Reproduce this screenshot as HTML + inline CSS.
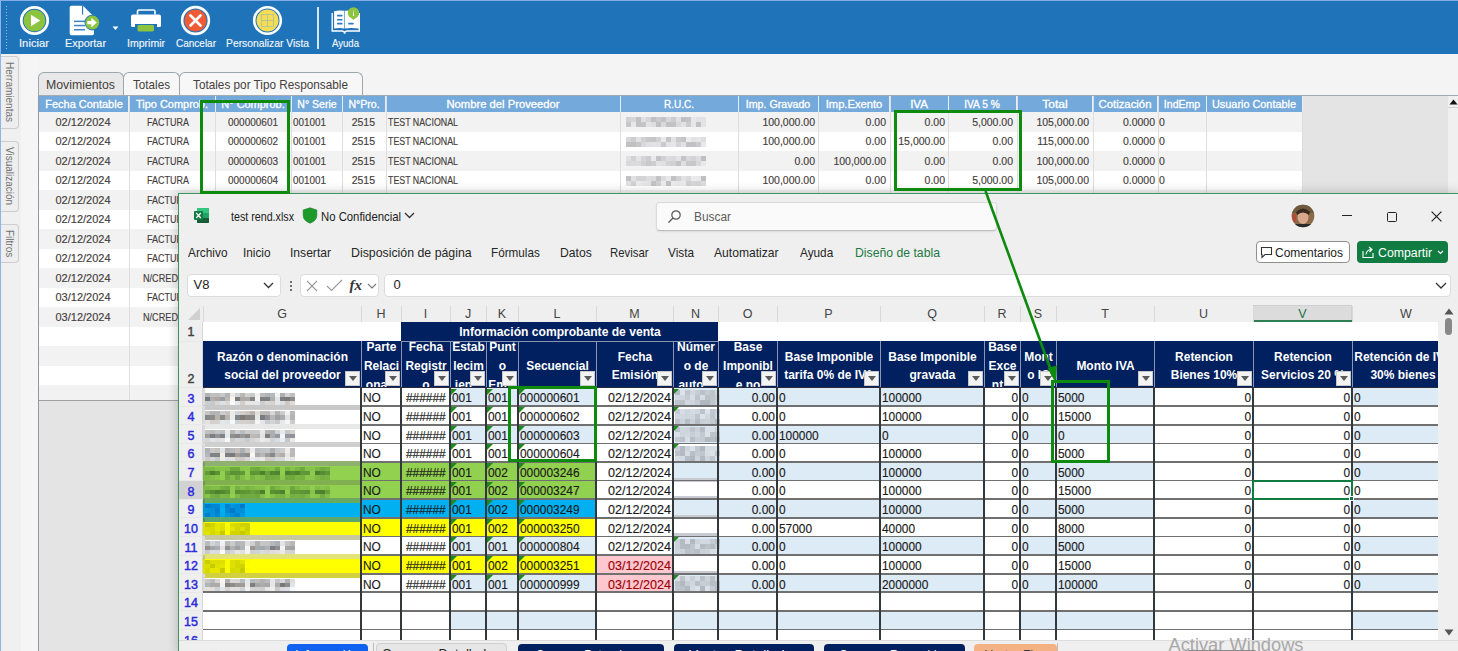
<!DOCTYPE html><html><head><meta charset="utf-8"><style>
html,body{margin:0;padding:0}
body{width:1458px;height:651px;overflow:hidden;position:relative;background:#f4f4f4;font-family:"Liberation Sans",sans-serif}
body div, body span, body svg{position:absolute;box-sizing:border-box}
.t{white-space:nowrap;display:block}
</style></head><body>
<div style="left:0px;top:0px;width:1458px;height:54px;background:#1f73b8"></div>
<div style="left:0px;top:0px;width:1458px;height:1px;background:#86aee6"></div>
<div style="left:0px;top:0px;width:1px;height:651px;background:#8fb4ea"></div>
<div style="left:6px;top:6px;width:1px;height:1px;background:#9cc0e6"></div>
<div style="left:6px;top:9px;width:1px;height:1px;background:#9cc0e6"></div>
<div style="left:6px;top:12px;width:1px;height:1px;background:#9cc0e6"></div>
<div style="left:6px;top:15px;width:1px;height:1px;background:#9cc0e6"></div>
<div style="left:6px;top:18px;width:1px;height:1px;background:#9cc0e6"></div>
<div style="left:6px;top:21px;width:1px;height:1px;background:#9cc0e6"></div>
<div style="left:6px;top:24px;width:1px;height:1px;background:#9cc0e6"></div>
<div style="left:6px;top:27px;width:1px;height:1px;background:#9cc0e6"></div>
<div style="left:6px;top:30px;width:1px;height:1px;background:#9cc0e6"></div>
<div style="left:6px;top:33px;width:1px;height:1px;background:#9cc0e6"></div>
<div style="left:6px;top:36px;width:1px;height:1px;background:#9cc0e6"></div>
<div style="left:6px;top:39px;width:1px;height:1px;background:#9cc0e6"></div>
<div style="left:6px;top:42px;width:1px;height:1px;background:#9cc0e6"></div>
<div style="left:6px;top:45px;width:1px;height:1px;background:#9cc0e6"></div>
<div style="left:6px;top:48px;width:1px;height:1px;background:#9cc0e6"></div>
<svg style="left:19px;top:5px" width="31" height="31" viewBox="0 0 31 31">
<circle cx="15.5" cy="15.5" r="13.2" fill="none" stroke="#fff" stroke-width="2.8"/>
<circle cx="15.5" cy="15.5" r="10.8" fill="#8cc43f"/>
<path d="M12 9.8 L21.2 15.5 L12 21.2 Z" fill="#fff"/>
</svg>
<svg style="left:68px;top:4px" width="34" height="33" viewBox="0 0 34 33">
<path d="M3.5 1.7 H15 L26 12.7 V29.5 Q26 31.3 24.2 31.3 H3.5 Q1.7 31.3 1.7 29.5 V3.5 Q1.7 1.7 3.5 1.7 Z" fill="#fff"/>
<path d="M14.6 1.5 V10.5" stroke="#1f73b8" stroke-width="1.1"/>
<rect x="6" y="16.6" width="11" height="1.5" fill="#3d85c8"/>
<rect x="6" y="20.8" width="11" height="1.5" fill="#3d85c8"/>
<rect x="6" y="25" width="11" height="1.5" fill="#3d85c8"/>
<circle cx="24.3" cy="18.6" r="7.8" fill="#1f73b8"/>
<circle cx="24.3" cy="18.6" r="7" fill="#8cc43f"/>
<path d="M19.3 17 H23.3 V13.8 L28.8 18.6 L23.3 23.4 V20.2 H19.3 Z" fill="#fff"/>
</svg>
<svg style="left:111.5px;top:25.5px" width="7" height="5" viewBox="0 0 7 5"><path d="M0.5 0.5 H6.5 L3.5 4 Z" fill="#fff"/></svg>
<svg style="left:130px;top:8px" width="32" height="25" viewBox="0 0 32 25">
<path d="M7.5 6.5 V3.5 Q7.5 2 9 2 H23.5 Q25 2 25 3.5 V6.5" fill="none" stroke="#fff" stroke-width="1.6"/>
<path d="M3 6.5 H29 Q31 6.5 31 8.5 V17.5 Q31 19 29.5 19 H27 V16 H5 V19 H2.5 Q1 19 1 17.5 V8.5 Q1 6.5 3 6.5 Z" fill="#fff"/>
<rect x="7.5" y="17" width="16.5" height="6.4" rx="1.4" fill="#8cc43f"/>
</svg>
<svg style="left:180px;top:5px" width="31" height="31" viewBox="0 0 31 31">
<circle cx="15.5" cy="15.5" r="13.4" fill="none" stroke="#fff" stroke-width="2.6"/>
<circle cx="15.5" cy="15.5" r="11" fill="#ef5b34"/>
<path d="M10.5 10.5 L20.5 20.5 M20.5 10.5 L10.5 20.5" stroke="#fff" stroke-width="2.6" stroke-linecap="round"/>
</svg>
<svg style="left:252px;top:5px" width="31" height="31" viewBox="0 0 31 31">
<circle cx="15.5" cy="15.5" r="13.3" fill="none" stroke="#fff" stroke-width="2.6"/>
<circle cx="15.5" cy="15.5" r="11" fill="#f8dc55"/>
<rect x="9.5" y="9.5" width="12" height="12" fill="none" stroke="#a8c49a" stroke-width="0.9"/>
<path d="M15.5 9.5 V21.5 M9.5 15.5 H21.5" stroke="#a8c49a" stroke-width="0.9"/>
</svg>
<div style="left:317px;top:7px;width:1.5px;height:42px;background:#d6e6f5"></div>
<svg style="left:330px;top:6px" width="32" height="30" viewBox="0 0 32 30">
<path d="M4.1 5.2 Q9 3.8 14.3 4.8 V22.5 Q9 21.6 4.1 22.5 Z" fill="#fff"/>
<path d="M14.8 4.8 Q20 3.8 29 5.2 V22.5 Q20 21.6 14.8 22.5 Z" fill="#fff"/>
<path d="M2.2 7 V25 H12.5 Q14.5 25.3 14.6 27.6 Q14.7 25.3 16.7 25 H29.3 V7" fill="none" stroke="#fff" stroke-width="1.4"/>
<rect x="7" y="8.8" width="5.5" height="1.6" rx="0.6" fill="#2a7cc4"/>
<rect x="7" y="12.9" width="5.5" height="1.6" rx="0.6" fill="#2a7cc4"/>
<rect x="7" y="16.8" width="5.5" height="1.6" rx="0.6" fill="#2a7cc4"/>
<rect x="18.2" y="16.8" width="5.5" height="1.6" rx="0.6" fill="#2a7cc4"/>
<circle cx="23.5" cy="6.9" r="5.7" fill="#8cc43f"/>
<path d="M20.5 10.5 L23.5 14.2 L26.5 10.5 Z" fill="#8cc43f"/>
<path d="M23.5 3.2 L24.1 10 H22.9 Z" fill="#fff"/>
</svg>
<span id="t1" class="t " style="left:19px;top:35.75px;line-height:14.30px;font-size:11px;color:#f2f7fc;transform:scaleX(1.0224);transform-origin:0 50%;-webkit-text-stroke:0.15px #f2f7fc;">Iniciar</span>
<span id="t2" class="t " style="left:65px;top:35.75px;line-height:14.30px;font-size:11px;color:#f2f7fc;transform:scaleX(0.9861);transform-origin:0 50%;-webkit-text-stroke:0.15px #f2f7fc;">Exportar</span>
<span id="t3" class="t " style="left:127px;top:35.75px;line-height:14.30px;font-size:11px;color:#f2f7fc;transform:scaleX(0.9567);transform-origin:0 50%;-webkit-text-stroke:0.15px #f2f7fc;">Imprimir</span>
<span id="t4" class="t " style="left:176px;top:35.75px;line-height:14.30px;font-size:11px;color:#f2f7fc;transform:scaleX(0.9084);transform-origin:0 50%;-webkit-text-stroke:0.15px #f2f7fc;">Cancelar</span>
<span id="t5" class="t " style="left:226px;top:35.75px;line-height:14.30px;font-size:11px;color:#f2f7fc;transform:scaleX(0.9384);transform-origin:0 50%;-webkit-text-stroke:0.15px #f2f7fc;">Personalizar Vista</span>
<span id="t6" class="t " style="left:332px;top:35.75px;line-height:14.30px;font-size:11px;color:#f2f7fc;transform:scaleX(0.8710);transform-origin:0 50%;-webkit-text-stroke:0.15px #f2f7fc;">Ayuda</span>
<div style="left:1px;top:54px;width:20px;height:597px;background:#f0f0f0"></div>
<div style="left:21px;top:54px;width:17px;height:597px;background:#f5f5f5"></div>
<div style="left:1px;top:56px;width:18px;height:73px;background:#eeeeee;border:1px solid #cdcdcd;border-left:none;border-radius:0 4px 4px 0"></div>
<span class="t" style="left:2px;top:56px;width:15px;height:73px;writing-mode:vertical-rl;font-size:10px;color:#707070;line-height:15px;text-align:center">Herramientas</span>
<div style="left:1px;top:141px;width:18px;height:71px;background:#eeeeee;border:1px solid #cdcdcd;border-left:none;border-radius:0 4px 4px 0"></div>
<span class="t" style="left:2px;top:141px;width:15px;height:71px;writing-mode:vertical-rl;font-size:10px;color:#707070;line-height:15px;text-align:center">Visualización</span>
<div style="left:1px;top:224px;width:18px;height:39px;background:#eeeeee;border:1px solid #cdcdcd;border-left:none;border-radius:0 4px 4px 0"></div>
<span class="t" style="left:2px;top:224px;width:15px;height:39px;writing-mode:vertical-rl;font-size:10px;color:#707070;line-height:15px;text-align:center">Filtros</span>
<div style="left:38px;top:72px;width:86px;height:24px;background:#e8e8e8;border:1px solid #9aa7ad;border-bottom:none;border-radius:6px 6px 0 0"></div>
<div style="left:123px;top:72px;width:57px;height:24px;background:#f7f7f7;border:1px solid #9aa7ad;border-bottom:none;border-radius:6px 6px 0 0"></div>
<div style="left:179px;top:72px;width:184px;height:24px;background:#f7f7f7;border:1px solid #9aa7ad;border-bottom:none;border-radius:6px 6px 0 0"></div>
<span id="t7" class="t " style="left:46px;top:76.22px;line-height:17.55px;font-size:13.5px;color:#46403b;transform:scaleX(0.9105);transform-origin:0 50%;">Movimientos</span>
<span id="t8" class="t " style="left:133px;top:76.22px;line-height:17.55px;font-size:13.5px;color:#46403b;transform:scaleX(0.8649);transform-origin:0 50%;">Totales</span>
<span id="t9" class="t " style="left:193px;top:76.22px;line-height:17.55px;font-size:13.5px;color:#46403b;transform:scaleX(0.8714);transform-origin:0 50%;">Totales por Tipo Responsable</span>
<div style="left:38px;top:95px;width:1420px;height:306px;background:#e4e4e4"></div>
<div style="left:38px;top:95px;width:1px;height:556px;background:#8d9ba1"></div>
<div style="left:38px;top:95px;width:1420px;height:1px;background:#a3abb0"></div>
<div style="left:39px;top:401px;width:1419px;height:250px;background:#e4e4e4"></div>
<div style="left:39px;top:96px;width:1263px;height:16px;background:#74a9db"></div>
<div style="left:39px;top:112.0px;width:1263px;height:20.0px;background:#f2f2f2"></div>
<div style="left:39px;top:131.5px;width:1263px;height:20.0px;background:#ffffff"></div>
<div style="left:39px;top:151.0px;width:1263px;height:20.0px;background:#f2f2f2"></div>
<div style="left:39px;top:170.5px;width:1263px;height:20.0px;background:#ffffff"></div>
<div style="left:39px;top:190.0px;width:1263px;height:20.0px;background:#f2f2f2"></div>
<div style="left:39px;top:209.5px;width:1263px;height:20.0px;background:#ffffff"></div>
<div style="left:39px;top:229.0px;width:1263px;height:20.0px;background:#f2f2f2"></div>
<div style="left:39px;top:248.5px;width:1263px;height:20.0px;background:#ffffff"></div>
<div style="left:39px;top:268.0px;width:1263px;height:20.0px;background:#f2f2f2"></div>
<div style="left:39px;top:287.5px;width:1263px;height:20.0px;background:#ffffff"></div>
<div style="left:39px;top:307.0px;width:1263px;height:20.0px;background:#f2f2f2"></div>
<div style="left:39px;top:326.5px;width:1263px;height:20.0px;background:#ffffff"></div>
<div style="left:39px;top:346.0px;width:1263px;height:20.0px;background:#f2f2f2"></div>
<div style="left:39px;top:365.5px;width:1263px;height:20.0px;background:#ffffff"></div>
<div style="left:39px;top:385.0px;width:1263px;height:15.5px;background:#f2f2f2"></div>
<div style="left:128.5px;top:96px;width:1px;height:304px;background:#dedede"></div>
<div style="left:128.0px;top:96px;width:1px;height:16px;background:#e6eef6"></div>
<div style="left:215px;top:96px;width:1px;height:304px;background:#dedede"></div>
<div style="left:214.5px;top:96px;width:1px;height:16px;background:#e6eef6"></div>
<div style="left:291px;top:96px;width:1px;height:304px;background:#dedede"></div>
<div style="left:290.5px;top:96px;width:1px;height:16px;background:#e6eef6"></div>
<div style="left:342.4px;top:96px;width:1px;height:304px;background:#dedede"></div>
<div style="left:341.9px;top:96px;width:1px;height:16px;background:#e6eef6"></div>
<div style="left:385.8px;top:96px;width:1px;height:304px;background:#dedede"></div>
<div style="left:385.3px;top:96px;width:1px;height:16px;background:#e6eef6"></div>
<div style="left:620px;top:96px;width:1px;height:304px;background:#dedede"></div>
<div style="left:619.5px;top:96px;width:1px;height:16px;background:#e6eef6"></div>
<div style="left:738px;top:96px;width:1px;height:304px;background:#dedede"></div>
<div style="left:737.5px;top:96px;width:1px;height:16px;background:#e6eef6"></div>
<div style="left:818px;top:96px;width:1px;height:304px;background:#dedede"></div>
<div style="left:817.5px;top:96px;width:1px;height:16px;background:#e6eef6"></div>
<div style="left:889.5px;top:96px;width:1px;height:304px;background:#dedede"></div>
<div style="left:889.0px;top:96px;width:1px;height:16px;background:#e6eef6"></div>
<div style="left:948px;top:96px;width:1px;height:304px;background:#dedede"></div>
<div style="left:947.5px;top:96px;width:1px;height:16px;background:#e6eef6"></div>
<div style="left:1016.5px;top:96px;width:1px;height:304px;background:#dedede"></div>
<div style="left:1016.0px;top:96px;width:1px;height:16px;background:#e6eef6"></div>
<div style="left:1092.5px;top:96px;width:1px;height:304px;background:#dedede"></div>
<div style="left:1092.0px;top:96px;width:1px;height:16px;background:#e6eef6"></div>
<div style="left:1157.5px;top:96px;width:1px;height:304px;background:#dedede"></div>
<div style="left:1157.0px;top:96px;width:1px;height:16px;background:#e6eef6"></div>
<div style="left:1206px;top:96px;width:1px;height:304px;background:#dedede"></div>
<div style="left:1205.5px;top:96px;width:1px;height:16px;background:#e6eef6"></div>
<div style="left:1302px;top:96px;width:1px;height:304px;background:#dedede"></div>
<div style="left:1301.5px;top:96px;width:1px;height:16px;background:#e6eef6"></div>
<span id="t10" class="t " style="left:83.75px;top:98.17px;line-height:13.65px;font-size:10.5px;color:#ffffff;transform:translateX(-50%) scaleX(1.0467);transform-origin:50% 50%;-webkit-text-stroke:0.3px #fff;">Fecha Contable</span>
<span id="t11" class="t " style="left:171.75px;top:98.17px;line-height:13.65px;font-size:10.5px;color:#ffffff;transform:translateX(-50%) scaleX(1.0425);transform-origin:50% 50%;-webkit-text-stroke:0.3px #fff;">Tipo Comprob.</span>
<span id="t12" class="t " style="left:253.0px;top:98.17px;line-height:13.65px;font-size:10.5px;color:#ffffff;transform:translateX(-50%) scaleX(1.0425);transform-origin:50% 50%;-webkit-text-stroke:0.3px #fff;">N° Comprob.</span>
<span id="t13" class="t " style="left:316.7px;top:98.17px;line-height:13.65px;font-size:10.5px;color:#ffffff;transform:translateX(-50%) scaleX(1.0021);transform-origin:50% 50%;-webkit-text-stroke:0.3px #fff;">N° Serie</span>
<span id="t14" class="t " style="left:364.1px;top:98.17px;line-height:13.65px;font-size:10.5px;color:#ffffff;transform:translateX(-50%) scaleX(1.0049);transform-origin:50% 50%;-webkit-text-stroke:0.3px #fff;">N°Pro.</span>
<span id="t15" class="t " style="left:502.9px;top:98.17px;line-height:13.65px;font-size:10.5px;color:#ffffff;transform:translateX(-50%) scaleX(1.0697);transform-origin:50% 50%;-webkit-text-stroke:0.3px #fff;">Nombre del Proveedor</span>
<span id="t16" class="t " style="left:679.0px;top:98.17px;line-height:13.65px;font-size:10.5px;color:#ffffff;transform:translateX(-50%) scaleX(0.9524);transform-origin:50% 50%;-webkit-text-stroke:0.3px #fff;">R.U.C.</span>
<span id="t17" class="t " style="left:778.0px;top:98.17px;line-height:13.65px;font-size:10.5px;color:#ffffff;transform:translateX(-50%) scaleX(1.0138);transform-origin:50% 50%;-webkit-text-stroke:0.3px #fff;">Imp. Gravado</span>
<span id="t18" class="t " style="left:853.75px;top:98.17px;line-height:13.65px;font-size:10.5px;color:#ffffff;transform:translateX(-50%) scaleX(1.0654);transform-origin:50% 50%;-webkit-text-stroke:0.3px #fff;">Imp.Exento</span>
<span id="t19" class="t " style="left:918.75px;top:98.17px;line-height:13.65px;font-size:10.5px;color:#ffffff;transform:translateX(-50%) scaleX(1.0956);transform-origin:50% 50%;-webkit-text-stroke:0.3px #fff;">IVA</span>
<span id="t20" class="t " style="left:982.25px;top:98.17px;line-height:13.65px;font-size:10.5px;color:#ffffff;transform:translateX(-50%) scaleX(0.9705);transform-origin:50% 50%;-webkit-text-stroke:0.3px #fff;">IVA 5 %</span>
<span id="t21" class="t " style="left:1054.5px;top:98.17px;line-height:13.65px;font-size:10.5px;color:#ffffff;transform:translateX(-50%) scaleX(1.1448);transform-origin:50% 50%;-webkit-text-stroke:0.3px #fff;">Total</span>
<span id="t22" class="t " style="left:1125.0px;top:98.17px;line-height:13.65px;font-size:10.5px;color:#ffffff;transform:translateX(-50%) scaleX(1.0809);transform-origin:50% 50%;-webkit-text-stroke:0.3px #fff;">Cotización</span>
<span id="t23" class="t " style="left:1181.75px;top:98.17px;line-height:13.65px;font-size:10.5px;color:#ffffff;transform:translateX(-50%) scaleX(1.0031);transform-origin:50% 50%;-webkit-text-stroke:0.3px #fff;">IndEmp</span>
<span id="t24" class="t " style="left:1254.0px;top:98.17px;line-height:13.65px;font-size:10.5px;color:#ffffff;transform:translateX(-50%) scaleX(1.0352);transform-origin:50% 50%;-webkit-text-stroke:0.3px #fff;">Usuario Contable</span>
<span id="t25" class="t " style="left:83.2px;top:115.52px;line-height:13.65px;font-size:10.5px;color:#45403c;transform:translateX(-50%) scaleX(1.0464);transform-origin:50% 50%;-webkit-text-stroke:0.15px #45403c;">02/12/2024</span>
<span id="t26" class="t " style="left:167.7px;top:115.52px;line-height:13.65px;font-size:10.5px;color:#45403c;transform:translateX(-50%) scaleX(0.8569);transform-origin:50% 50%;-webkit-text-stroke:0.15px #45403c;">FACTURA</span>
<span id="t27" class="t " style="left:252.5px;top:115.52px;line-height:13.65px;font-size:10.5px;color:#45403c;transform:translateX(-50%) scaleX(0.9512);transform-origin:50% 50%;-webkit-text-stroke:0.15px #45403c;">000000601</span>
<span id="t28" class="t " style="left:292.7px;top:115.52px;line-height:13.65px;font-size:10.5px;color:#45403c;transform:scaleX(0.9416);transform-origin:0 50%;-webkit-text-stroke:0.15px #45403c;">001001</span>
<span id="t29" class="t " style="left:375px;top:115.52px;line-height:13.65px;font-size:10.5px;color:#45403c;transform:translateX(-100%) scaleX(1.0000);transform-origin:100% 50%;-webkit-text-stroke:0.15px #45403c;">2515</span>
<span id="t30" class="t " style="left:388.3px;top:115.52px;line-height:13.65px;font-size:10.5px;color:#45403c;transform:scaleX(0.8408);transform-origin:0 50%;-webkit-text-stroke:0.15px #45403c;">TEST NACIONAL</span>
<div style="left:626px;top:117px;width:5px;height:5px;background:rgb(210,210,213)"></div>
<div style="left:626px;top:122px;width:5px;height:5px;background:rgb(199,199,202)"></div>
<div style="left:631px;top:117px;width:5px;height:5px;background:rgb(215,215,218)"></div>
<div style="left:631px;top:122px;width:5px;height:5px;background:rgb(231,231,234)"></div>
<div style="left:636px;top:117px;width:5px;height:5px;background:rgb(193,193,196)"></div>
<div style="left:636px;top:122px;width:5px;height:5px;background:rgb(194,194,197)"></div>
<div style="left:641px;top:117px;width:5px;height:5px;background:rgb(224,224,227)"></div>
<div style="left:641px;top:122px;width:5px;height:5px;background:rgb(196,196,199)"></div>
<div style="left:646px;top:117px;width:5px;height:5px;background:rgb(213,213,216)"></div>
<div style="left:646px;top:122px;width:5px;height:5px;background:rgb(227,227,230)"></div>
<div style="left:651px;top:117px;width:5px;height:5px;background:rgb(193,193,196)"></div>
<div style="left:651px;top:122px;width:5px;height:5px;background:rgb(222,222,225)"></div>
<div style="left:656px;top:117px;width:5px;height:5px;background:rgb(203,203,206)"></div>
<div style="left:656px;top:122px;width:5px;height:5px;background:rgb(192,192,195)"></div>
<div style="left:661px;top:117px;width:5px;height:5px;background:rgb(195,195,198)"></div>
<div style="left:661px;top:122px;width:5px;height:5px;background:rgb(217,217,220)"></div>
<div style="left:666px;top:117px;width:5px;height:5px;background:rgb(216,216,219)"></div>
<div style="left:666px;top:122px;width:5px;height:5px;background:rgb(194,194,197)"></div>
<div style="left:671px;top:117px;width:5px;height:5px;background:rgb(205,205,208)"></div>
<div style="left:671px;top:122px;width:5px;height:5px;background:rgb(195,195,198)"></div>
<div style="left:676px;top:117px;width:5px;height:5px;background:rgb(225,225,228)"></div>
<div style="left:676px;top:122px;width:5px;height:5px;background:rgb(217,217,220)"></div>
<div style="left:681px;top:117px;width:5px;height:5px;background:rgb(193,193,196)"></div>
<div style="left:681px;top:122px;width:5px;height:5px;background:rgb(226,226,229)"></div>
<div style="left:686px;top:117px;width:5px;height:5px;background:rgb(197,197,200)"></div>
<div style="left:686px;top:122px;width:5px;height:5px;background:rgb(204,204,207)"></div>
<div style="left:691px;top:117px;width:5px;height:5px;background:rgb(230,230,233)"></div>
<div style="left:691px;top:122px;width:5px;height:5px;background:rgb(230,230,233)"></div>
<div style="left:696px;top:117px;width:5px;height:5px;background:rgb(227,227,230)"></div>
<div style="left:696px;top:122px;width:5px;height:5px;background:rgb(193,193,196)"></div>
<div style="left:701px;top:117px;width:5px;height:5px;background:rgb(226,226,229)"></div>
<div style="left:701px;top:122px;width:5px;height:5px;background:rgb(227,227,230)"></div>
<span id="t31" class="t " style="left:815px;top:115.52px;line-height:13.65px;font-size:10.5px;color:#45403c;transform:translateX(-100%) scaleX(1.0000);transform-origin:100% 50%;-webkit-text-stroke:0.15px #45403c;">100,000.00</span>
<span id="t32" class="t " style="left:886px;top:115.52px;line-height:13.65px;font-size:10.5px;color:#45403c;transform:translateX(-100%) scaleX(1.0000);transform-origin:100% 50%;-webkit-text-stroke:0.15px #45403c;">0.00</span>
<span id="t33" class="t " style="left:945px;top:115.52px;line-height:13.65px;font-size:10.5px;color:#45403c;transform:translateX(-100%) scaleX(1.0000);transform-origin:100% 50%;-webkit-text-stroke:0.15px #45403c;">0.00</span>
<span id="t34" class="t " style="left:1013px;top:115.52px;line-height:13.65px;font-size:10.5px;color:#45403c;transform:translateX(-100%) scaleX(1.0000);transform-origin:100% 50%;-webkit-text-stroke:0.15px #45403c;">5,000.00</span>
<span id="t35" class="t " style="left:1089px;top:115.52px;line-height:13.65px;font-size:10.5px;color:#45403c;transform:translateX(-100%) scaleX(1.0000);transform-origin:100% 50%;-webkit-text-stroke:0.15px #45403c;">105,000.00</span>
<span id="t36" class="t " style="left:1155px;top:115.52px;line-height:13.65px;font-size:10.5px;color:#45403c;transform:translateX(-100%) scaleX(1.0000);transform-origin:100% 50%;-webkit-text-stroke:0.15px #45403c;">0.0000</span>
<span id="t37" class="t " style="left:1159px;top:115.52px;line-height:13.65px;font-size:10.5px;color:#45403c;transform:scaleX(1.0000);transform-origin:0 50%;-webkit-text-stroke:0.15px #45403c;">0</span>
<span id="t38" class="t " style="left:83.2px;top:135.03px;line-height:13.65px;font-size:10.5px;color:#45403c;transform:translateX(-50%) scaleX(1.0464);transform-origin:50% 50%;-webkit-text-stroke:0.15px #45403c;">02/12/2024</span>
<span id="t39" class="t " style="left:167.7px;top:135.03px;line-height:13.65px;font-size:10.5px;color:#45403c;transform:translateX(-50%) scaleX(0.8569);transform-origin:50% 50%;-webkit-text-stroke:0.15px #45403c;">FACTURA</span>
<span id="t40" class="t " style="left:252.5px;top:135.03px;line-height:13.65px;font-size:10.5px;color:#45403c;transform:translateX(-50%) scaleX(0.9512);transform-origin:50% 50%;-webkit-text-stroke:0.15px #45403c;">000000602</span>
<span id="t41" class="t " style="left:292.7px;top:135.03px;line-height:13.65px;font-size:10.5px;color:#45403c;transform:scaleX(0.9416);transform-origin:0 50%;-webkit-text-stroke:0.15px #45403c;">001001</span>
<span id="t42" class="t " style="left:375px;top:135.03px;line-height:13.65px;font-size:10.5px;color:#45403c;transform:translateX(-100%) scaleX(1.0000);transform-origin:100% 50%;-webkit-text-stroke:0.15px #45403c;">2515</span>
<span id="t43" class="t " style="left:388.3px;top:135.03px;line-height:13.65px;font-size:10.5px;color:#45403c;transform:scaleX(0.8408);transform-origin:0 50%;-webkit-text-stroke:0.15px #45403c;">TEST NACIONAL</span>
<div style="left:626px;top:137px;width:5px;height:5px;background:rgb(215,215,218)"></div>
<div style="left:626px;top:142px;width:5px;height:5px;background:rgb(193,193,196)"></div>
<div style="left:631px;top:137px;width:5px;height:5px;background:rgb(204,204,207)"></div>
<div style="left:631px;top:142px;width:5px;height:5px;background:rgb(192,192,195)"></div>
<div style="left:636px;top:137px;width:5px;height:5px;background:rgb(225,225,228)"></div>
<div style="left:636px;top:142px;width:5px;height:5px;background:rgb(198,198,201)"></div>
<div style="left:641px;top:137px;width:5px;height:5px;background:rgb(208,208,211)"></div>
<div style="left:641px;top:142px;width:5px;height:5px;background:rgb(216,216,219)"></div>
<div style="left:646px;top:137px;width:5px;height:5px;background:rgb(199,199,202)"></div>
<div style="left:646px;top:142px;width:5px;height:5px;background:rgb(224,224,227)"></div>
<div style="left:651px;top:137px;width:5px;height:5px;background:rgb(197,197,200)"></div>
<div style="left:651px;top:142px;width:5px;height:5px;background:rgb(226,226,229)"></div>
<div style="left:656px;top:137px;width:5px;height:5px;background:rgb(209,209,212)"></div>
<div style="left:656px;top:142px;width:5px;height:5px;background:rgb(225,225,228)"></div>
<div style="left:661px;top:137px;width:5px;height:5px;background:rgb(233,233,236)"></div>
<div style="left:661px;top:142px;width:5px;height:5px;background:rgb(201,201,204)"></div>
<div style="left:666px;top:137px;width:5px;height:5px;background:rgb(196,196,199)"></div>
<div style="left:666px;top:142px;width:5px;height:5px;background:rgb(227,227,230)"></div>
<div style="left:671px;top:137px;width:5px;height:5px;background:rgb(226,226,229)"></div>
<div style="left:671px;top:142px;width:5px;height:5px;background:rgb(230,230,233)"></div>
<div style="left:676px;top:137px;width:5px;height:5px;background:rgb(202,202,205)"></div>
<div style="left:676px;top:142px;width:5px;height:5px;background:rgb(213,213,216)"></div>
<div style="left:681px;top:137px;width:5px;height:5px;background:rgb(196,196,199)"></div>
<div style="left:681px;top:142px;width:5px;height:5px;background:rgb(225,225,228)"></div>
<div style="left:686px;top:137px;width:5px;height:5px;background:rgb(235,235,238)"></div>
<div style="left:686px;top:142px;width:5px;height:5px;background:rgb(194,194,197)"></div>
<div style="left:691px;top:137px;width:5px;height:5px;background:rgb(226,226,229)"></div>
<div style="left:691px;top:142px;width:5px;height:5px;background:rgb(193,193,196)"></div>
<div style="left:696px;top:137px;width:5px;height:5px;background:rgb(229,229,232)"></div>
<div style="left:696px;top:142px;width:5px;height:5px;background:rgb(203,203,206)"></div>
<div style="left:701px;top:137px;width:5px;height:5px;background:rgb(221,221,224)"></div>
<div style="left:701px;top:142px;width:5px;height:5px;background:rgb(233,233,236)"></div>
<span id="t44" class="t " style="left:815px;top:135.03px;line-height:13.65px;font-size:10.5px;color:#45403c;transform:translateX(-100%) scaleX(1.0000);transform-origin:100% 50%;-webkit-text-stroke:0.15px #45403c;">100,000.00</span>
<span id="t45" class="t " style="left:886px;top:135.03px;line-height:13.65px;font-size:10.5px;color:#45403c;transform:translateX(-100%) scaleX(1.0000);transform-origin:100% 50%;-webkit-text-stroke:0.15px #45403c;">0.00</span>
<span id="t46" class="t " style="left:945px;top:135.03px;line-height:13.65px;font-size:10.5px;color:#45403c;transform:translateX(-100%) scaleX(1.0000);transform-origin:100% 50%;-webkit-text-stroke:0.15px #45403c;">15,000.00</span>
<span id="t47" class="t " style="left:1013px;top:135.03px;line-height:13.65px;font-size:10.5px;color:#45403c;transform:translateX(-100%) scaleX(1.0000);transform-origin:100% 50%;-webkit-text-stroke:0.15px #45403c;">0.00</span>
<span id="t48" class="t " style="left:1089px;top:135.03px;line-height:13.65px;font-size:10.5px;color:#45403c;transform:translateX(-100%) scaleX(1.0000);transform-origin:100% 50%;-webkit-text-stroke:0.15px #45403c;">115,000.00</span>
<span id="t49" class="t " style="left:1155px;top:135.03px;line-height:13.65px;font-size:10.5px;color:#45403c;transform:translateX(-100%) scaleX(1.0000);transform-origin:100% 50%;-webkit-text-stroke:0.15px #45403c;">0.0000</span>
<span id="t50" class="t " style="left:1159px;top:135.03px;line-height:13.65px;font-size:10.5px;color:#45403c;transform:scaleX(1.0000);transform-origin:0 50%;-webkit-text-stroke:0.15px #45403c;">0</span>
<span id="t51" class="t " style="left:83.2px;top:154.53px;line-height:13.65px;font-size:10.5px;color:#45403c;transform:translateX(-50%) scaleX(1.0464);transform-origin:50% 50%;-webkit-text-stroke:0.15px #45403c;">02/12/2024</span>
<span id="t52" class="t " style="left:167.7px;top:154.53px;line-height:13.65px;font-size:10.5px;color:#45403c;transform:translateX(-50%) scaleX(0.8569);transform-origin:50% 50%;-webkit-text-stroke:0.15px #45403c;">FACTURA</span>
<span id="t53" class="t " style="left:252.5px;top:154.53px;line-height:13.65px;font-size:10.5px;color:#45403c;transform:translateX(-50%) scaleX(0.9512);transform-origin:50% 50%;-webkit-text-stroke:0.15px #45403c;">000000603</span>
<span id="t54" class="t " style="left:292.7px;top:154.53px;line-height:13.65px;font-size:10.5px;color:#45403c;transform:scaleX(0.9416);transform-origin:0 50%;-webkit-text-stroke:0.15px #45403c;">001001</span>
<span id="t55" class="t " style="left:375px;top:154.53px;line-height:13.65px;font-size:10.5px;color:#45403c;transform:translateX(-100%) scaleX(1.0000);transform-origin:100% 50%;-webkit-text-stroke:0.15px #45403c;">2515</span>
<span id="t56" class="t " style="left:388.3px;top:154.53px;line-height:13.65px;font-size:10.5px;color:#45403c;transform:scaleX(0.8408);transform-origin:0 50%;-webkit-text-stroke:0.15px #45403c;">TEST NACIONAL</span>
<div style="left:626px;top:156px;width:5px;height:5px;background:rgb(224,224,227)"></div>
<div style="left:626px;top:161px;width:5px;height:5px;background:rgb(217,217,220)"></div>
<div style="left:631px;top:156px;width:5px;height:5px;background:rgb(210,210,213)"></div>
<div style="left:631px;top:161px;width:5px;height:5px;background:rgb(219,219,222)"></div>
<div style="left:636px;top:156px;width:5px;height:5px;background:rgb(227,227,230)"></div>
<div style="left:636px;top:161px;width:5px;height:5px;background:rgb(219,219,222)"></div>
<div style="left:641px;top:156px;width:5px;height:5px;background:rgb(213,213,216)"></div>
<div style="left:641px;top:161px;width:5px;height:5px;background:rgb(209,209,212)"></div>
<div style="left:646px;top:156px;width:5px;height:5px;background:rgb(205,205,208)"></div>
<div style="left:646px;top:161px;width:5px;height:5px;background:rgb(201,201,204)"></div>
<div style="left:651px;top:156px;width:5px;height:5px;background:rgb(234,234,237)"></div>
<div style="left:651px;top:161px;width:5px;height:5px;background:rgb(205,205,208)"></div>
<div style="left:656px;top:156px;width:5px;height:5px;background:rgb(195,195,198)"></div>
<div style="left:656px;top:161px;width:5px;height:5px;background:rgb(226,226,229)"></div>
<div style="left:661px;top:156px;width:5px;height:5px;background:rgb(209,209,212)"></div>
<div style="left:661px;top:161px;width:5px;height:5px;background:rgb(223,223,226)"></div>
<div style="left:666px;top:156px;width:5px;height:5px;background:rgb(221,221,224)"></div>
<div style="left:666px;top:161px;width:5px;height:5px;background:rgb(211,211,214)"></div>
<div style="left:671px;top:156px;width:5px;height:5px;background:rgb(218,218,221)"></div>
<div style="left:671px;top:161px;width:5px;height:5px;background:rgb(208,208,211)"></div>
<div style="left:676px;top:156px;width:5px;height:5px;background:rgb(228,228,231)"></div>
<div style="left:676px;top:161px;width:5px;height:5px;background:rgb(194,194,197)"></div>
<div style="left:681px;top:156px;width:5px;height:5px;background:rgb(197,197,200)"></div>
<div style="left:681px;top:161px;width:5px;height:5px;background:rgb(222,222,225)"></div>
<div style="left:686px;top:156px;width:5px;height:5px;background:rgb(216,216,219)"></div>
<div style="left:686px;top:161px;width:5px;height:5px;background:rgb(200,200,203)"></div>
<div style="left:691px;top:156px;width:5px;height:5px;background:rgb(211,211,214)"></div>
<div style="left:691px;top:161px;width:5px;height:5px;background:rgb(199,199,202)"></div>
<div style="left:696px;top:156px;width:5px;height:5px;background:rgb(221,221,224)"></div>
<div style="left:696px;top:161px;width:5px;height:5px;background:rgb(216,216,219)"></div>
<div style="left:701px;top:156px;width:5px;height:5px;background:rgb(192,192,195)"></div>
<div style="left:701px;top:161px;width:5px;height:5px;background:rgb(232,232,235)"></div>
<span id="t57" class="t " style="left:815px;top:154.53px;line-height:13.65px;font-size:10.5px;color:#45403c;transform:translateX(-100%) scaleX(1.0000);transform-origin:100% 50%;-webkit-text-stroke:0.15px #45403c;">0.00</span>
<span id="t58" class="t " style="left:886px;top:154.53px;line-height:13.65px;font-size:10.5px;color:#45403c;transform:translateX(-100%) scaleX(1.0000);transform-origin:100% 50%;-webkit-text-stroke:0.15px #45403c;">100,000.00</span>
<span id="t59" class="t " style="left:945px;top:154.53px;line-height:13.65px;font-size:10.5px;color:#45403c;transform:translateX(-100%) scaleX(1.0000);transform-origin:100% 50%;-webkit-text-stroke:0.15px #45403c;">0.00</span>
<span id="t60" class="t " style="left:1013px;top:154.53px;line-height:13.65px;font-size:10.5px;color:#45403c;transform:translateX(-100%) scaleX(1.0000);transform-origin:100% 50%;-webkit-text-stroke:0.15px #45403c;">0.00</span>
<span id="t61" class="t " style="left:1089px;top:154.53px;line-height:13.65px;font-size:10.5px;color:#45403c;transform:translateX(-100%) scaleX(1.0000);transform-origin:100% 50%;-webkit-text-stroke:0.15px #45403c;">100,000.00</span>
<span id="t62" class="t " style="left:1155px;top:154.53px;line-height:13.65px;font-size:10.5px;color:#45403c;transform:translateX(-100%) scaleX(1.0000);transform-origin:100% 50%;-webkit-text-stroke:0.15px #45403c;">0.0000</span>
<span id="t63" class="t " style="left:1159px;top:154.53px;line-height:13.65px;font-size:10.5px;color:#45403c;transform:scaleX(1.0000);transform-origin:0 50%;-webkit-text-stroke:0.15px #45403c;">0</span>
<span id="t64" class="t " style="left:83.2px;top:174.03px;line-height:13.65px;font-size:10.5px;color:#45403c;transform:translateX(-50%) scaleX(1.0464);transform-origin:50% 50%;-webkit-text-stroke:0.15px #45403c;">02/12/2024</span>
<span id="t65" class="t " style="left:167.7px;top:174.03px;line-height:13.65px;font-size:10.5px;color:#45403c;transform:translateX(-50%) scaleX(0.8569);transform-origin:50% 50%;-webkit-text-stroke:0.15px #45403c;">FACTURA</span>
<span id="t66" class="t " style="left:252.5px;top:174.03px;line-height:13.65px;font-size:10.5px;color:#45403c;transform:translateX(-50%) scaleX(0.9512);transform-origin:50% 50%;-webkit-text-stroke:0.15px #45403c;">000000604</span>
<span id="t67" class="t " style="left:292.7px;top:174.03px;line-height:13.65px;font-size:10.5px;color:#45403c;transform:scaleX(0.9416);transform-origin:0 50%;-webkit-text-stroke:0.15px #45403c;">001001</span>
<span id="t68" class="t " style="left:375px;top:174.03px;line-height:13.65px;font-size:10.5px;color:#45403c;transform:translateX(-100%) scaleX(1.0000);transform-origin:100% 50%;-webkit-text-stroke:0.15px #45403c;">2515</span>
<span id="t69" class="t " style="left:388.3px;top:174.03px;line-height:13.65px;font-size:10.5px;color:#45403c;transform:scaleX(0.8408);transform-origin:0 50%;-webkit-text-stroke:0.15px #45403c;">TEST NACIONAL</span>
<div style="left:626px;top:176px;width:5px;height:5px;background:rgb(194,194,197)"></div>
<div style="left:626px;top:181px;width:5px;height:5px;background:rgb(225,225,228)"></div>
<div style="left:631px;top:176px;width:5px;height:5px;background:rgb(226,226,229)"></div>
<div style="left:631px;top:181px;width:5px;height:5px;background:rgb(210,210,213)"></div>
<div style="left:636px;top:176px;width:5px;height:5px;background:rgb(211,211,214)"></div>
<div style="left:636px;top:181px;width:5px;height:5px;background:rgb(234,234,237)"></div>
<div style="left:641px;top:176px;width:5px;height:5px;background:rgb(212,212,215)"></div>
<div style="left:641px;top:181px;width:5px;height:5px;background:rgb(228,228,231)"></div>
<div style="left:646px;top:176px;width:5px;height:5px;background:rgb(221,221,224)"></div>
<div style="left:646px;top:181px;width:5px;height:5px;background:rgb(227,227,230)"></div>
<div style="left:651px;top:176px;width:5px;height:5px;background:rgb(219,219,222)"></div>
<div style="left:651px;top:181px;width:5px;height:5px;background:rgb(194,194,197)"></div>
<div style="left:656px;top:176px;width:5px;height:5px;background:rgb(195,195,198)"></div>
<div style="left:656px;top:181px;width:5px;height:5px;background:rgb(207,207,210)"></div>
<div style="left:661px;top:176px;width:5px;height:5px;background:rgb(220,220,223)"></div>
<div style="left:661px;top:181px;width:5px;height:5px;background:rgb(234,234,237)"></div>
<div style="left:666px;top:176px;width:5px;height:5px;background:rgb(232,232,235)"></div>
<div style="left:666px;top:181px;width:5px;height:5px;background:rgb(194,194,197)"></div>
<div style="left:671px;top:176px;width:5px;height:5px;background:rgb(193,193,196)"></div>
<div style="left:671px;top:181px;width:5px;height:5px;background:rgb(234,234,237)"></div>
<div style="left:676px;top:176px;width:5px;height:5px;background:rgb(209,209,212)"></div>
<div style="left:676px;top:181px;width:5px;height:5px;background:rgb(231,231,234)"></div>
<div style="left:681px;top:176px;width:5px;height:5px;background:rgb(226,226,229)"></div>
<div style="left:681px;top:181px;width:5px;height:5px;background:rgb(233,233,236)"></div>
<div style="left:686px;top:176px;width:5px;height:5px;background:rgb(218,218,221)"></div>
<div style="left:686px;top:181px;width:5px;height:5px;background:rgb(208,208,211)"></div>
<div style="left:691px;top:176px;width:5px;height:5px;background:rgb(235,235,238)"></div>
<div style="left:691px;top:181px;width:5px;height:5px;background:rgb(214,214,217)"></div>
<div style="left:696px;top:176px;width:5px;height:5px;background:rgb(232,232,235)"></div>
<div style="left:696px;top:181px;width:5px;height:5px;background:rgb(212,212,215)"></div>
<div style="left:701px;top:176px;width:5px;height:5px;background:rgb(191,191,194)"></div>
<div style="left:701px;top:181px;width:5px;height:5px;background:rgb(219,219,222)"></div>
<span id="t70" class="t " style="left:815px;top:174.03px;line-height:13.65px;font-size:10.5px;color:#45403c;transform:translateX(-100%) scaleX(1.0000);transform-origin:100% 50%;-webkit-text-stroke:0.15px #45403c;">100,000.00</span>
<span id="t71" class="t " style="left:886px;top:174.03px;line-height:13.65px;font-size:10.5px;color:#45403c;transform:translateX(-100%) scaleX(1.0000);transform-origin:100% 50%;-webkit-text-stroke:0.15px #45403c;">0.00</span>
<span id="t72" class="t " style="left:945px;top:174.03px;line-height:13.65px;font-size:10.5px;color:#45403c;transform:translateX(-100%) scaleX(1.0000);transform-origin:100% 50%;-webkit-text-stroke:0.15px #45403c;">0.00</span>
<span id="t73" class="t " style="left:1013px;top:174.03px;line-height:13.65px;font-size:10.5px;color:#45403c;transform:translateX(-100%) scaleX(1.0000);transform-origin:100% 50%;-webkit-text-stroke:0.15px #45403c;">5,000.00</span>
<span id="t74" class="t " style="left:1089px;top:174.03px;line-height:13.65px;font-size:10.5px;color:#45403c;transform:translateX(-100%) scaleX(1.0000);transform-origin:100% 50%;-webkit-text-stroke:0.15px #45403c;">105,000.00</span>
<span id="t75" class="t " style="left:1155px;top:174.03px;line-height:13.65px;font-size:10.5px;color:#45403c;transform:translateX(-100%) scaleX(1.0000);transform-origin:100% 50%;-webkit-text-stroke:0.15px #45403c;">0.0000</span>
<span id="t76" class="t " style="left:1159px;top:174.03px;line-height:13.65px;font-size:10.5px;color:#45403c;transform:scaleX(1.0000);transform-origin:0 50%;-webkit-text-stroke:0.15px #45403c;">0</span>
<span id="t77" class="t " style="left:83.2px;top:193.53px;line-height:13.65px;font-size:10.5px;color:#45403c;transform:translateX(-50%) scaleX(1.0464);transform-origin:50% 50%;-webkit-text-stroke:0.15px #45403c;">02/12/2024</span>
<span id="t78" class="t " style="left:167.7px;top:193.53px;line-height:13.65px;font-size:10.5px;color:#45403c;transform:translateX(-50%) scaleX(0.8569);transform-origin:50% 50%;-webkit-text-stroke:0.15px #45403c;">FACTURA</span>
<span id="t79" class="t " style="left:83.2px;top:213.03px;line-height:13.65px;font-size:10.5px;color:#45403c;transform:translateX(-50%) scaleX(1.0464);transform-origin:50% 50%;-webkit-text-stroke:0.15px #45403c;">02/12/2024</span>
<span id="t80" class="t " style="left:167.7px;top:213.03px;line-height:13.65px;font-size:10.5px;color:#45403c;transform:translateX(-50%) scaleX(0.8569);transform-origin:50% 50%;-webkit-text-stroke:0.15px #45403c;">FACTURA</span>
<span id="t81" class="t " style="left:83.2px;top:232.53px;line-height:13.65px;font-size:10.5px;color:#45403c;transform:translateX(-50%) scaleX(1.0464);transform-origin:50% 50%;-webkit-text-stroke:0.15px #45403c;">02/12/2024</span>
<span id="t82" class="t " style="left:167.7px;top:232.53px;line-height:13.65px;font-size:10.5px;color:#45403c;transform:translateX(-50%) scaleX(0.8569);transform-origin:50% 50%;-webkit-text-stroke:0.15px #45403c;">FACTURA</span>
<span id="t83" class="t " style="left:83.2px;top:252.03px;line-height:13.65px;font-size:10.5px;color:#45403c;transform:translateX(-50%) scaleX(1.0464);transform-origin:50% 50%;-webkit-text-stroke:0.15px #45403c;">02/12/2024</span>
<span id="t84" class="t " style="left:167.7px;top:252.03px;line-height:13.65px;font-size:10.5px;color:#45403c;transform:translateX(-50%) scaleX(0.8569);transform-origin:50% 50%;-webkit-text-stroke:0.15px #45403c;">FACTURA</span>
<span id="t85" class="t " style="left:83.2px;top:271.53px;line-height:13.65px;font-size:10.5px;color:#45403c;transform:translateX(-50%) scaleX(1.0464);transform-origin:50% 50%;-webkit-text-stroke:0.15px #45403c;">02/12/2024</span>
<span id="t86" class="t " style="left:167.7px;top:271.53px;line-height:13.65px;font-size:10.5px;color:#45403c;transform:translateX(-50%) scaleX(0.8686);transform-origin:50% 50%;-webkit-text-stroke:0.15px #45403c;">N/CREDITO</span>
<span id="t87" class="t " style="left:83.2px;top:291.03px;line-height:13.65px;font-size:10.5px;color:#45403c;transform:translateX(-50%) scaleX(1.0464);transform-origin:50% 50%;-webkit-text-stroke:0.15px #45403c;">03/12/2024</span>
<span id="t88" class="t " style="left:167.7px;top:291.03px;line-height:13.65px;font-size:10.5px;color:#45403c;transform:translateX(-50%) scaleX(0.8569);transform-origin:50% 50%;-webkit-text-stroke:0.15px #45403c;">FACTURA</span>
<span id="t89" class="t " style="left:83.2px;top:310.53px;line-height:13.65px;font-size:10.5px;color:#45403c;transform:translateX(-50%) scaleX(1.0464);transform-origin:50% 50%;-webkit-text-stroke:0.15px #45403c;">03/12/2024</span>
<span id="t90" class="t " style="left:167.7px;top:310.53px;line-height:13.65px;font-size:10.5px;color:#45403c;transform:translateX(-50%) scaleX(0.8686);transform-origin:50% 50%;-webkit-text-stroke:0.15px #45403c;">N/CREDITO</span>
<div style="left:39px;top:400px;width:1409px;height:1px;background:#a0a0a0"></div>
<div style="left:1448px;top:96px;width:10px;height:304px;background:#f0f0f0"></div>
<svg style="left:1449px;top:99px" width="9" height="6" viewBox="0 0 9 6"><path d="M0.5 5.5 H8.5 L4.5 0.5 Z" fill="#111"/></svg>
<div style="left:1448px;top:107px;width:10px;height:1px;background:#cfcfcf"></div>
<div style="left:178px;top:193px;width:1280px;height:458px;box-shadow:0 0 9px 2px rgba(0,0,0,0.16)"></div>
<div style="left:178px;top:193px;width:1280px;height:458px;background:#efefef;border-left:1px solid #3f9464;border-top:1px solid #3f9464"></div>
<svg style="left:193px;top:207px" width="17" height="17" viewBox="0 0 17 17">
<rect x="4" y="1" width="12" height="15" rx="1.2" fill="#21a366"/>
<rect x="4" y="1" width="12" height="5" rx="1" fill="#33c481"/>
<rect x="4" y="11" width="12" height="5" rx="1" fill="#185c37"/>
<rect x="4" y="6" width="12" height="5" fill="#21a366"/>
<rect x="1" y="4" width="9" height="9" rx="1" fill="#107c41"/>
<path d="M3.2 6 L7.8 11 M7.8 6 L3.2 11" stroke="#fff" stroke-width="1.3"/>
</svg>
<span id="t91" class="t " style="left:231px;top:209.05px;line-height:16.90px;font-size:13px;color:#202020;transform:scaleX(0.8225);transform-origin:0 50%;">test rend.xlsx</span>
<svg style="left:302px;top:207px" width="16" height="17" viewBox="0 0 16 17">
<path d="M8 0.8 L14.8 3 V8.5 Q14.8 13.5 8 16.2 Q1.2 13.5 1.2 8.5 V3 Z" fill="#1e9a2c" stroke="#137a1f" stroke-width="0.6"/>
</svg>
<span id="t92" class="t " style="left:321px;top:209.05px;line-height:16.90px;font-size:13px;color:#202020;transform:scaleX(0.8716);transform-origin:0 50%;">No Confidencial</span>
<svg style="left:404px;top:212px" width="11" height="7" viewBox="0 0 11 7"><path d="M1 1 L5.5 5.5 L10 1" fill="none" stroke="#333" stroke-width="1.3"/></svg>
<div style="left:656px;top:202px;width:341px;height:29px;background:#fafafa;border:1px solid #dadada;border-bottom:1px solid #bdbdbd;border-radius:4px;box-shadow:0 1px 2px rgba(0,0,0,0.08)"></div>
<svg style="left:667px;top:209px" width="15" height="15" viewBox="0 0 15 15"><circle cx="9" cy="6" r="4.2" fill="none" stroke="#555" stroke-width="1.2"/><path d="M6 9 L1.5 13.5" stroke="#555" stroke-width="1.3"/></svg>
<span id="t93" class="t " style="left:694px;top:208.55px;line-height:16.90px;font-size:13px;color:#5c5c5c;transform:scaleX(0.9143);transform-origin:0 50%;">Buscar</span>
<svg style="left:1291px;top:204px" width="24" height="24" viewBox="0 0 24 24">
<defs><clipPath id="av"><circle cx="12" cy="12" r="11.3"/></clipPath></defs>
<g clip-path="url(#av)">
<rect width="24" height="24" fill="#8a6a4a"/>
<rect x="0" y="0" width="24" height="9" fill="#6f5a3c"/>
<ellipse cx="12" cy="13" rx="5.5" ry="7" fill="#d9a88a"/>
<path d="M5 8 Q12 1 19 8 L18 11 Q12 6 6 11 Z" fill="#3a2a20"/>
<rect x="3" y="20" width="18" height="6" fill="#2a2a2a"/>
<rect x="0" y="10" width="5" height="8" fill="#c04030" opacity="0.6"/>
</g></svg>
<div style="left:1342px;top:215px;width:10px;height:1.3px;background:#222"></div>
<div style="left:1386.5px;top:211.5px;width:10.5px;height:10px;border:1.2px solid #222;border-radius:1.5px"></div>
<svg style="left:1431px;top:211px" width="11" height="11" viewBox="0 0 11 11"><path d="M0.6 0.6 L10.4 10.4 M10.4 0.6 L0.6 10.4" stroke="#222" stroke-width="1.2"/></svg>
<span id="t94" class="t " style="left:187.5px;top:243.53px;line-height:17.55px;font-size:13.5px;color:#262626;transform:scaleX(0.8775);transform-origin:0 50%;">Archivo</span>
<span id="t95" class="t " style="left:242.5px;top:243.53px;line-height:17.55px;font-size:13.5px;color:#262626;transform:scaleX(0.8726);transform-origin:0 50%;">Inicio</span>
<span id="t96" class="t " style="left:289.5px;top:243.53px;line-height:17.55px;font-size:13.5px;color:#262626;transform:scaleX(0.8956);transform-origin:0 50%;">Insertar</span>
<span id="t97" class="t " style="left:350.7px;top:243.53px;line-height:17.55px;font-size:13.5px;color:#262626;transform:scaleX(0.9137);transform-origin:0 50%;">Disposición de página</span>
<span id="t98" class="t " style="left:491.4px;top:243.53px;line-height:17.55px;font-size:13.5px;color:#262626;transform:scaleX(0.8673);transform-origin:0 50%;">Fórmulas</span>
<span id="t99" class="t " style="left:559.8px;top:243.53px;line-height:17.55px;font-size:13.5px;color:#262626;transform:scaleX(0.9013);transform-origin:0 50%;">Datos</span>
<span id="t100" class="t " style="left:610px;top:243.53px;line-height:17.55px;font-size:13.5px;color:#262626;transform:scaleX(0.8412);transform-origin:0 50%;">Revisar</span>
<span id="t101" class="t " style="left:667.5px;top:243.53px;line-height:17.55px;font-size:13.5px;color:#262626;transform:scaleX(0.8730);transform-origin:0 50%;">Vista</span>
<span id="t102" class="t " style="left:714px;top:243.53px;line-height:17.55px;font-size:13.5px;color:#262626;transform:scaleX(0.8968);transform-origin:0 50%;">Automatizar</span>
<span id="t103" class="t " style="left:800.3px;top:243.53px;line-height:17.55px;font-size:13.5px;color:#262626;transform:scaleX(0.8726);transform-origin:0 50%;">Ayuda</span>
<span id="t104" class="t " style="left:854.6px;top:243.53px;line-height:17.55px;font-size:13.5px;color:#1d7a45;transform:scaleX(0.9059);transform-origin:0 50%;">Diseño de tabla</span>
<div style="left:1256px;top:241px;width:94px;height:22px;background:#fff;border:1px solid #8e8e8e;border-radius:4px"></div>
<svg style="left:1260px;top:246px" width="13" height="13" viewBox="0 0 13 13"><path d="M1.5 1.5 H11.5 V8.5 H5 L2 11.5 V8.5 H1.5 Z" fill="none" stroke="#333" stroke-width="1.1"/></svg>
<span id="t105" class="t " style="left:1275px;top:245.18px;line-height:16.25px;font-size:12.5px;color:#222;transform:scaleX(0.9594);transform-origin:0 50%;">Comentarios</span>
<div style="left:1357px;top:241px;width:91px;height:22px;background:#107c41;border-radius:4px"></div>
<svg style="left:1361px;top:245px" width="14" height="14" viewBox="0 0 14 14"><path d="M2 6 V12.5 H12 V8" fill="none" stroke="#fff" stroke-width="1.1"/><path d="M5 9.5 Q5.5 5 10 4.5 M8 2 L11 4.5 L8.5 7" fill="none" stroke="#fff" stroke-width="1.1"/></svg>
<span id="t106" class="t " style="left:1377.5px;top:245.18px;line-height:16.25px;font-size:12.5px;color:#ffffff;transform:scaleX(0.9841);transform-origin:0 50%;">Compartir</span>
<svg style="left:1437px;top:250px" width="7" height="5" viewBox="0 0 7 5"><path d="M1 1 L3.5 3.5 L6 1" fill="none" stroke="#fff" stroke-width="1.2"/></svg>
<div style="left:187px;top:274px;width:94px;height:23px;background:#fff;border:1px solid #dcdcdc;border-radius:4px"></div>
<span id="t107" class="t " style="left:193.5px;top:277.25px;line-height:16.90px;font-size:13px;color:#222;transform:scaleX(1.0000);transform-origin:0 50%;">V8</span>
<svg style="left:263px;top:282px" width="11" height="7" viewBox="0 0 11 7"><path d="M1 1 L5.5 5.5 L10 1" fill="none" stroke="#333" stroke-width="1.3"/></svg>
<div style="left:290px;top:281px;width:2px;height:2px;background:#444;border-radius:1px"></div>
<div style="left:290px;top:285px;width:2px;height:2px;background:#444;border-radius:1px"></div>
<div style="left:290px;top:289px;width:2px;height:2px;background:#444;border-radius:1px"></div>
<div style="left:300px;top:274px;width:79px;height:23px;background:#fff;border:1px solid #dcdcdc;border-radius:4px"></div>
<svg style="left:306px;top:280px" width="12" height="12" viewBox="0 0 12 12"><path d="M1 1 L11 11 M11 1 L1 11" stroke="#9a9a9a" stroke-width="1.1"/></svg>
<svg style="left:326px;top:279px" width="17" height="13" viewBox="0 0 17 13"><path d="M1 7 L5.5 11.5 L16 1" fill="none" stroke="#9a9a9a" stroke-width="1.1"/></svg>
<span id="t108" class="t " style="left:349.5px;top:275.75px;line-height:19.50px;font-size:15px;color:#333;font-weight:bold;transform:scaleX(1.0000);transform-origin:0 50%;font-family:'Liberation Serif',serif;"><i>fx</i></span>
<svg style="left:367px;top:283px" width="10" height="6" viewBox="0 0 10 6"><path d="M1 1 L5 5 L9 1" fill="none" stroke="#777" stroke-width="1.1"/></svg>
<div style="left:384px;top:274px;width:1067px;height:23px;background:#fff;border:1px solid #dcdcdc;border-radius:4px"></div>
<span id="t109" class="t " style="left:393.5px;top:277.25px;line-height:16.90px;font-size:13px;color:#222;transform:scaleX(1.0000);transform-origin:0 50%;">0</span>
<svg style="left:1435px;top:282px" width="12" height="7" viewBox="0 0 12 7"><path d="M1 1 L6 6 L11 1" fill="none" stroke="#333" stroke-width="1.3"/></svg>
<div style="left:179px;top:305px;width:1259px;height:17px;background:#efefef"></div>
<div style="left:179px;top:321.5px;width:1259px;height:1px;background:#d6d6d6"></div>
<svg style="left:187px;top:307px" width="14" height="14" viewBox="0 0 14 14"><path d="M13 1 V13 H1 Z" fill="#d0d0d0"/></svg>
<div style="left:203px;top:306px;width:1px;height:16px;background:#d9d9d9"></div>
<span id="t110" class="t " style="left:282.0px;top:306.18px;line-height:16.25px;font-size:12.5px;color:#444;transform:translateX(-50%) scaleX(1.0000);transform-origin:50% 50%;">G</span>
<div style="left:361px;top:306px;width:1px;height:16px;background:#d9d9d9"></div>
<span id="t111" class="t " style="left:381.0px;top:306.18px;line-height:16.25px;font-size:12.5px;color:#444;transform:translateX(-50%) scaleX(1.0000);transform-origin:50% 50%;">H</span>
<div style="left:401px;top:306px;width:1px;height:16px;background:#d9d9d9"></div>
<span id="t112" class="t " style="left:425.5px;top:306.18px;line-height:16.25px;font-size:12.5px;color:#444;transform:translateX(-50%) scaleX(1.0000);transform-origin:50% 50%;">I</span>
<div style="left:450px;top:306px;width:1px;height:16px;background:#d9d9d9"></div>
<span id="t113" class="t " style="left:468.0px;top:306.18px;line-height:16.25px;font-size:12.5px;color:#444;transform:translateX(-50%) scaleX(1.0000);transform-origin:50% 50%;">J</span>
<div style="left:486px;top:306px;width:1px;height:16px;background:#d9d9d9"></div>
<span id="t114" class="t " style="left:502.0px;top:306.18px;line-height:16.25px;font-size:12.5px;color:#444;transform:translateX(-50%) scaleX(1.0000);transform-origin:50% 50%;">K</span>
<div style="left:518px;top:306px;width:1px;height:16px;background:#d9d9d9"></div>
<span id="t115" class="t " style="left:557.0px;top:306.18px;line-height:16.25px;font-size:12.5px;color:#444;transform:translateX(-50%) scaleX(1.0000);transform-origin:50% 50%;">L</span>
<div style="left:596px;top:306px;width:1px;height:16px;background:#d9d9d9"></div>
<span id="t116" class="t " style="left:634.5px;top:306.18px;line-height:16.25px;font-size:12.5px;color:#444;transform:translateX(-50%) scaleX(1.0000);transform-origin:50% 50%;">M</span>
<div style="left:673px;top:306px;width:1px;height:16px;background:#d9d9d9"></div>
<span id="t117" class="t " style="left:695.5px;top:306.18px;line-height:16.25px;font-size:12.5px;color:#444;transform:translateX(-50%) scaleX(1.0000);transform-origin:50% 50%;">N</span>
<div style="left:718px;top:306px;width:1px;height:16px;background:#d9d9d9"></div>
<span id="t118" class="t " style="left:747.5px;top:306.18px;line-height:16.25px;font-size:12.5px;color:#444;transform:translateX(-50%) scaleX(1.0000);transform-origin:50% 50%;">O</span>
<div style="left:777px;top:306px;width:1px;height:16px;background:#d9d9d9"></div>
<span id="t119" class="t " style="left:828.5px;top:306.18px;line-height:16.25px;font-size:12.5px;color:#444;transform:translateX(-50%) scaleX(1.0000);transform-origin:50% 50%;">P</span>
<div style="left:880px;top:306px;width:1px;height:16px;background:#d9d9d9"></div>
<span id="t120" class="t " style="left:932.0px;top:306.18px;line-height:16.25px;font-size:12.5px;color:#444;transform:translateX(-50%) scaleX(1.0000);transform-origin:50% 50%;">Q</span>
<div style="left:984px;top:306px;width:1px;height:16px;background:#d9d9d9"></div>
<span id="t121" class="t " style="left:1002.0px;top:306.18px;line-height:16.25px;font-size:12.5px;color:#444;transform:translateX(-50%) scaleX(1.0000);transform-origin:50% 50%;">R</span>
<div style="left:1020px;top:306px;width:1px;height:16px;background:#d9d9d9"></div>
<span id="t122" class="t " style="left:1038.0px;top:306.18px;line-height:16.25px;font-size:12.5px;color:#444;transform:translateX(-50%) scaleX(1.0000);transform-origin:50% 50%;">S</span>
<div style="left:1056px;top:306px;width:1px;height:16px;background:#d9d9d9"></div>
<span id="t123" class="t " style="left:1105.0px;top:306.18px;line-height:16.25px;font-size:12.5px;color:#444;transform:translateX(-50%) scaleX(1.0000);transform-origin:50% 50%;">T</span>
<div style="left:1154px;top:306px;width:1px;height:16px;background:#d9d9d9"></div>
<span id="t124" class="t " style="left:1203.5px;top:306.18px;line-height:16.25px;font-size:12.5px;color:#444;transform:translateX(-50%) scaleX(1.0000);transform-origin:50% 50%;">U</span>
<div style="left:1253px;top:305px;width:99px;height:17px;background:#dcdcdc;border:1px solid #cfcfcf;border-bottom:none"></div>
<div style="left:1253px;top:320.2px;width:99px;height:1.8px;background:#2e8050"></div>
<div style="left:1253px;top:306px;width:1px;height:16px;background:#d9d9d9"></div>
<span id="t125" class="t " style="left:1302.5px;top:306.18px;line-height:16.25px;font-size:12.5px;color:#217346;transform:translateX(-50%) scaleX(1.0000);transform-origin:50% 50%;">V</span>
<div style="left:1352px;top:306px;width:1px;height:16px;background:#d9d9d9"></div>
<span id="t126" class="t " style="left:1406px;top:306.18px;line-height:16.25px;font-size:12.5px;color:#444;transform:translateX(-50%) scaleX(1.0000);transform-origin:50% 50%;">W</span>
<div style="left:179px;top:322px;width:24px;height:318px;background:#efefef"></div>
<div style="left:202px;top:322px;width:1px;height:318px;background:#d6d6d6"></div>
<div style="left:203px;top:322px;width:1235px;height:318px;background:#ffffff"></div>
<span id="t127" class="t " style="left:191px;top:324.38px;line-height:16.25px;font-size:12.5px;color:#444;transform:translateX(-50%) scaleX(1.0000);transform-origin:50% 50%;-webkit-text-stroke:0.45px #444;">1</span>
<div style="left:179px;top:340.5px;width:24px;height:1px;background:#e8e8e8"></div>
<span id="t128" class="t " style="left:191px;top:370.88px;line-height:16.25px;font-size:12.5px;color:#444;transform:translateX(-50%) scaleX(1.0000);transform-origin:50% 50%;-webkit-text-stroke:0.45px #444;">2</span>
<div style="left:179px;top:387.0px;width:24px;height:1px;background:#e8e8e8"></div>
<span id="t129" class="t " style="left:191px;top:390.60px;line-height:16.25px;font-size:12.5px;color:#2b2bdb;transform:translateX(-50%) scaleX(1.0000);transform-origin:50% 50%;-webkit-text-stroke:0.45px #2b2bdb;">3</span>
<div style="left:179px;top:405.62px;width:24px;height:1px;background:#e8e8e8"></div>
<span id="t130" class="t " style="left:191px;top:409.22px;line-height:16.25px;font-size:12.5px;color:#2b2bdb;transform:translateX(-50%) scaleX(1.0000);transform-origin:50% 50%;-webkit-text-stroke:0.45px #2b2bdb;">4</span>
<div style="left:179px;top:424.24px;width:24px;height:1px;background:#e8e8e8"></div>
<span id="t131" class="t " style="left:191px;top:427.84px;line-height:16.25px;font-size:12.5px;color:#2b2bdb;transform:translateX(-50%) scaleX(1.0000);transform-origin:50% 50%;-webkit-text-stroke:0.45px #2b2bdb;">5</span>
<div style="left:179px;top:442.86px;width:24px;height:1px;background:#e8e8e8"></div>
<span id="t132" class="t " style="left:191px;top:446.46px;line-height:16.25px;font-size:12.5px;color:#2b2bdb;transform:translateX(-50%) scaleX(1.0000);transform-origin:50% 50%;-webkit-text-stroke:0.45px #2b2bdb;">6</span>
<div style="left:179px;top:461.48px;width:24px;height:1px;background:#e8e8e8"></div>
<span id="t133" class="t " style="left:191px;top:465.08px;line-height:16.25px;font-size:12.5px;color:#2b2bdb;transform:translateX(-50%) scaleX(1.0000);transform-origin:50% 50%;-webkit-text-stroke:0.45px #2b2bdb;">7</span>
<div style="left:179px;top:480.1px;width:24px;height:1px;background:#e8e8e8"></div>
<div style="left:179px;top:480.6px;width:24px;height:18.620000000000005px;background:#d2d2d2"></div>
<span id="t134" class="t " style="left:191px;top:483.70px;line-height:16.25px;font-size:12.5px;color:#2b2bdb;transform:translateX(-50%) scaleX(1.0000);transform-origin:50% 50%;-webkit-text-stroke:0.45px #2b2bdb;">8</span>
<div style="left:179px;top:498.72px;width:24px;height:1px;background:#e8e8e8"></div>
<span id="t135" class="t " style="left:191px;top:502.32px;line-height:16.25px;font-size:12.5px;color:#2b2bdb;transform:translateX(-50%) scaleX(1.0000);transform-origin:50% 50%;-webkit-text-stroke:0.45px #2b2bdb;">9</span>
<div style="left:179px;top:517.34px;width:24px;height:1px;background:#e8e8e8"></div>
<span id="t136" class="t " style="left:191px;top:520.94px;line-height:16.25px;font-size:12.5px;color:#2b2bdb;transform:translateX(-50%) scaleX(1.0000);transform-origin:50% 50%;-webkit-text-stroke:0.45px #2b2bdb;">10</span>
<div style="left:179px;top:535.96px;width:24px;height:1px;background:#e8e8e8"></div>
<span id="t137" class="t " style="left:191px;top:539.56px;line-height:16.25px;font-size:12.5px;color:#2b2bdb;transform:translateX(-50%) scaleX(1.0000);transform-origin:50% 50%;-webkit-text-stroke:0.45px #2b2bdb;">11</span>
<div style="left:179px;top:554.58px;width:24px;height:1px;background:#e8e8e8"></div>
<span id="t138" class="t " style="left:191px;top:558.18px;line-height:16.25px;font-size:12.5px;color:#2b2bdb;transform:translateX(-50%) scaleX(1.0000);transform-origin:50% 50%;-webkit-text-stroke:0.45px #2b2bdb;">12</span>
<div style="left:179px;top:573.2px;width:24px;height:1px;background:#e8e8e8"></div>
<span id="t139" class="t " style="left:191px;top:576.80px;line-height:16.25px;font-size:12.5px;color:#2b2bdb;transform:translateX(-50%) scaleX(1.0000);transform-origin:50% 50%;-webkit-text-stroke:0.45px #2b2bdb;">13</span>
<div style="left:179px;top:591.82px;width:24px;height:1px;background:#e8e8e8"></div>
<span id="t140" class="t " style="left:191px;top:595.42px;line-height:16.25px;font-size:12.5px;color:#2b2bdb;transform:translateX(-50%) scaleX(1.0000);transform-origin:50% 50%;-webkit-text-stroke:0.45px #2b2bdb;">14</span>
<div style="left:179px;top:610.44px;width:24px;height:1px;background:#e8e8e8"></div>
<span id="t141" class="t " style="left:191px;top:614.03px;line-height:16.25px;font-size:12.5px;color:#2b2bdb;transform:translateX(-50%) scaleX(1.0000);transform-origin:50% 50%;-webkit-text-stroke:0.45px #2b2bdb;">15</span>
<div style="left:179px;top:629.06px;width:24px;height:1px;background:#e8e8e8"></div>
<span id="t142" class="t " style="left:191px;top:632.93px;line-height:16.25px;font-size:12.5px;color:#2b2bdb;transform:translateX(-50%) scaleX(1.0000);transform-origin:50% 50%;-webkit-text-stroke:0.45px #2b2bdb;">16</span>
<div style="left:179px;top:639.5px;width:24px;height:1px;background:#e8e8e8"></div>
<div style="left:450px;top:387.5px;width:36px;height:18.62px;background:#ddebf7"></div>
<div style="left:486px;top:387.5px;width:32px;height:18.62px;background:#ddebf7"></div>
<div style="left:518px;top:387.5px;width:78px;height:18.62px;background:#ddebf7"></div>
<div style="left:673px;top:387.5px;width:45px;height:18.62px;background:#ddebf7"></div>
<div style="left:718px;top:387.5px;width:59px;height:18.62px;background:#ddebf7"></div>
<div style="left:777px;top:387.5px;width:103px;height:18.62px;background:#ddebf7"></div>
<div style="left:880px;top:387.5px;width:104px;height:18.62px;background:#ddebf7"></div>
<div style="left:1020px;top:387.5px;width:36px;height:18.62px;background:#ddebf7"></div>
<div style="left:1056px;top:387.5px;width:98px;height:18.62px;background:#ddebf7"></div>
<div style="left:1352px;top:387.5px;width:86px;height:18.62px;background:#ddebf7"></div>
<div style="left:450px;top:424.74px;width:36px;height:18.62px;background:#ddebf7"></div>
<div style="left:486px;top:424.74px;width:32px;height:18.62px;background:#ddebf7"></div>
<div style="left:518px;top:424.74px;width:78px;height:18.62px;background:#ddebf7"></div>
<div style="left:673px;top:424.74px;width:45px;height:18.62px;background:#ddebf7"></div>
<div style="left:718px;top:424.74px;width:59px;height:18.62px;background:#ddebf7"></div>
<div style="left:777px;top:424.74px;width:103px;height:18.62px;background:#ddebf7"></div>
<div style="left:880px;top:424.74px;width:104px;height:18.62px;background:#ddebf7"></div>
<div style="left:1020px;top:424.74px;width:36px;height:18.62px;background:#ddebf7"></div>
<div style="left:1056px;top:424.74px;width:98px;height:18.62px;background:#ddebf7"></div>
<div style="left:1352px;top:424.74px;width:86px;height:18.62px;background:#ddebf7"></div>
<div style="left:450px;top:461.98px;width:36px;height:18.62px;background:#ddebf7"></div>
<div style="left:486px;top:461.98px;width:32px;height:18.62px;background:#ddebf7"></div>
<div style="left:518px;top:461.98px;width:78px;height:18.62px;background:#ddebf7"></div>
<div style="left:673px;top:461.98px;width:45px;height:18.62px;background:#ddebf7"></div>
<div style="left:718px;top:461.98px;width:59px;height:18.62px;background:#ddebf7"></div>
<div style="left:777px;top:461.98px;width:103px;height:18.62px;background:#ddebf7"></div>
<div style="left:880px;top:461.98px;width:104px;height:18.62px;background:#ddebf7"></div>
<div style="left:1020px;top:461.98px;width:36px;height:18.62px;background:#ddebf7"></div>
<div style="left:1056px;top:461.98px;width:98px;height:18.62px;background:#ddebf7"></div>
<div style="left:1352px;top:461.98px;width:86px;height:18.62px;background:#ddebf7"></div>
<div style="left:450px;top:499.22px;width:36px;height:18.62px;background:#ddebf7"></div>
<div style="left:486px;top:499.22px;width:32px;height:18.62px;background:#ddebf7"></div>
<div style="left:518px;top:499.22px;width:78px;height:18.62px;background:#ddebf7"></div>
<div style="left:673px;top:499.22px;width:45px;height:18.62px;background:#ddebf7"></div>
<div style="left:718px;top:499.22px;width:59px;height:18.62px;background:#ddebf7"></div>
<div style="left:777px;top:499.22px;width:103px;height:18.62px;background:#ddebf7"></div>
<div style="left:880px;top:499.22px;width:104px;height:18.62px;background:#ddebf7"></div>
<div style="left:1020px;top:499.22px;width:36px;height:18.62px;background:#ddebf7"></div>
<div style="left:1056px;top:499.22px;width:98px;height:18.62px;background:#ddebf7"></div>
<div style="left:1352px;top:499.22px;width:86px;height:18.62px;background:#ddebf7"></div>
<div style="left:450px;top:536.46px;width:36px;height:18.62px;background:#ddebf7"></div>
<div style="left:486px;top:536.46px;width:32px;height:18.62px;background:#ddebf7"></div>
<div style="left:518px;top:536.46px;width:78px;height:18.62px;background:#ddebf7"></div>
<div style="left:673px;top:536.46px;width:45px;height:18.62px;background:#ddebf7"></div>
<div style="left:718px;top:536.46px;width:59px;height:18.62px;background:#ddebf7"></div>
<div style="left:777px;top:536.46px;width:103px;height:18.62px;background:#ddebf7"></div>
<div style="left:880px;top:536.46px;width:104px;height:18.62px;background:#ddebf7"></div>
<div style="left:1020px;top:536.46px;width:36px;height:18.62px;background:#ddebf7"></div>
<div style="left:1056px;top:536.46px;width:98px;height:18.62px;background:#ddebf7"></div>
<div style="left:1352px;top:536.46px;width:86px;height:18.62px;background:#ddebf7"></div>
<div style="left:450px;top:573.7px;width:36px;height:18.62px;background:#ddebf7"></div>
<div style="left:486px;top:573.7px;width:32px;height:18.62px;background:#ddebf7"></div>
<div style="left:518px;top:573.7px;width:78px;height:18.62px;background:#ddebf7"></div>
<div style="left:673px;top:573.7px;width:45px;height:18.62px;background:#ddebf7"></div>
<div style="left:718px;top:573.7px;width:59px;height:18.62px;background:#ddebf7"></div>
<div style="left:777px;top:573.7px;width:103px;height:18.62px;background:#ddebf7"></div>
<div style="left:880px;top:573.7px;width:104px;height:18.62px;background:#ddebf7"></div>
<div style="left:1020px;top:573.7px;width:36px;height:18.62px;background:#ddebf7"></div>
<div style="left:1056px;top:573.7px;width:98px;height:18.62px;background:#ddebf7"></div>
<div style="left:1352px;top:573.7px;width:86px;height:18.62px;background:#ddebf7"></div>
<div style="left:450px;top:610.94px;width:36px;height:18.62px;background:#ddebf7"></div>
<div style="left:486px;top:610.94px;width:32px;height:18.62px;background:#ddebf7"></div>
<div style="left:518px;top:610.94px;width:78px;height:18.62px;background:#ddebf7"></div>
<div style="left:673px;top:610.94px;width:45px;height:18.62px;background:#ddebf7"></div>
<div style="left:718px;top:610.94px;width:59px;height:18.62px;background:#ddebf7"></div>
<div style="left:777px;top:610.94px;width:103px;height:18.62px;background:#ddebf7"></div>
<div style="left:880px;top:610.94px;width:104px;height:18.62px;background:#ddebf7"></div>
<div style="left:1020px;top:610.94px;width:36px;height:18.62px;background:#ddebf7"></div>
<div style="left:1056px;top:610.94px;width:98px;height:18.62px;background:#ddebf7"></div>
<div style="left:1352px;top:610.94px;width:86px;height:18.62px;background:#ddebf7"></div>
<div style="left:203px;top:461.98px;width:393px;height:18.62px;background:#92d050"></div>
<div style="left:203px;top:480.6px;width:393px;height:18.62px;background:#92d050"></div>
<div style="left:203px;top:499.22px;width:393px;height:18.62px;background:#00b0f0"></div>
<div style="left:203px;top:517.84px;width:393px;height:18.62px;background:#ffff00"></div>
<div style="left:203px;top:555.08px;width:393px;height:18.62px;background:#ffff00"></div>
<div style="left:596px;top:555.08px;width:77px;height:18.62px;background:#ffc7ce"></div>
<div style="left:596px;top:573.7px;width:77px;height:18.62px;background:#ffc7ce"></div>
<div style="left:401px;top:322px;width:317px;height:19px;background:#002060"></div>
<span id="t143" class="t " style="left:559.8px;top:323.85px;line-height:16.90px;font-size:13px;color:#fff;font-weight:bold;transform:translateX(-50%) scaleX(0.9303);transform-origin:50% 50%;">Información comprobante de venta</span>
<div style="left:203px;top:341px;width:1235px;height:46px;background:#002060"></div>
<div style="left:401px;top:340.5px;width:317px;height:1px;background:#8a96b4"></div>
<div style="left:204px;top:341px;width:157px;height:46px;overflow:hidden;color:#fff;font-weight:bold;font-size:13px;text-align:center"><div style="position:absolute;left:-20px;right:-20px;top:6.70px;transform:scaleX(0.92)"><div style="position:static;white-space:nowrap;height:18.6px;line-height:18.6px">Razón o denominación</div><div style="position:static;white-space:nowrap;height:18.6px;line-height:18.6px">social del proveedor</div></div></div>
<div style="left:345px;top:371px;width:15px;height:15px;background:#f3f3f3;border:1px solid #c8c8c8"></div>
<svg style="left:349px;top:376px" width="8" height="5" viewBox="0 0 8 5"><path d="M0 0 H8 L4 5 Z" fill="#5a5a5a"/></svg>
<div style="left:362px;top:341px;width:39px;height:46px;overflow:hidden;color:#fff;font-weight:bold;font-size:13px;text-align:center"><div style="position:absolute;left:-20px;right:-20px;top:-2.60px;transform:scaleX(0.92)"><div style="position:static;white-space:nowrap;height:18.6px;line-height:18.6px">Parte</div><div style="position:static;white-space:nowrap;height:18.6px;line-height:18.6px">Relaci</div><div style="position:static;white-space:nowrap;height:18.6px;line-height:18.6px">ona...</div></div></div>
<div style="left:360.5px;top:341px;width:1px;height:46px;background:#8a96b4"></div>
<div style="left:385px;top:371px;width:15px;height:15px;background:#f3f3f3;border:1px solid #c8c8c8"></div>
<svg style="left:389px;top:376px" width="8" height="5" viewBox="0 0 8 5"><path d="M0 0 H8 L4 5 Z" fill="#5a5a5a"/></svg>
<div style="left:402px;top:341px;width:48px;height:46px;overflow:hidden;color:#fff;font-weight:bold;font-size:13px;text-align:center"><div style="position:absolute;left:-20px;right:-20px;top:-2.60px;transform:scaleX(0.92)"><div style="position:static;white-space:nowrap;height:18.6px;line-height:18.6px">Fecha</div><div style="position:static;white-space:nowrap;height:18.6px;line-height:18.6px">Registr</div><div style="position:static;white-space:nowrap;height:18.6px;line-height:18.6px">o</div></div></div>
<div style="left:400.5px;top:341px;width:1px;height:46px;background:#8a96b4"></div>
<div style="left:434px;top:371px;width:15px;height:15px;background:#f3f3f3;border:1px solid #c8c8c8"></div>
<svg style="left:438px;top:376px" width="8" height="5" viewBox="0 0 8 5"><path d="M0 0 H8 L4 5 Z" fill="#5a5a5a"/></svg>
<div style="left:451px;top:341px;width:35px;height:46px;overflow:hidden;color:#fff;font-weight:bold;font-size:13px;text-align:center"><div style="position:absolute;left:-20px;right:-20px;top:-2.60px;transform:scaleX(0.92)"><div style="position:static;white-space:nowrap;height:18.6px;line-height:18.6px">Estab</div><div style="position:static;white-space:nowrap;height:18.6px;line-height:18.6px">lecim</div><div style="position:static;white-space:nowrap;height:18.6px;line-height:18.6px">ien...</div></div></div>
<div style="left:449.5px;top:341px;width:1px;height:46px;background:#8a96b4"></div>
<div style="left:470px;top:371px;width:15px;height:15px;background:#f3f3f3;border:1px solid #c8c8c8"></div>
<svg style="left:474px;top:376px" width="8" height="5" viewBox="0 0 8 5"><path d="M0 0 H8 L4 5 Z" fill="#5a5a5a"/></svg>
<div style="left:487px;top:341px;width:31px;height:46px;overflow:hidden;color:#fff;font-weight:bold;font-size:13px;text-align:center"><div style="position:absolute;left:-20px;right:-20px;top:-2.60px;transform:scaleX(0.92)"><div style="position:static;white-space:nowrap;height:18.6px;line-height:18.6px">Punt</div><div style="position:static;white-space:nowrap;height:18.6px;line-height:18.6px">o</div><div style="position:static;white-space:nowrap;height:18.6px;line-height:18.6px">Em...</div></div></div>
<div style="left:485.5px;top:341px;width:1px;height:46px;background:#8a96b4"></div>
<div style="left:502px;top:371px;width:15px;height:15px;background:#f3f3f3;border:1px solid #c8c8c8"></div>
<svg style="left:506px;top:376px" width="8" height="5" viewBox="0 0 8 5"><path d="M0 0 H8 L4 5 Z" fill="#5a5a5a"/></svg>
<div style="left:519px;top:341px;width:77px;height:46px;overflow:hidden;color:#fff;font-weight:bold;font-size:13px;text-align:center"><div style="position:absolute;left:-20px;right:-20px;top:16.00px;transform:scaleX(0.92)"><div style="position:static;white-space:nowrap;height:18.6px;line-height:18.6px">Secuencial</div></div></div>
<div style="left:517.5px;top:341px;width:1px;height:46px;background:#8a96b4"></div>
<div style="left:580px;top:371px;width:15px;height:15px;background:#f3f3f3;border:1px solid #c8c8c8"></div>
<svg style="left:584px;top:376px" width="8" height="5" viewBox="0 0 8 5"><path d="M0 0 H8 L4 5 Z" fill="#5a5a5a"/></svg>
<div style="left:597px;top:341px;width:76px;height:46px;overflow:hidden;color:#fff;font-weight:bold;font-size:13px;text-align:center"><div style="position:absolute;left:-20px;right:-20px;top:6.70px;transform:scaleX(0.92)"><div style="position:static;white-space:nowrap;height:18.6px;line-height:18.6px">Fecha</div><div style="position:static;white-space:nowrap;height:18.6px;line-height:18.6px">Emisión</div></div></div>
<div style="left:595.5px;top:341px;width:1px;height:46px;background:#8a96b4"></div>
<div style="left:657px;top:371px;width:15px;height:15px;background:#f3f3f3;border:1px solid #c8c8c8"></div>
<svg style="left:661px;top:376px" width="8" height="5" viewBox="0 0 8 5"><path d="M0 0 H8 L4 5 Z" fill="#5a5a5a"/></svg>
<div style="left:674px;top:341px;width:44px;height:46px;overflow:hidden;color:#fff;font-weight:bold;font-size:13px;text-align:center"><div style="position:absolute;left:-20px;right:-20px;top:-2.60px;transform:scaleX(0.92)"><div style="position:static;white-space:nowrap;height:18.6px;line-height:18.6px">Númer</div><div style="position:static;white-space:nowrap;height:18.6px;line-height:18.6px">o de</div><div style="position:static;white-space:nowrap;height:18.6px;line-height:18.6px">auto...</div></div></div>
<div style="left:672.5px;top:341px;width:1px;height:46px;background:#8a96b4"></div>
<div style="left:702px;top:371px;width:15px;height:15px;background:#f3f3f3;border:1px solid #c8c8c8"></div>
<svg style="left:706px;top:376px" width="8" height="5" viewBox="0 0 8 5"><path d="M0 0 H8 L4 5 Z" fill="#5a5a5a"/></svg>
<div style="left:719px;top:341px;width:58px;height:46px;overflow:hidden;color:#fff;font-weight:bold;font-size:13px;text-align:center"><div style="position:absolute;left:-20px;right:-20px;top:-2.60px;transform:scaleX(0.92)"><div style="position:static;white-space:nowrap;height:18.6px;line-height:18.6px">Base</div><div style="position:static;white-space:nowrap;height:18.6px;line-height:18.6px">Imponibl</div><div style="position:static;white-space:nowrap;height:18.6px;line-height:18.6px">e no</div></div></div>
<div style="left:717.5px;top:341px;width:1px;height:46px;background:#8a96b4"></div>
<div style="left:761px;top:371px;width:15px;height:15px;background:#f3f3f3;border:1px solid #c8c8c8"></div>
<svg style="left:765px;top:376px" width="8" height="5" viewBox="0 0 8 5"><path d="M0 0 H8 L4 5 Z" fill="#5a5a5a"/></svg>
<div style="left:778px;top:341px;width:102px;height:46px;overflow:hidden;color:#fff;font-weight:bold;font-size:13px;text-align:center"><div style="position:absolute;left:-20px;right:-20px;top:6.70px;transform:scaleX(0.92)"><div style="position:static;white-space:nowrap;height:18.6px;line-height:18.6px">Base Imponible</div><div style="position:static;white-space:nowrap;height:18.6px;line-height:18.6px">tarifa 0% de IVA</div></div></div>
<div style="left:776.5px;top:341px;width:1px;height:46px;background:#8a96b4"></div>
<div style="left:864px;top:371px;width:15px;height:15px;background:#f3f3f3;border:1px solid #c8c8c8"></div>
<svg style="left:868px;top:376px" width="8" height="5" viewBox="0 0 8 5"><path d="M0 0 H8 L4 5 Z" fill="#5a5a5a"/></svg>
<div style="left:881px;top:341px;width:103px;height:46px;overflow:hidden;color:#fff;font-weight:bold;font-size:13px;text-align:center"><div style="position:absolute;left:-20px;right:-20px;top:6.70px;transform:scaleX(0.92)"><div style="position:static;white-space:nowrap;height:18.6px;line-height:18.6px">Base Imponible</div><div style="position:static;white-space:nowrap;height:18.6px;line-height:18.6px">gravada</div></div></div>
<div style="left:879.5px;top:341px;width:1px;height:46px;background:#8a96b4"></div>
<div style="left:968px;top:371px;width:15px;height:15px;background:#f3f3f3;border:1px solid #c8c8c8"></div>
<svg style="left:972px;top:376px" width="8" height="5" viewBox="0 0 8 5"><path d="M0 0 H8 L4 5 Z" fill="#5a5a5a"/></svg>
<div style="left:985px;top:341px;width:35px;height:46px;overflow:hidden;color:#fff;font-weight:bold;font-size:13px;text-align:center"><div style="position:absolute;left:-20px;right:-20px;top:-2.60px;transform:scaleX(0.92)"><div style="position:static;white-space:nowrap;height:18.6px;line-height:18.6px">Base</div><div style="position:static;white-space:nowrap;height:18.6px;line-height:18.6px">Exce</div><div style="position:static;white-space:nowrap;height:18.6px;line-height:18.6px">nt...</div></div></div>
<div style="left:983.5px;top:341px;width:1px;height:46px;background:#8a96b4"></div>
<div style="left:1004px;top:371px;width:15px;height:15px;background:#f3f3f3;border:1px solid #c8c8c8"></div>
<svg style="left:1008px;top:376px" width="8" height="5" viewBox="0 0 8 5"><path d="M0 0 H8 L4 5 Z" fill="#5a5a5a"/></svg>
<div style="left:1021px;top:341px;width:35px;height:46px;overflow:hidden;color:#fff;font-weight:bold;font-size:13px;text-align:center"><div style="position:absolute;left:-20px;right:-20px;top:6.70px;transform:scaleX(0.92)"><div style="position:static;white-space:nowrap;height:18.6px;line-height:18.6px">Mont</div><div style="position:static;white-space:nowrap;height:18.6px;line-height:18.6px">o IC</div></div></div>
<div style="left:1019.5px;top:341px;width:1px;height:46px;background:#8a96b4"></div>
<div style="left:1040px;top:371px;width:15px;height:15px;background:#f3f3f3;border:1px solid #c8c8c8"></div>
<svg style="left:1044px;top:376px" width="8" height="5" viewBox="0 0 8 5"><path d="M0 0 H8 L4 5 Z" fill="#5a5a5a"/></svg>
<div style="left:1057px;top:341px;width:97px;height:46px;overflow:hidden;color:#fff;font-weight:bold;font-size:13px;text-align:center"><div style="position:absolute;left:-20px;right:-20px;top:16.00px;transform:scaleX(0.92)"><div style="position:static;white-space:nowrap;height:18.6px;line-height:18.6px">Monto IVA</div></div></div>
<div style="left:1055.5px;top:341px;width:1px;height:46px;background:#8a96b4"></div>
<div style="left:1138px;top:371px;width:15px;height:15px;background:#f3f3f3;border:1px solid #c8c8c8"></div>
<svg style="left:1142px;top:376px" width="8" height="5" viewBox="0 0 8 5"><path d="M0 0 H8 L4 5 Z" fill="#5a5a5a"/></svg>
<div style="left:1155px;top:341px;width:98px;height:46px;overflow:hidden;color:#fff;font-weight:bold;font-size:13px;text-align:center"><div style="position:absolute;left:-20px;right:-20px;top:6.70px;transform:scaleX(0.92)"><div style="position:static;white-space:nowrap;height:18.6px;line-height:18.6px">Retencion</div><div style="position:static;white-space:nowrap;height:18.6px;line-height:18.6px">Bienes 10%</div></div></div>
<div style="left:1153.5px;top:341px;width:1px;height:46px;background:#8a96b4"></div>
<div style="left:1237px;top:371px;width:15px;height:15px;background:#f3f3f3;border:1px solid #c8c8c8"></div>
<svg style="left:1241px;top:376px" width="8" height="5" viewBox="0 0 8 5"><path d="M0 0 H8 L4 5 Z" fill="#5a5a5a"/></svg>
<div style="left:1254px;top:341px;width:98px;height:46px;overflow:hidden;color:#fff;font-weight:bold;font-size:13px;text-align:center"><div style="position:absolute;left:-20px;right:-20px;top:6.70px;transform:scaleX(0.92)"><div style="position:static;white-space:nowrap;height:18.6px;line-height:18.6px">Retencion</div><div style="position:static;white-space:nowrap;height:18.6px;line-height:18.6px">Servicios 20 %</div></div></div>
<div style="left:1252.5px;top:341px;width:1px;height:46px;background:#8a96b4"></div>
<div style="left:1336px;top:371px;width:15px;height:15px;background:#f3f3f3;border:1px solid #c8c8c8"></div>
<svg style="left:1340px;top:376px" width="8" height="5" viewBox="0 0 8 5"><path d="M0 0 H8 L4 5 Z" fill="#5a5a5a"/></svg>
<div style="left:1353px;top:341px;width:100px;height:46px;overflow:hidden;color:#fff;font-weight:bold;font-size:13px;text-align:center"><div style="position:absolute;left:-20px;right:-20px;top:6.70px;transform:scaleX(0.92)"><div style="position:static;white-space:nowrap;height:18.6px;line-height:18.6px">Retención de IVA</div><div style="position:static;white-space:nowrap;height:18.6px;line-height:18.6px">30% bienes</div></div></div>
<div style="left:1351.5px;top:341px;width:1px;height:46px;background:#8a96b4"></div>
<div style="left:205px;top:392.50px;width:5px;height:4.51px;background:rgb(176,178,180)"></div>
<div style="left:210px;top:392.50px;width:5px;height:4.51px;background:rgb(190,193,196)"></div>
<div style="left:215px;top:392.50px;width:5px;height:4.51px;background:rgb(191,190,189)"></div>
<div style="left:220px;top:392.50px;width:5px;height:4.51px;background:rgb(202,200,198)"></div>
<div style="left:225px;top:392.50px;width:5px;height:4.51px;background:rgb(177,180,183)"></div>
<div style="left:230px;top:392.50px;width:5px;height:4.51px;background:rgb(235,234,233)"></div>
<div style="left:235px;top:392.50px;width:5px;height:4.51px;background:rgb(209,210,211)"></div>
<div style="left:240px;top:392.50px;width:5px;height:4.51px;background:rgb(184,183,182)"></div>
<div style="left:245px;top:392.50px;width:5px;height:4.51px;background:rgb(209,210,211)"></div>
<div style="left:250px;top:392.50px;width:5px;height:4.51px;background:rgb(201,201,201)"></div>
<div style="left:255px;top:392.50px;width:5px;height:4.51px;background:rgb(242,241,240)"></div>
<div style="left:260px;top:392.50px;width:5px;height:4.51px;background:rgb(186,189,192)"></div>
<div style="left:265px;top:392.50px;width:5px;height:4.51px;background:rgb(177,180,183)"></div>
<div style="left:270px;top:392.50px;width:5px;height:4.51px;background:rgb(182,184,186)"></div>
<div style="left:275px;top:392.50px;width:5px;height:4.51px;background:rgb(239,241,243)"></div>
<div style="left:280px;top:392.50px;width:5px;height:4.51px;background:rgb(177,175,173)"></div>
<div style="left:285px;top:392.50px;width:5px;height:4.51px;background:rgb(209,212,215)"></div>
<div style="left:290px;top:392.50px;width:5px;height:4.51px;background:rgb(190,191,192)"></div>
<div style="left:205px;top:396.71px;width:5px;height:4.51px;background:rgb(117,120,123)"></div>
<div style="left:210px;top:396.71px;width:5px;height:4.51px;background:rgb(176,173,170)"></div>
<div style="left:215px;top:396.71px;width:5px;height:4.51px;background:rgb(171,167,163)"></div>
<div style="left:220px;top:396.71px;width:5px;height:4.51px;background:rgb(157,160,163)"></div>
<div style="left:225px;top:396.71px;width:5px;height:4.51px;background:rgb(189,185,181)"></div>
<div style="left:230px;top:396.71px;width:5px;height:4.51px;background:rgb(250,245,240)"></div>
<div style="left:235px;top:396.71px;width:5px;height:4.51px;background:rgb(128,126,124)"></div>
<div style="left:240px;top:396.71px;width:5px;height:4.51px;background:rgb(171,170,169)"></div>
<div style="left:245px;top:396.71px;width:5px;height:4.51px;background:rgb(172,171,170)"></div>
<div style="left:250px;top:396.71px;width:5px;height:4.51px;background:rgb(135,133,131)"></div>
<div style="left:255px;top:396.71px;width:5px;height:4.51px;background:rgb(246,245,244)"></div>
<div style="left:260px;top:396.71px;width:5px;height:4.51px;background:rgb(125,127,129)"></div>
<div style="left:265px;top:396.71px;width:5px;height:4.51px;background:rgb(126,128,130)"></div>
<div style="left:270px;top:396.71px;width:5px;height:4.51px;background:rgb(173,176,179)"></div>
<div style="left:275px;top:396.71px;width:5px;height:4.51px;background:rgb(228,228,228)"></div>
<div style="left:280px;top:396.71px;width:5px;height:4.51px;background:rgb(122,126,130)"></div>
<div style="left:285px;top:396.71px;width:5px;height:4.51px;background:rgb(124,120,116)"></div>
<div style="left:290px;top:396.71px;width:5px;height:4.51px;background:rgb(142,139,136)"></div>
<div style="left:205px;top:400.91px;width:5px;height:4.51px;background:rgb(206,206,206)"></div>
<div style="left:210px;top:400.91px;width:5px;height:4.51px;background:rgb(197,201,205)"></div>
<div style="left:215px;top:400.91px;width:5px;height:4.51px;background:rgb(217,213,209)"></div>
<div style="left:220px;top:400.91px;width:5px;height:4.51px;background:rgb(221,224,227)"></div>
<div style="left:225px;top:400.91px;width:5px;height:4.51px;background:rgb(216,216,216)"></div>
<div style="left:230px;top:400.91px;width:5px;height:4.51px;background:rgb(249,249,249)"></div>
<div style="left:235px;top:400.91px;width:5px;height:4.51px;background:rgb(226,230,234)"></div>
<div style="left:240px;top:400.91px;width:5px;height:4.51px;background:rgb(209,207,205)"></div>
<div style="left:245px;top:400.91px;width:5px;height:4.51px;background:rgb(231,229,227)"></div>
<div style="left:250px;top:400.91px;width:5px;height:4.51px;background:rgb(229,230,231)"></div>
<div style="left:255px;top:400.91px;width:5px;height:4.51px;background:rgb(229,232,235)"></div>
<div style="left:260px;top:400.91px;width:5px;height:4.51px;background:rgb(206,206,206)"></div>
<div style="left:265px;top:400.91px;width:5px;height:4.51px;background:rgb(218,216,214)"></div>
<div style="left:270px;top:400.91px;width:5px;height:4.51px;background:rgb(213,210,207)"></div>
<div style="left:275px;top:400.91px;width:5px;height:4.51px;background:rgb(228,230,232)"></div>
<div style="left:280px;top:400.91px;width:5px;height:4.51px;background:rgb(220,223,226)"></div>
<div style="left:285px;top:400.91px;width:5px;height:4.51px;background:rgb(204,201,198)"></div>
<div style="left:290px;top:400.91px;width:5px;height:4.51px;background:rgb(224,219,214)"></div>
<div style="left:203px;top:387.5px;width:2px;height:18.62px;background:#dcdcdc"></div>
<div style="left:203px;top:405.12px;width:158px;height:5px;background:#c8c8c8"></div>
<span id="t144" class="t " style="left:363px;top:390.36px;line-height:16.90px;font-size:13px;color:#1a1a1a;transform:scaleX(0.9150);transform-origin:0 50%;-webkit-text-stroke:0.15px currentColor;">NO</span>
<span id="t145" class="t " style="left:405.5px;top:390.36px;line-height:16.90px;font-size:13px;color:#1a1a1a;transform:scaleX(0.9150);transform-origin:0 50%;-webkit-text-stroke:0.15px currentColor;">######</span>
<span id="t146" class="t " style="left:452px;top:390.36px;line-height:16.90px;font-size:13px;color:#1a1a1a;transform:scaleX(0.9150);transform-origin:0 50%;-webkit-text-stroke:0.15px currentColor;">001</span>
<span id="t147" class="t " style="left:488px;top:390.36px;line-height:16.90px;font-size:13px;color:#1a1a1a;transform:scaleX(0.9150);transform-origin:0 50%;-webkit-text-stroke:0.15px currentColor;">001</span>
<span id="t148" class="t " style="left:519.8px;top:390.36px;line-height:16.90px;font-size:13px;color:#1a1a1a;transform:scaleX(0.9150);transform-origin:0 50%;-webkit-text-stroke:0.15px currentColor;">000000601</span>
<span id="t149" class="t " style="left:670.5px;top:390.36px;line-height:16.90px;font-size:13px;color:#1a1a1a;transform:translateX(-100%) scaleX(0.9681);transform-origin:100% 50%;-webkit-text-stroke:0.15px currentColor;">02/12/2024</span>
<div style="left:675px;top:390px;width:5px;height:5px;background:rgb(181,187,195)"></div>
<div style="left:680px;top:390px;width:5px;height:5px;background:rgb(220,226,234)"></div>
<div style="left:685px;top:390px;width:5px;height:5px;background:rgb(192,198,206)"></div>
<div style="left:690px;top:390px;width:5px;height:5px;background:rgb(209,215,223)"></div>
<div style="left:695px;top:390px;width:5px;height:5px;background:rgb(199,205,213)"></div>
<div style="left:700px;top:390px;width:5px;height:5px;background:rgb(186,192,200)"></div>
<div style="left:705px;top:390px;width:5px;height:5px;background:rgb(198,204,212)"></div>
<div style="left:710px;top:390px;width:5px;height:5px;background:rgb(190,196,204)"></div>
<div style="left:715px;top:390px;width:5px;height:5px;background:rgb(210,216,224)"></div>
<div style="left:675px;top:395px;width:5px;height:5px;background:rgb(210,216,224)"></div>
<div style="left:680px;top:395px;width:5px;height:5px;background:rgb(208,214,222)"></div>
<div style="left:685px;top:395px;width:5px;height:5px;background:rgb(197,203,211)"></div>
<div style="left:690px;top:395px;width:5px;height:5px;background:rgb(216,222,230)"></div>
<div style="left:695px;top:395px;width:5px;height:5px;background:rgb(190,196,204)"></div>
<div style="left:700px;top:395px;width:5px;height:5px;background:rgb(215,221,229)"></div>
<div style="left:705px;top:395px;width:5px;height:5px;background:rgb(188,194,202)"></div>
<div style="left:710px;top:395px;width:5px;height:5px;background:rgb(191,197,205)"></div>
<div style="left:715px;top:395px;width:5px;height:5px;background:rgb(201,207,215)"></div>
<div style="left:675px;top:400px;width:5px;height:5px;background:rgb(190,196,204)"></div>
<div style="left:680px;top:400px;width:5px;height:5px;background:rgb(188,194,202)"></div>
<div style="left:685px;top:400px;width:5px;height:5px;background:rgb(209,215,223)"></div>
<div style="left:690px;top:400px;width:5px;height:5px;background:rgb(207,213,221)"></div>
<div style="left:695px;top:400px;width:5px;height:5px;background:rgb(198,204,212)"></div>
<div style="left:700px;top:400px;width:5px;height:5px;background:rgb(177,183,191)"></div>
<div style="left:705px;top:400px;width:5px;height:5px;background:rgb(177,183,191)"></div>
<div style="left:710px;top:400px;width:5px;height:5px;background:rgb(193,199,207)"></div>
<div style="left:715px;top:400px;width:5px;height:5px;background:rgb(206,212,220)"></div>
<span id="t150" class="t " style="left:774.5px;top:390.36px;line-height:16.90px;font-size:13px;color:#1a1a1a;transform:translateX(-100%) scaleX(0.9205);transform-origin:100% 50%;-webkit-text-stroke:0.15px currentColor;">0.00</span>
<span id="t151" class="t " style="left:779px;top:390.36px;line-height:16.90px;font-size:13px;color:#1a1a1a;transform:scaleX(0.9150);transform-origin:0 50%;-webkit-text-stroke:0.15px currentColor;">0</span>
<span id="t152" class="t " style="left:882px;top:390.36px;line-height:16.90px;font-size:13px;color:#1a1a1a;transform:scaleX(0.9150);transform-origin:0 50%;-webkit-text-stroke:0.15px currentColor;">100000</span>
<span id="t153" class="t " style="left:1018px;top:390.36px;line-height:16.90px;font-size:13px;color:#1a1a1a;transform:translateX(-100%) scaleX(0.9150);transform-origin:100% 50%;-webkit-text-stroke:0.15px currentColor;">0</span>
<span id="t154" class="t " style="left:1022px;top:390.36px;line-height:16.90px;font-size:13px;color:#1a1a1a;transform:scaleX(0.9150);transform-origin:0 50%;-webkit-text-stroke:0.15px currentColor;">0</span>
<span id="t155" class="t " style="left:1058px;top:390.36px;line-height:16.90px;font-size:13px;color:#1a1a1a;transform:scaleX(0.9150);transform-origin:0 50%;-webkit-text-stroke:0.15px currentColor;">5000</span>
<span id="t156" class="t " style="left:1251px;top:390.36px;line-height:16.90px;font-size:13px;color:#1a1a1a;transform:translateX(-100%) scaleX(0.9150);transform-origin:100% 50%;-webkit-text-stroke:0.15px currentColor;">0</span>
<span id="t157" class="t " style="left:1350px;top:390.36px;line-height:16.90px;font-size:13px;color:#1a1a1a;transform:translateX(-100%) scaleX(0.9150);transform-origin:100% 50%;-webkit-text-stroke:0.15px currentColor;">0</span>
<span id="t158" class="t " style="left:1354px;top:390.36px;line-height:16.90px;font-size:13px;color:#1a1a1a;transform:scaleX(0.9150);transform-origin:0 50%;-webkit-text-stroke:0.15px currentColor;">0</span>
<svg style="left:451px;top:388.5px" width="6" height="6" viewBox="0 0 6 6"><path d="M0 0 H6 L0 6 Z" fill="#1e8a1e"/></svg>
<svg style="left:487px;top:388.5px" width="6" height="6" viewBox="0 0 6 6"><path d="M0 0 H6 L0 6 Z" fill="#1e8a1e"/></svg>
<svg style="left:519px;top:388.5px" width="6" height="6" viewBox="0 0 6 6"><path d="M0 0 H6 L0 6 Z" fill="#1e8a1e"/></svg>
<svg style="left:674px;top:388.5px" width="5" height="5" viewBox="0 0 6 6"><path d="M0 0 H6 L0 6 Z" fill="#1e8a1e"/></svg>
<div style="left:205px;top:411.12px;width:5px;height:4.51px;background:rgb(197,197,197)"></div>
<div style="left:210px;top:411.12px;width:5px;height:4.51px;background:rgb(178,180,182)"></div>
<div style="left:215px;top:411.12px;width:5px;height:4.51px;background:rgb(179,181,183)"></div>
<div style="left:220px;top:411.12px;width:5px;height:4.51px;background:rgb(203,205,207)"></div>
<div style="left:225px;top:411.12px;width:5px;height:4.51px;background:rgb(194,196,198)"></div>
<div style="left:230px;top:411.12px;width:5px;height:4.51px;background:rgb(239,235,231)"></div>
<div style="left:235px;top:411.12px;width:5px;height:4.51px;background:rgb(209,214,219)"></div>
<div style="left:240px;top:411.12px;width:5px;height:4.51px;background:rgb(210,205,200)"></div>
<div style="left:245px;top:411.12px;width:5px;height:4.51px;background:rgb(202,197,192)"></div>
<div style="left:250px;top:411.12px;width:5px;height:4.51px;background:rgb(185,180,175)"></div>
<div style="left:255px;top:411.12px;width:5px;height:4.51px;background:rgb(224,223,222)"></div>
<div style="left:260px;top:411.12px;width:5px;height:4.51px;background:rgb(189,187,185)"></div>
<div style="left:265px;top:411.12px;width:5px;height:4.51px;background:rgb(187,186,185)"></div>
<div style="left:270px;top:411.12px;width:5px;height:4.51px;background:rgb(215,215,215)"></div>
<div style="left:275px;top:411.12px;width:5px;height:4.51px;background:rgb(181,180,179)"></div>
<div style="left:280px;top:411.12px;width:5px;height:4.51px;background:rgb(205,204,203)"></div>
<div style="left:285px;top:411.12px;width:5px;height:4.51px;background:rgb(239,243,247)"></div>
<div style="left:290px;top:411.12px;width:5px;height:4.51px;background:rgb(182,185,188)"></div>
<div style="left:205px;top:415.33px;width:5px;height:4.51px;background:rgb(131,136,141)"></div>
<div style="left:210px;top:415.33px;width:5px;height:4.51px;background:rgb(143,139,135)"></div>
<div style="left:215px;top:415.33px;width:5px;height:4.51px;background:rgb(184,179,174)"></div>
<div style="left:220px;top:415.33px;width:5px;height:4.51px;background:rgb(142,138,134)"></div>
<div style="left:225px;top:415.33px;width:5px;height:4.51px;background:rgb(185,180,175)"></div>
<div style="left:230px;top:415.33px;width:5px;height:4.51px;background:rgb(233,236,239)"></div>
<div style="left:235px;top:415.33px;width:5px;height:4.51px;background:rgb(131,136,141)"></div>
<div style="left:240px;top:415.33px;width:5px;height:4.51px;background:rgb(126,121,116)"></div>
<div style="left:245px;top:415.33px;width:5px;height:4.51px;background:rgb(136,133,130)"></div>
<div style="left:250px;top:415.33px;width:5px;height:4.51px;background:rgb(138,137,136)"></div>
<div style="left:255px;top:415.33px;width:5px;height:4.51px;background:rgb(229,231,233)"></div>
<div style="left:260px;top:415.33px;width:5px;height:4.51px;background:rgb(122,123,124)"></div>
<div style="left:265px;top:415.33px;width:5px;height:4.51px;background:rgb(146,147,148)"></div>
<div style="left:270px;top:415.33px;width:5px;height:4.51px;background:rgb(182,184,186)"></div>
<div style="left:275px;top:415.33px;width:5px;height:4.51px;background:rgb(160,161,162)"></div>
<div style="left:280px;top:415.33px;width:5px;height:4.51px;background:rgb(170,173,176)"></div>
<div style="left:285px;top:415.33px;width:5px;height:4.51px;background:rgb(226,226,226)"></div>
<div style="left:290px;top:415.33px;width:5px;height:4.51px;background:rgb(183,178,173)"></div>
<div style="left:205px;top:419.53px;width:5px;height:4.51px;background:rgb(229,226,223)"></div>
<div style="left:210px;top:419.53px;width:5px;height:4.51px;background:rgb(211,208,205)"></div>
<div style="left:215px;top:419.53px;width:5px;height:4.51px;background:rgb(212,209,206)"></div>
<div style="left:220px;top:419.53px;width:5px;height:4.51px;background:rgb(227,232,237)"></div>
<div style="left:225px;top:419.53px;width:5px;height:4.51px;background:rgb(225,228,231)"></div>
<div style="left:230px;top:419.53px;width:5px;height:4.51px;background:rgb(244,249,254)"></div>
<div style="left:235px;top:419.53px;width:5px;height:4.51px;background:rgb(206,209,212)"></div>
<div style="left:240px;top:419.53px;width:5px;height:4.51px;background:rgb(211,209,207)"></div>
<div style="left:245px;top:419.53px;width:5px;height:4.51px;background:rgb(210,207,204)"></div>
<div style="left:250px;top:419.53px;width:5px;height:4.51px;background:rgb(203,203,203)"></div>
<div style="left:255px;top:419.53px;width:5px;height:4.51px;background:rgb(249,246,243)"></div>
<div style="left:260px;top:419.53px;width:5px;height:4.51px;background:rgb(226,230,234)"></div>
<div style="left:265px;top:419.53px;width:5px;height:4.51px;background:rgb(201,203,205)"></div>
<div style="left:270px;top:419.53px;width:5px;height:4.51px;background:rgb(211,212,213)"></div>
<div style="left:275px;top:419.53px;width:5px;height:4.51px;background:rgb(198,202,206)"></div>
<div style="left:280px;top:419.53px;width:5px;height:4.51px;background:rgb(234,232,230)"></div>
<div style="left:285px;top:419.53px;width:5px;height:4.51px;background:rgb(242,247,252)"></div>
<div style="left:290px;top:419.53px;width:5px;height:4.51px;background:rgb(206,204,202)"></div>
<div style="left:203px;top:406.12px;width:2px;height:18.62px;background:#dcdcdc"></div>
<div style="left:203px;top:423.74px;width:158px;height:5px;background:#e8e8e8"></div>
<span id="t159" class="t " style="left:363px;top:408.98px;line-height:16.90px;font-size:13px;color:#1a1a1a;transform:scaleX(0.9150);transform-origin:0 50%;-webkit-text-stroke:0.15px currentColor;">NO</span>
<span id="t160" class="t " style="left:405.5px;top:408.98px;line-height:16.90px;font-size:13px;color:#1a1a1a;transform:scaleX(0.9150);transform-origin:0 50%;-webkit-text-stroke:0.15px currentColor;">######</span>
<span id="t161" class="t " style="left:452px;top:408.98px;line-height:16.90px;font-size:13px;color:#1a1a1a;transform:scaleX(0.9150);transform-origin:0 50%;-webkit-text-stroke:0.15px currentColor;">001</span>
<span id="t162" class="t " style="left:488px;top:408.98px;line-height:16.90px;font-size:13px;color:#1a1a1a;transform:scaleX(0.9150);transform-origin:0 50%;-webkit-text-stroke:0.15px currentColor;">001</span>
<span id="t163" class="t " style="left:519.8px;top:408.98px;line-height:16.90px;font-size:13px;color:#1a1a1a;transform:scaleX(0.9150);transform-origin:0 50%;-webkit-text-stroke:0.15px currentColor;">000000602</span>
<span id="t164" class="t " style="left:670.5px;top:408.98px;line-height:16.90px;font-size:13px;color:#1a1a1a;transform:translateX(-100%) scaleX(0.9681);transform-origin:100% 50%;-webkit-text-stroke:0.15px currentColor;">02/12/2024</span>
<div style="left:675px;top:409px;width:5px;height:5px;background:rgb(196,202,210)"></div>
<div style="left:680px;top:409px;width:5px;height:5px;background:rgb(215,221,229)"></div>
<div style="left:685px;top:409px;width:5px;height:5px;background:rgb(208,214,222)"></div>
<div style="left:690px;top:409px;width:5px;height:5px;background:rgb(214,220,228)"></div>
<div style="left:695px;top:409px;width:5px;height:5px;background:rgb(208,214,222)"></div>
<div style="left:700px;top:409px;width:5px;height:5px;background:rgb(188,194,202)"></div>
<div style="left:705px;top:409px;width:5px;height:5px;background:rgb(220,226,234)"></div>
<div style="left:710px;top:409px;width:5px;height:5px;background:rgb(193,199,207)"></div>
<div style="left:715px;top:409px;width:5px;height:5px;background:rgb(204,210,218)"></div>
<div style="left:675px;top:414px;width:5px;height:5px;background:rgb(208,214,222)"></div>
<div style="left:680px;top:414px;width:5px;height:5px;background:rgb(210,216,224)"></div>
<div style="left:685px;top:414px;width:5px;height:5px;background:rgb(206,212,220)"></div>
<div style="left:690px;top:414px;width:5px;height:5px;background:rgb(208,214,222)"></div>
<div style="left:695px;top:414px;width:5px;height:5px;background:rgb(191,197,205)"></div>
<div style="left:700px;top:414px;width:5px;height:5px;background:rgb(220,226,234)"></div>
<div style="left:705px;top:414px;width:5px;height:5px;background:rgb(209,215,223)"></div>
<div style="left:710px;top:414px;width:5px;height:5px;background:rgb(192,198,206)"></div>
<div style="left:715px;top:414px;width:5px;height:5px;background:rgb(211,217,225)"></div>
<div style="left:675px;top:419px;width:5px;height:5px;background:rgb(188,194,202)"></div>
<div style="left:680px;top:419px;width:5px;height:5px;background:rgb(204,210,218)"></div>
<div style="left:685px;top:419px;width:5px;height:5px;background:rgb(184,190,198)"></div>
<div style="left:690px;top:419px;width:5px;height:5px;background:rgb(202,208,216)"></div>
<div style="left:695px;top:419px;width:5px;height:5px;background:rgb(183,189,197)"></div>
<div style="left:700px;top:419px;width:5px;height:5px;background:rgb(201,207,215)"></div>
<div style="left:705px;top:419px;width:5px;height:5px;background:rgb(204,210,218)"></div>
<div style="left:710px;top:419px;width:5px;height:5px;background:rgb(196,202,210)"></div>
<div style="left:715px;top:419px;width:5px;height:5px;background:rgb(180,186,194)"></div>
<span id="t165" class="t " style="left:774.5px;top:408.98px;line-height:16.90px;font-size:13px;color:#1a1a1a;transform:translateX(-100%) scaleX(0.9205);transform-origin:100% 50%;-webkit-text-stroke:0.15px currentColor;">0.00</span>
<span id="t166" class="t " style="left:779px;top:408.98px;line-height:16.90px;font-size:13px;color:#1a1a1a;transform:scaleX(0.9150);transform-origin:0 50%;-webkit-text-stroke:0.15px currentColor;">0</span>
<span id="t167" class="t " style="left:882px;top:408.98px;line-height:16.90px;font-size:13px;color:#1a1a1a;transform:scaleX(0.9150);transform-origin:0 50%;-webkit-text-stroke:0.15px currentColor;">100000</span>
<span id="t168" class="t " style="left:1018px;top:408.98px;line-height:16.90px;font-size:13px;color:#1a1a1a;transform:translateX(-100%) scaleX(0.9150);transform-origin:100% 50%;-webkit-text-stroke:0.15px currentColor;">0</span>
<span id="t169" class="t " style="left:1022px;top:408.98px;line-height:16.90px;font-size:13px;color:#1a1a1a;transform:scaleX(0.9150);transform-origin:0 50%;-webkit-text-stroke:0.15px currentColor;">0</span>
<span id="t170" class="t " style="left:1058px;top:408.98px;line-height:16.90px;font-size:13px;color:#1a1a1a;transform:scaleX(0.9150);transform-origin:0 50%;-webkit-text-stroke:0.15px currentColor;">15000</span>
<span id="t171" class="t " style="left:1251px;top:408.98px;line-height:16.90px;font-size:13px;color:#1a1a1a;transform:translateX(-100%) scaleX(0.9150);transform-origin:100% 50%;-webkit-text-stroke:0.15px currentColor;">0</span>
<span id="t172" class="t " style="left:1350px;top:408.98px;line-height:16.90px;font-size:13px;color:#1a1a1a;transform:translateX(-100%) scaleX(0.9150);transform-origin:100% 50%;-webkit-text-stroke:0.15px currentColor;">0</span>
<span id="t173" class="t " style="left:1354px;top:408.98px;line-height:16.90px;font-size:13px;color:#1a1a1a;transform:scaleX(0.9150);transform-origin:0 50%;-webkit-text-stroke:0.15px currentColor;">0</span>
<svg style="left:451px;top:407.12px" width="6" height="6" viewBox="0 0 6 6"><path d="M0 0 H6 L0 6 Z" fill="#1e8a1e"/></svg>
<svg style="left:487px;top:407.12px" width="6" height="6" viewBox="0 0 6 6"><path d="M0 0 H6 L0 6 Z" fill="#1e8a1e"/></svg>
<svg style="left:519px;top:407.12px" width="6" height="6" viewBox="0 0 6 6"><path d="M0 0 H6 L0 6 Z" fill="#1e8a1e"/></svg>
<svg style="left:674px;top:407.12px" width="5" height="5" viewBox="0 0 6 6"><path d="M0 0 H6 L0 6 Z" fill="#1e8a1e"/></svg>
<div style="left:205px;top:429.74px;width:5px;height:4.51px;background:rgb(190,194,198)"></div>
<div style="left:210px;top:429.74px;width:5px;height:4.51px;background:rgb(189,184,179)"></div>
<div style="left:215px;top:429.74px;width:5px;height:4.51px;background:rgb(195,198,201)"></div>
<div style="left:220px;top:429.74px;width:5px;height:4.51px;background:rgb(188,191,194)"></div>
<div style="left:225px;top:429.74px;width:5px;height:4.51px;background:rgb(232,234,236)"></div>
<div style="left:230px;top:429.74px;width:5px;height:4.51px;background:rgb(182,181,180)"></div>
<div style="left:235px;top:429.74px;width:5px;height:4.51px;background:rgb(203,206,209)"></div>
<div style="left:240px;top:429.74px;width:5px;height:4.51px;background:rgb(186,189,192)"></div>
<div style="left:245px;top:429.74px;width:5px;height:4.51px;background:rgb(205,202,199)"></div>
<div style="left:250px;top:429.74px;width:5px;height:4.51px;background:rgb(200,200,200)"></div>
<div style="left:255px;top:429.74px;width:5px;height:4.51px;background:rgb(199,201,203)"></div>
<div style="left:260px;top:429.74px;width:5px;height:4.51px;background:rgb(231,231,231)"></div>
<div style="left:265px;top:429.74px;width:5px;height:4.51px;background:rgb(180,180,180)"></div>
<div style="left:270px;top:429.74px;width:5px;height:4.51px;background:rgb(176,176,176)"></div>
<div style="left:275px;top:429.74px;width:5px;height:4.51px;background:rgb(212,210,208)"></div>
<div style="left:280px;top:429.74px;width:5px;height:4.51px;background:rgb(229,234,239)"></div>
<div style="left:285px;top:429.74px;width:5px;height:4.51px;background:rgb(199,199,199)"></div>
<div style="left:290px;top:429.74px;width:5px;height:4.51px;background:rgb(212,208,204)"></div>
<div style="left:205px;top:433.95px;width:5px;height:4.51px;background:rgb(160,157,154)"></div>
<div style="left:210px;top:433.95px;width:5px;height:4.51px;background:rgb(124,128,132)"></div>
<div style="left:215px;top:433.95px;width:5px;height:4.51px;background:rgb(145,149,153)"></div>
<div style="left:220px;top:433.95px;width:5px;height:4.51px;background:rgb(129,130,131)"></div>
<div style="left:225px;top:433.95px;width:5px;height:4.51px;background:rgb(228,233,238)"></div>
<div style="left:230px;top:433.95px;width:5px;height:4.51px;background:rgb(142,143,144)"></div>
<div style="left:235px;top:433.95px;width:5px;height:4.51px;background:rgb(137,136,135)"></div>
<div style="left:240px;top:433.95px;width:5px;height:4.51px;background:rgb(154,153,152)"></div>
<div style="left:245px;top:433.95px;width:5px;height:4.51px;background:rgb(142,139,136)"></div>
<div style="left:250px;top:433.95px;width:5px;height:4.51px;background:rgb(189,185,181)"></div>
<div style="left:255px;top:433.95px;width:5px;height:4.51px;background:rgb(183,183,183)"></div>
<div style="left:260px;top:433.95px;width:5px;height:4.51px;background:rgb(226,227,228)"></div>
<div style="left:265px;top:433.95px;width:5px;height:4.51px;background:rgb(124,127,130)"></div>
<div style="left:270px;top:433.95px;width:5px;height:4.51px;background:rgb(170,174,178)"></div>
<div style="left:275px;top:433.95px;width:5px;height:4.51px;background:rgb(149,154,159)"></div>
<div style="left:280px;top:433.95px;width:5px;height:4.51px;background:rgb(241,245,249)"></div>
<div style="left:285px;top:433.95px;width:5px;height:4.51px;background:rgb(149,153,157)"></div>
<div style="left:290px;top:433.95px;width:5px;height:4.51px;background:rgb(144,148,152)"></div>
<div style="left:205px;top:438.15px;width:5px;height:4.51px;background:rgb(212,216,220)"></div>
<div style="left:210px;top:438.15px;width:5px;height:4.51px;background:rgb(224,229,234)"></div>
<div style="left:215px;top:438.15px;width:5px;height:4.51px;background:rgb(224,221,218)"></div>
<div style="left:220px;top:438.15px;width:5px;height:4.51px;background:rgb(225,226,227)"></div>
<div style="left:225px;top:438.15px;width:5px;height:4.51px;background:rgb(246,249,252)"></div>
<div style="left:230px;top:438.15px;width:5px;height:4.51px;background:rgb(205,202,199)"></div>
<div style="left:235px;top:438.15px;width:5px;height:4.51px;background:rgb(211,215,219)"></div>
<div style="left:240px;top:438.15px;width:5px;height:4.51px;background:rgb(209,210,211)"></div>
<div style="left:245px;top:438.15px;width:5px;height:4.51px;background:rgb(200,203,206)"></div>
<div style="left:250px;top:438.15px;width:5px;height:4.51px;background:rgb(211,212,213)"></div>
<div style="left:255px;top:438.15px;width:5px;height:4.51px;background:rgb(222,219,216)"></div>
<div style="left:260px;top:438.15px;width:5px;height:4.51px;background:rgb(235,236,237)"></div>
<div style="left:265px;top:438.15px;width:5px;height:4.51px;background:rgb(231,228,225)"></div>
<div style="left:270px;top:438.15px;width:5px;height:4.51px;background:rgb(210,211,212)"></div>
<div style="left:275px;top:438.15px;width:5px;height:4.51px;background:rgb(217,222,227)"></div>
<div style="left:280px;top:438.15px;width:5px;height:4.51px;background:rgb(233,238,243)"></div>
<div style="left:285px;top:438.15px;width:5px;height:4.51px;background:rgb(195,200,205)"></div>
<div style="left:290px;top:438.15px;width:5px;height:4.51px;background:rgb(235,232,229)"></div>
<div style="left:203px;top:424.74px;width:2px;height:18.62px;background:#dcdcdc"></div>
<div style="left:203px;top:442.36px;width:158px;height:5px;background:#cfcfcf"></div>
<span id="t174" class="t " style="left:363px;top:427.60px;line-height:16.90px;font-size:13px;color:#1a1a1a;transform:scaleX(0.9150);transform-origin:0 50%;-webkit-text-stroke:0.15px currentColor;">NO</span>
<span id="t175" class="t " style="left:405.5px;top:427.60px;line-height:16.90px;font-size:13px;color:#1a1a1a;transform:scaleX(0.9150);transform-origin:0 50%;-webkit-text-stroke:0.15px currentColor;">######</span>
<span id="t176" class="t " style="left:452px;top:427.60px;line-height:16.90px;font-size:13px;color:#1a1a1a;transform:scaleX(0.9150);transform-origin:0 50%;-webkit-text-stroke:0.15px currentColor;">001</span>
<span id="t177" class="t " style="left:488px;top:427.60px;line-height:16.90px;font-size:13px;color:#1a1a1a;transform:scaleX(0.9150);transform-origin:0 50%;-webkit-text-stroke:0.15px currentColor;">001</span>
<span id="t178" class="t " style="left:519.8px;top:427.60px;line-height:16.90px;font-size:13px;color:#1a1a1a;transform:scaleX(0.9150);transform-origin:0 50%;-webkit-text-stroke:0.15px currentColor;">000000603</span>
<span id="t179" class="t " style="left:670.5px;top:427.60px;line-height:16.90px;font-size:13px;color:#1a1a1a;transform:translateX(-100%) scaleX(0.9681);transform-origin:100% 50%;-webkit-text-stroke:0.15px currentColor;">02/12/2024</span>
<div style="left:675px;top:427px;width:5px;height:5px;background:rgb(188,194,202)"></div>
<div style="left:680px;top:427px;width:5px;height:5px;background:rgb(208,214,222)"></div>
<div style="left:685px;top:427px;width:5px;height:5px;background:rgb(206,212,220)"></div>
<div style="left:690px;top:427px;width:5px;height:5px;background:rgb(191,197,205)"></div>
<div style="left:695px;top:427px;width:5px;height:5px;background:rgb(204,210,218)"></div>
<div style="left:700px;top:427px;width:5px;height:5px;background:rgb(182,188,196)"></div>
<div style="left:705px;top:427px;width:5px;height:5px;background:rgb(218,224,232)"></div>
<div style="left:710px;top:427px;width:5px;height:5px;background:rgb(217,223,231)"></div>
<div style="left:715px;top:427px;width:5px;height:5px;background:rgb(203,209,217)"></div>
<div style="left:675px;top:432px;width:5px;height:5px;background:rgb(218,224,232)"></div>
<div style="left:680px;top:432px;width:5px;height:5px;background:rgb(207,213,221)"></div>
<div style="left:685px;top:432px;width:5px;height:5px;background:rgb(210,216,224)"></div>
<div style="left:690px;top:432px;width:5px;height:5px;background:rgb(201,207,215)"></div>
<div style="left:695px;top:432px;width:5px;height:5px;background:rgb(208,214,222)"></div>
<div style="left:700px;top:432px;width:5px;height:5px;background:rgb(195,201,209)"></div>
<div style="left:705px;top:432px;width:5px;height:5px;background:rgb(220,226,234)"></div>
<div style="left:710px;top:432px;width:5px;height:5px;background:rgb(189,195,203)"></div>
<div style="left:715px;top:432px;width:5px;height:5px;background:rgb(190,196,204)"></div>
<div style="left:675px;top:437px;width:5px;height:5px;background:rgb(197,203,211)"></div>
<div style="left:680px;top:437px;width:5px;height:5px;background:rgb(188,194,202)"></div>
<div style="left:685px;top:437px;width:5px;height:5px;background:rgb(216,222,230)"></div>
<div style="left:690px;top:437px;width:5px;height:5px;background:rgb(184,190,198)"></div>
<div style="left:695px;top:437px;width:5px;height:5px;background:rgb(201,207,215)"></div>
<div style="left:700px;top:437px;width:5px;height:5px;background:rgb(198,204,212)"></div>
<div style="left:705px;top:437px;width:5px;height:5px;background:rgb(179,185,193)"></div>
<div style="left:710px;top:437px;width:5px;height:5px;background:rgb(184,190,198)"></div>
<div style="left:715px;top:437px;width:5px;height:5px;background:rgb(176,182,190)"></div>
<span id="t180" class="t " style="left:774.5px;top:427.60px;line-height:16.90px;font-size:13px;color:#1a1a1a;transform:translateX(-100%) scaleX(0.9205);transform-origin:100% 50%;-webkit-text-stroke:0.15px currentColor;">0.00</span>
<span id="t181" class="t " style="left:779px;top:427.60px;line-height:16.90px;font-size:13px;color:#1a1a1a;transform:scaleX(0.9150);transform-origin:0 50%;-webkit-text-stroke:0.15px currentColor;">100000</span>
<span id="t182" class="t " style="left:882px;top:427.60px;line-height:16.90px;font-size:13px;color:#1a1a1a;transform:scaleX(0.9150);transform-origin:0 50%;-webkit-text-stroke:0.15px currentColor;">0</span>
<span id="t183" class="t " style="left:1018px;top:427.60px;line-height:16.90px;font-size:13px;color:#1a1a1a;transform:translateX(-100%) scaleX(0.9150);transform-origin:100% 50%;-webkit-text-stroke:0.15px currentColor;">0</span>
<span id="t184" class="t " style="left:1022px;top:427.60px;line-height:16.90px;font-size:13px;color:#1a1a1a;transform:scaleX(0.9150);transform-origin:0 50%;-webkit-text-stroke:0.15px currentColor;">0</span>
<span id="t185" class="t " style="left:1058px;top:427.60px;line-height:16.90px;font-size:13px;color:#1a1a1a;transform:scaleX(0.9150);transform-origin:0 50%;-webkit-text-stroke:0.15px currentColor;">0</span>
<span id="t186" class="t " style="left:1251px;top:427.60px;line-height:16.90px;font-size:13px;color:#1a1a1a;transform:translateX(-100%) scaleX(0.9150);transform-origin:100% 50%;-webkit-text-stroke:0.15px currentColor;">0</span>
<span id="t187" class="t " style="left:1350px;top:427.60px;line-height:16.90px;font-size:13px;color:#1a1a1a;transform:translateX(-100%) scaleX(0.9150);transform-origin:100% 50%;-webkit-text-stroke:0.15px currentColor;">0</span>
<span id="t188" class="t " style="left:1354px;top:427.60px;line-height:16.90px;font-size:13px;color:#1a1a1a;transform:scaleX(0.9150);transform-origin:0 50%;-webkit-text-stroke:0.15px currentColor;">0</span>
<svg style="left:451px;top:425.74px" width="6" height="6" viewBox="0 0 6 6"><path d="M0 0 H6 L0 6 Z" fill="#1e8a1e"/></svg>
<svg style="left:487px;top:425.74px" width="6" height="6" viewBox="0 0 6 6"><path d="M0 0 H6 L0 6 Z" fill="#1e8a1e"/></svg>
<svg style="left:519px;top:425.74px" width="6" height="6" viewBox="0 0 6 6"><path d="M0 0 H6 L0 6 Z" fill="#1e8a1e"/></svg>
<svg style="left:674px;top:425.74px" width="5" height="5" viewBox="0 0 6 6"><path d="M0 0 H6 L0 6 Z" fill="#1e8a1e"/></svg>
<div style="left:205px;top:448.36px;width:5px;height:4.51px;background:rgb(174,178,182)"></div>
<div style="left:210px;top:448.36px;width:5px;height:4.51px;background:rgb(202,199,196)"></div>
<div style="left:215px;top:448.36px;width:5px;height:4.51px;background:rgb(197,193,189)"></div>
<div style="left:220px;top:448.36px;width:5px;height:4.51px;background:rgb(226,227,228)"></div>
<div style="left:225px;top:448.36px;width:5px;height:4.51px;background:rgb(179,177,175)"></div>
<div style="left:230px;top:448.36px;width:5px;height:4.51px;background:rgb(183,186,189)"></div>
<div style="left:235px;top:448.36px;width:5px;height:4.51px;background:rgb(194,192,190)"></div>
<div style="left:240px;top:448.36px;width:5px;height:4.51px;background:rgb(174,175,176)"></div>
<div style="left:245px;top:448.36px;width:5px;height:4.51px;background:rgb(198,198,198)"></div>
<div style="left:250px;top:448.36px;width:5px;height:4.51px;background:rgb(237,237,237)"></div>
<div style="left:255px;top:448.36px;width:5px;height:4.51px;background:rgb(185,190,195)"></div>
<div style="left:260px;top:448.36px;width:5px;height:4.51px;background:rgb(192,194,196)"></div>
<div style="left:265px;top:448.36px;width:5px;height:4.51px;background:rgb(194,197,200)"></div>
<div style="left:270px;top:448.36px;width:5px;height:4.51px;background:rgb(175,175,175)"></div>
<div style="left:275px;top:448.36px;width:5px;height:4.51px;background:rgb(195,199,203)"></div>
<div style="left:280px;top:448.36px;width:5px;height:4.51px;background:rgb(204,205,206)"></div>
<div style="left:285px;top:448.36px;width:5px;height:4.51px;background:rgb(241,236,231)"></div>
<div style="left:290px;top:448.36px;width:5px;height:4.51px;background:rgb(185,187,189)"></div>
<div style="left:205px;top:452.57px;width:5px;height:4.51px;background:rgb(179,184,189)"></div>
<div style="left:210px;top:452.57px;width:5px;height:4.51px;background:rgb(130,131,132)"></div>
<div style="left:215px;top:452.57px;width:5px;height:4.51px;background:rgb(128,131,134)"></div>
<div style="left:220px;top:452.57px;width:5px;height:4.51px;background:rgb(241,237,233)"></div>
<div style="left:225px;top:452.57px;width:5px;height:4.51px;background:rgb(126,125,124)"></div>
<div style="left:230px;top:452.57px;width:5px;height:4.51px;background:rgb(121,122,123)"></div>
<div style="left:235px;top:452.57px;width:5px;height:4.51px;background:rgb(163,158,153)"></div>
<div style="left:240px;top:452.57px;width:5px;height:4.51px;background:rgb(145,149,153)"></div>
<div style="left:245px;top:452.57px;width:5px;height:4.51px;background:rgb(144,139,134)"></div>
<div style="left:250px;top:452.57px;width:5px;height:4.51px;background:rgb(251,247,243)"></div>
<div style="left:255px;top:452.57px;width:5px;height:4.51px;background:rgb(169,169,169)"></div>
<div style="left:260px;top:452.57px;width:5px;height:4.51px;background:rgb(180,183,186)"></div>
<div style="left:265px;top:452.57px;width:5px;height:4.51px;background:rgb(160,156,152)"></div>
<div style="left:270px;top:452.57px;width:5px;height:4.51px;background:rgb(133,138,143)"></div>
<div style="left:275px;top:452.57px;width:5px;height:4.51px;background:rgb(190,185,180)"></div>
<div style="left:280px;top:452.57px;width:5px;height:4.51px;background:rgb(177,174,171)"></div>
<div style="left:285px;top:452.57px;width:5px;height:4.51px;background:rgb(232,229,226)"></div>
<div style="left:290px;top:452.57px;width:5px;height:4.51px;background:rgb(188,184,180)"></div>
<div style="left:205px;top:456.77px;width:5px;height:4.51px;background:rgb(206,201,196)"></div>
<div style="left:210px;top:456.77px;width:5px;height:4.51px;background:rgb(210,214,218)"></div>
<div style="left:215px;top:456.77px;width:5px;height:4.51px;background:rgb(196,201,206)"></div>
<div style="left:220px;top:456.77px;width:5px;height:4.51px;background:rgb(239,234,229)"></div>
<div style="left:225px;top:456.77px;width:5px;height:4.51px;background:rgb(219,223,227)"></div>
<div style="left:230px;top:456.77px;width:5px;height:4.51px;background:rgb(226,224,222)"></div>
<div style="left:235px;top:456.77px;width:5px;height:4.51px;background:rgb(208,203,198)"></div>
<div style="left:240px;top:456.77px;width:5px;height:4.51px;background:rgb(206,201,196)"></div>
<div style="left:245px;top:456.77px;width:5px;height:4.51px;background:rgb(217,215,213)"></div>
<div style="left:250px;top:456.77px;width:5px;height:4.51px;background:rgb(233,238,243)"></div>
<div style="left:255px;top:456.77px;width:5px;height:4.51px;background:rgb(225,229,233)"></div>
<div style="left:260px;top:456.77px;width:5px;height:4.51px;background:rgb(235,232,229)"></div>
<div style="left:265px;top:456.77px;width:5px;height:4.51px;background:rgb(210,205,200)"></div>
<div style="left:270px;top:456.77px;width:5px;height:4.51px;background:rgb(206,204,202)"></div>
<div style="left:275px;top:456.77px;width:5px;height:4.51px;background:rgb(212,216,220)"></div>
<div style="left:280px;top:456.77px;width:5px;height:4.51px;background:rgb(214,216,218)"></div>
<div style="left:285px;top:456.77px;width:5px;height:4.51px;background:rgb(234,236,238)"></div>
<div style="left:290px;top:456.77px;width:5px;height:4.51px;background:rgb(231,229,227)"></div>
<div style="left:203px;top:443.36px;width:2px;height:18.62px;background:#dcdcdc"></div>
<div style="left:203px;top:460.98px;width:158px;height:5px;background:#8fb070"></div>
<span id="t189" class="t " style="left:363px;top:446.22px;line-height:16.90px;font-size:13px;color:#1a1a1a;transform:scaleX(0.9150);transform-origin:0 50%;-webkit-text-stroke:0.15px currentColor;">NO</span>
<span id="t190" class="t " style="left:405.5px;top:446.22px;line-height:16.90px;font-size:13px;color:#1a1a1a;transform:scaleX(0.9150);transform-origin:0 50%;-webkit-text-stroke:0.15px currentColor;">######</span>
<span id="t191" class="t " style="left:452px;top:446.22px;line-height:16.90px;font-size:13px;color:#1a1a1a;transform:scaleX(0.9150);transform-origin:0 50%;-webkit-text-stroke:0.15px currentColor;">001</span>
<span id="t192" class="t " style="left:488px;top:446.22px;line-height:16.90px;font-size:13px;color:#1a1a1a;transform:scaleX(0.9150);transform-origin:0 50%;-webkit-text-stroke:0.15px currentColor;">001</span>
<span id="t193" class="t " style="left:519.8px;top:446.22px;line-height:16.90px;font-size:13px;color:#1a1a1a;transform:scaleX(0.9150);transform-origin:0 50%;-webkit-text-stroke:0.15px currentColor;">000000604</span>
<span id="t194" class="t " style="left:670.5px;top:446.22px;line-height:16.90px;font-size:13px;color:#1a1a1a;transform:translateX(-100%) scaleX(0.9681);transform-origin:100% 50%;-webkit-text-stroke:0.15px currentColor;">02/12/2024</span>
<div style="left:675px;top:446px;width:5px;height:5px;background:rgb(200,206,214)"></div>
<div style="left:680px;top:446px;width:5px;height:5px;background:rgb(180,186,194)"></div>
<div style="left:685px;top:446px;width:5px;height:5px;background:rgb(206,212,220)"></div>
<div style="left:690px;top:446px;width:5px;height:5px;background:rgb(219,225,233)"></div>
<div style="left:695px;top:446px;width:5px;height:5px;background:rgb(194,200,208)"></div>
<div style="left:700px;top:446px;width:5px;height:5px;background:rgb(178,184,192)"></div>
<div style="left:705px;top:446px;width:5px;height:5px;background:rgb(215,221,229)"></div>
<div style="left:710px;top:446px;width:5px;height:5px;background:rgb(216,222,230)"></div>
<div style="left:715px;top:446px;width:5px;height:5px;background:rgb(217,223,231)"></div>
<div style="left:675px;top:451px;width:5px;height:5px;background:rgb(188,194,202)"></div>
<div style="left:680px;top:451px;width:5px;height:5px;background:rgb(180,186,194)"></div>
<div style="left:685px;top:451px;width:5px;height:5px;background:rgb(214,220,228)"></div>
<div style="left:690px;top:451px;width:5px;height:5px;background:rgb(185,191,199)"></div>
<div style="left:695px;top:451px;width:5px;height:5px;background:rgb(197,203,211)"></div>
<div style="left:700px;top:451px;width:5px;height:5px;background:rgb(192,198,206)"></div>
<div style="left:705px;top:451px;width:5px;height:5px;background:rgb(217,223,231)"></div>
<div style="left:710px;top:451px;width:5px;height:5px;background:rgb(220,226,234)"></div>
<div style="left:715px;top:451px;width:5px;height:5px;background:rgb(195,201,209)"></div>
<div style="left:675px;top:456px;width:5px;height:5px;background:rgb(215,221,229)"></div>
<div style="left:680px;top:456px;width:5px;height:5px;background:rgb(212,218,226)"></div>
<div style="left:685px;top:456px;width:5px;height:5px;background:rgb(184,190,198)"></div>
<div style="left:690px;top:456px;width:5px;height:5px;background:rgb(176,182,190)"></div>
<div style="left:695px;top:456px;width:5px;height:5px;background:rgb(206,212,220)"></div>
<div style="left:700px;top:456px;width:5px;height:5px;background:rgb(179,185,193)"></div>
<div style="left:705px;top:456px;width:5px;height:5px;background:rgb(207,213,221)"></div>
<div style="left:710px;top:456px;width:5px;height:5px;background:rgb(193,199,207)"></div>
<div style="left:715px;top:456px;width:5px;height:5px;background:rgb(219,225,233)"></div>
<span id="t195" class="t " style="left:774.5px;top:446.22px;line-height:16.90px;font-size:13px;color:#1a1a1a;transform:translateX(-100%) scaleX(0.9205);transform-origin:100% 50%;-webkit-text-stroke:0.15px currentColor;">0.00</span>
<span id="t196" class="t " style="left:779px;top:446.22px;line-height:16.90px;font-size:13px;color:#1a1a1a;transform:scaleX(0.9150);transform-origin:0 50%;-webkit-text-stroke:0.15px currentColor;">0</span>
<span id="t197" class="t " style="left:882px;top:446.22px;line-height:16.90px;font-size:13px;color:#1a1a1a;transform:scaleX(0.9150);transform-origin:0 50%;-webkit-text-stroke:0.15px currentColor;">100000</span>
<span id="t198" class="t " style="left:1018px;top:446.22px;line-height:16.90px;font-size:13px;color:#1a1a1a;transform:translateX(-100%) scaleX(0.9150);transform-origin:100% 50%;-webkit-text-stroke:0.15px currentColor;">0</span>
<span id="t199" class="t " style="left:1022px;top:446.22px;line-height:16.90px;font-size:13px;color:#1a1a1a;transform:scaleX(0.9150);transform-origin:0 50%;-webkit-text-stroke:0.15px currentColor;">0</span>
<span id="t200" class="t " style="left:1058px;top:446.22px;line-height:16.90px;font-size:13px;color:#1a1a1a;transform:scaleX(0.9150);transform-origin:0 50%;-webkit-text-stroke:0.15px currentColor;">5000</span>
<span id="t201" class="t " style="left:1251px;top:446.22px;line-height:16.90px;font-size:13px;color:#1a1a1a;transform:translateX(-100%) scaleX(0.9150);transform-origin:100% 50%;-webkit-text-stroke:0.15px currentColor;">0</span>
<span id="t202" class="t " style="left:1350px;top:446.22px;line-height:16.90px;font-size:13px;color:#1a1a1a;transform:translateX(-100%) scaleX(0.9150);transform-origin:100% 50%;-webkit-text-stroke:0.15px currentColor;">0</span>
<span id="t203" class="t " style="left:1354px;top:446.22px;line-height:16.90px;font-size:13px;color:#1a1a1a;transform:scaleX(0.9150);transform-origin:0 50%;-webkit-text-stroke:0.15px currentColor;">0</span>
<svg style="left:451px;top:444.36px" width="6" height="6" viewBox="0 0 6 6"><path d="M0 0 H6 L0 6 Z" fill="#1e8a1e"/></svg>
<svg style="left:487px;top:444.36px" width="6" height="6" viewBox="0 0 6 6"><path d="M0 0 H6 L0 6 Z" fill="#1e8a1e"/></svg>
<svg style="left:519px;top:444.36px" width="6" height="6" viewBox="0 0 6 6"><path d="M0 0 H6 L0 6 Z" fill="#1e8a1e"/></svg>
<svg style="left:674px;top:444.36px" width="5" height="5" viewBox="0 0 6 6"><path d="M0 0 H6 L0 6 Z" fill="#1e8a1e"/></svg>
<div style="left:205px;top:466.98px;width:5px;height:4.51px;background:rgb(124,184,69)"></div>
<div style="left:210px;top:466.98px;width:5px;height:4.51px;background:rgb(124,184,69)"></div>
<div style="left:215px;top:466.98px;width:5px;height:4.51px;background:rgb(134,195,74)"></div>
<div style="left:220px;top:466.98px;width:5px;height:4.51px;background:rgb(135,195,74)"></div>
<div style="left:225px;top:466.98px;width:5px;height:4.51px;background:rgb(132,192,73)"></div>
<div style="left:230px;top:466.98px;width:5px;height:4.51px;background:rgb(110,168,62)"></div>
<div style="left:235px;top:466.98px;width:5px;height:4.51px;background:rgb(111,169,62)"></div>
<div style="left:240px;top:466.98px;width:5px;height:4.51px;background:rgb(137,198,75)"></div>
<div style="left:245px;top:466.98px;width:5px;height:4.51px;background:rgb(140,201,77)"></div>
<div style="left:250px;top:466.98px;width:5px;height:4.51px;background:rgb(115,173,64)"></div>
<div style="left:255px;top:466.98px;width:5px;height:4.51px;background:rgb(110,168,62)"></div>
<div style="left:260px;top:466.98px;width:5px;height:4.51px;background:rgb(125,184,69)"></div>
<div style="left:265px;top:466.98px;width:5px;height:4.51px;background:rgb(130,190,72)"></div>
<div style="left:270px;top:466.98px;width:5px;height:4.51px;background:rgb(132,192,73)"></div>
<div style="left:275px;top:466.98px;width:5px;height:4.51px;background:rgb(111,169,62)"></div>
<div style="left:280px;top:466.98px;width:5px;height:4.51px;background:rgb(143,205,78)"></div>
<div style="left:285px;top:466.98px;width:5px;height:4.51px;background:rgb(121,180,67)"></div>
<div style="left:290px;top:466.98px;width:5px;height:4.51px;background:rgb(134,194,74)"></div>
<div style="left:295px;top:466.98px;width:5px;height:4.51px;background:rgb(123,182,68)"></div>
<div style="left:300px;top:466.98px;width:5px;height:4.51px;background:rgb(111,168,62)"></div>
<div style="left:305px;top:466.98px;width:5px;height:4.51px;background:rgb(134,194,74)"></div>
<div style="left:310px;top:466.98px;width:5px;height:4.51px;background:rgb(136,196,75)"></div>
<div style="left:315px;top:466.98px;width:5px;height:4.51px;background:rgb(123,182,68)"></div>
<div style="left:320px;top:466.98px;width:5px;height:4.51px;background:rgb(113,171,63)"></div>
<div style="left:325px;top:466.98px;width:5px;height:4.51px;background:rgb(118,176,66)"></div>
<div style="left:205px;top:471.19px;width:5px;height:4.51px;background:rgb(98,154,56)"></div>
<div style="left:210px;top:471.19px;width:5px;height:4.51px;background:rgb(77,130,45)"></div>
<div style="left:215px;top:471.19px;width:5px;height:4.51px;background:rgb(90,145,52)"></div>
<div style="left:220px;top:471.19px;width:5px;height:4.51px;background:rgb(145,207,79)"></div>
<div style="left:225px;top:471.19px;width:5px;height:4.51px;background:rgb(105,162,59)"></div>
<div style="left:230px;top:471.19px;width:5px;height:4.51px;background:rgb(90,145,52)"></div>
<div style="left:235px;top:471.19px;width:5px;height:4.51px;background:rgb(91,146,52)"></div>
<div style="left:240px;top:471.19px;width:5px;height:4.51px;background:rgb(96,152,55)"></div>
<div style="left:245px;top:471.19px;width:5px;height:4.51px;background:rgb(144,206,79)"></div>
<div style="left:250px;top:471.19px;width:5px;height:4.51px;background:rgb(94,150,54)"></div>
<div style="left:255px;top:471.19px;width:5px;height:4.51px;background:rgb(95,151,54)"></div>
<div style="left:260px;top:471.19px;width:5px;height:4.51px;background:rgb(79,132,46)"></div>
<div style="left:265px;top:471.19px;width:5px;height:4.51px;background:rgb(105,162,59)"></div>
<div style="left:270px;top:471.19px;width:5px;height:4.51px;background:rgb(81,135,47)"></div>
<div style="left:275px;top:471.19px;width:5px;height:4.51px;background:rgb(79,132,46)"></div>
<div style="left:280px;top:471.19px;width:5px;height:4.51px;background:rgb(144,206,79)"></div>
<div style="left:285px;top:471.19px;width:5px;height:4.51px;background:rgb(76,129,45)"></div>
<div style="left:290px;top:471.19px;width:5px;height:4.51px;background:rgb(83,137,48)"></div>
<div style="left:295px;top:471.19px;width:5px;height:4.51px;background:rgb(77,130,45)"></div>
<div style="left:300px;top:471.19px;width:5px;height:4.51px;background:rgb(96,152,55)"></div>
<div style="left:305px;top:471.19px;width:5px;height:4.51px;background:rgb(94,149,54)"></div>
<div style="left:310px;top:471.19px;width:5px;height:4.51px;background:rgb(141,202,77)"></div>
<div style="left:315px;top:471.19px;width:5px;height:4.51px;background:rgb(74,127,44)"></div>
<div style="left:320px;top:471.19px;width:5px;height:4.51px;background:rgb(87,141,50)"></div>
<div style="left:325px;top:471.19px;width:5px;height:4.51px;background:rgb(94,150,54)"></div>
<div style="left:205px;top:475.39px;width:5px;height:4.51px;background:rgb(126,185,70)"></div>
<div style="left:210px;top:475.39px;width:5px;height:4.51px;background:rgb(130,190,72)"></div>
<div style="left:215px;top:475.39px;width:5px;height:4.51px;background:rgb(136,197,75)"></div>
<div style="left:220px;top:475.39px;width:5px;height:4.51px;background:rgb(144,206,79)"></div>
<div style="left:225px;top:475.39px;width:5px;height:4.51px;background:rgb(114,172,64)"></div>
<div style="left:230px;top:475.39px;width:5px;height:4.51px;background:rgb(130,190,72)"></div>
<div style="left:235px;top:475.39px;width:5px;height:4.51px;background:rgb(111,169,62)"></div>
<div style="left:240px;top:475.39px;width:5px;height:4.51px;background:rgb(131,191,72)"></div>
<div style="left:245px;top:475.39px;width:5px;height:4.51px;background:rgb(142,204,78)"></div>
<div style="left:250px;top:475.39px;width:5px;height:4.51px;background:rgb(123,182,68)"></div>
<div style="left:255px;top:475.39px;width:5px;height:4.51px;background:rgb(132,193,73)"></div>
<div style="left:260px;top:475.39px;width:5px;height:4.51px;background:rgb(127,187,70)"></div>
<div style="left:265px;top:475.39px;width:5px;height:4.51px;background:rgb(111,168,62)"></div>
<div style="left:270px;top:475.39px;width:5px;height:4.51px;background:rgb(113,171,63)"></div>
<div style="left:275px;top:475.39px;width:5px;height:4.51px;background:rgb(115,173,64)"></div>
<div style="left:280px;top:475.39px;width:5px;height:4.51px;background:rgb(138,199,76)"></div>
<div style="left:285px;top:475.39px;width:5px;height:4.51px;background:rgb(112,170,63)"></div>
<div style="left:290px;top:475.39px;width:5px;height:4.51px;background:rgb(111,169,62)"></div>
<div style="left:295px;top:475.39px;width:5px;height:4.51px;background:rgb(122,181,68)"></div>
<div style="left:300px;top:475.39px;width:5px;height:4.51px;background:rgb(117,176,65)"></div>
<div style="left:305px;top:475.39px;width:5px;height:4.51px;background:rgb(136,197,75)"></div>
<div style="left:310px;top:475.39px;width:5px;height:4.51px;background:rgb(137,198,75)"></div>
<div style="left:315px;top:475.39px;width:5px;height:4.51px;background:rgb(125,184,69)"></div>
<div style="left:320px;top:475.39px;width:5px;height:4.51px;background:rgb(116,175,65)"></div>
<div style="left:325px;top:475.39px;width:5px;height:4.51px;background:rgb(119,178,66)"></div>
<div style="left:203px;top:461.98px;width:2px;height:18.62px;background:rgba(0,0,0,0.12)"></div>
<div style="left:203px;top:479.6px;width:158px;height:5px;background:#80b050"></div>
<span id="t204" class="t " style="left:363px;top:464.84px;line-height:16.90px;font-size:13px;color:#1a1a1a;transform:scaleX(0.9150);transform-origin:0 50%;-webkit-text-stroke:0.15px currentColor;">NO</span>
<span id="t205" class="t " style="left:405.5px;top:464.84px;line-height:16.90px;font-size:13px;color:#1a1a1a;transform:scaleX(0.9150);transform-origin:0 50%;-webkit-text-stroke:0.15px currentColor;">######</span>
<span id="t206" class="t " style="left:452px;top:464.84px;line-height:16.90px;font-size:13px;color:#1a1a1a;transform:scaleX(0.9150);transform-origin:0 50%;-webkit-text-stroke:0.15px currentColor;">001</span>
<span id="t207" class="t " style="left:488px;top:464.84px;line-height:16.90px;font-size:13px;color:#1a1a1a;transform:scaleX(0.9150);transform-origin:0 50%;-webkit-text-stroke:0.15px currentColor;">002</span>
<span id="t208" class="t " style="left:519.8px;top:464.84px;line-height:16.90px;font-size:13px;color:#1a1a1a;transform:scaleX(0.9150);transform-origin:0 50%;-webkit-text-stroke:0.15px currentColor;">000003246</span>
<span id="t209" class="t " style="left:670.5px;top:464.84px;line-height:16.90px;font-size:13px;color:#1a1a1a;transform:translateX(-100%) scaleX(0.9681);transform-origin:100% 50%;-webkit-text-stroke:0.15px currentColor;">02/12/2024</span>
<div style="left:673px;top:477.6px;width:45px;height:4px;background:#c8ccd2"></div>
<span id="t210" class="t " style="left:774.5px;top:464.84px;line-height:16.90px;font-size:13px;color:#1a1a1a;transform:translateX(-100%) scaleX(0.9205);transform-origin:100% 50%;-webkit-text-stroke:0.15px currentColor;">0.00</span>
<span id="t211" class="t " style="left:779px;top:464.84px;line-height:16.90px;font-size:13px;color:#1a1a1a;transform:scaleX(0.9150);transform-origin:0 50%;-webkit-text-stroke:0.15px currentColor;">0</span>
<span id="t212" class="t " style="left:882px;top:464.84px;line-height:16.90px;font-size:13px;color:#1a1a1a;transform:scaleX(0.9150);transform-origin:0 50%;-webkit-text-stroke:0.15px currentColor;">100000</span>
<span id="t213" class="t " style="left:1018px;top:464.84px;line-height:16.90px;font-size:13px;color:#1a1a1a;transform:translateX(-100%) scaleX(0.9150);transform-origin:100% 50%;-webkit-text-stroke:0.15px currentColor;">0</span>
<span id="t214" class="t " style="left:1022px;top:464.84px;line-height:16.90px;font-size:13px;color:#1a1a1a;transform:scaleX(0.9150);transform-origin:0 50%;-webkit-text-stroke:0.15px currentColor;">0</span>
<span id="t215" class="t " style="left:1058px;top:464.84px;line-height:16.90px;font-size:13px;color:#1a1a1a;transform:scaleX(0.9150);transform-origin:0 50%;-webkit-text-stroke:0.15px currentColor;">5000</span>
<span id="t216" class="t " style="left:1251px;top:464.84px;line-height:16.90px;font-size:13px;color:#1a1a1a;transform:translateX(-100%) scaleX(0.9150);transform-origin:100% 50%;-webkit-text-stroke:0.15px currentColor;">0</span>
<span id="t217" class="t " style="left:1350px;top:464.84px;line-height:16.90px;font-size:13px;color:#1a1a1a;transform:translateX(-100%) scaleX(0.9150);transform-origin:100% 50%;-webkit-text-stroke:0.15px currentColor;">0</span>
<span id="t218" class="t " style="left:1354px;top:464.84px;line-height:16.90px;font-size:13px;color:#1a1a1a;transform:scaleX(0.9150);transform-origin:0 50%;-webkit-text-stroke:0.15px currentColor;">0</span>
<svg style="left:451px;top:462.98px" width="6" height="6" viewBox="0 0 6 6"><path d="M0 0 H6 L0 6 Z" fill="#1e8a1e"/></svg>
<svg style="left:487px;top:462.98px" width="6" height="6" viewBox="0 0 6 6"><path d="M0 0 H6 L0 6 Z" fill="#1e8a1e"/></svg>
<svg style="left:519px;top:462.98px" width="6" height="6" viewBox="0 0 6 6"><path d="M0 0 H6 L0 6 Z" fill="#1e8a1e"/></svg>
<div style="left:205px;top:485.60px;width:5px;height:4.51px;background:rgb(124,184,69)"></div>
<div style="left:210px;top:485.60px;width:5px;height:4.51px;background:rgb(128,188,71)"></div>
<div style="left:215px;top:485.60px;width:5px;height:4.51px;background:rgb(129,189,71)"></div>
<div style="left:220px;top:485.60px;width:5px;height:4.51px;background:rgb(117,175,65)"></div>
<div style="left:225px;top:485.60px;width:5px;height:4.51px;background:rgb(110,168,62)"></div>
<div style="left:230px;top:485.60px;width:5px;height:4.51px;background:rgb(142,204,78)"></div>
<div style="left:235px;top:485.60px;width:5px;height:4.51px;background:rgb(119,178,66)"></div>
<div style="left:240px;top:485.60px;width:5px;height:4.51px;background:rgb(129,189,71)"></div>
<div style="left:245px;top:485.60px;width:5px;height:4.51px;background:rgb(122,181,68)"></div>
<div style="left:250px;top:485.60px;width:5px;height:4.51px;background:rgb(126,186,70)"></div>
<div style="left:255px;top:485.60px;width:5px;height:4.51px;background:rgb(133,193,73)"></div>
<div style="left:260px;top:485.60px;width:5px;height:4.51px;background:rgb(133,193,73)"></div>
<div style="left:265px;top:485.60px;width:5px;height:4.51px;background:rgb(143,205,78)"></div>
<div style="left:270px;top:485.60px;width:5px;height:4.51px;background:rgb(112,170,63)"></div>
<div style="left:275px;top:485.60px;width:5px;height:4.51px;background:rgb(124,183,69)"></div>
<div style="left:280px;top:485.60px;width:5px;height:4.51px;background:rgb(131,192,72)"></div>
<div style="left:285px;top:485.60px;width:5px;height:4.51px;background:rgb(135,195,74)"></div>
<div style="left:290px;top:485.60px;width:5px;height:4.51px;background:rgb(110,167,62)"></div>
<div style="left:295px;top:485.60px;width:5px;height:4.51px;background:rgb(125,184,69)"></div>
<div style="left:300px;top:485.60px;width:5px;height:4.51px;background:rgb(134,194,74)"></div>
<div style="left:305px;top:485.60px;width:5px;height:4.51px;background:rgb(132,192,73)"></div>
<div style="left:310px;top:485.60px;width:5px;height:4.51px;background:rgb(144,206,79)"></div>
<div style="left:315px;top:485.60px;width:5px;height:4.51px;background:rgb(128,188,71)"></div>
<div style="left:320px;top:485.60px;width:5px;height:4.51px;background:rgb(135,196,74)"></div>
<div style="left:325px;top:485.60px;width:5px;height:4.51px;background:rgb(131,191,72)"></div>
<div style="left:205px;top:489.81px;width:5px;height:4.51px;background:rgb(97,153,55)"></div>
<div style="left:210px;top:489.81px;width:5px;height:4.51px;background:rgb(87,142,50)"></div>
<div style="left:215px;top:489.81px;width:5px;height:4.51px;background:rgb(77,131,45)"></div>
<div style="left:220px;top:489.81px;width:5px;height:4.51px;background:rgb(82,136,48)"></div>
<div style="left:225px;top:489.81px;width:5px;height:4.51px;background:rgb(92,148,53)"></div>
<div style="left:230px;top:489.81px;width:5px;height:4.51px;background:rgb(141,202,77)"></div>
<div style="left:235px;top:489.81px;width:5px;height:4.51px;background:rgb(89,144,51)"></div>
<div style="left:240px;top:489.81px;width:5px;height:4.51px;background:rgb(93,149,53)"></div>
<div style="left:245px;top:489.81px;width:5px;height:4.51px;background:rgb(95,150,54)"></div>
<div style="left:250px;top:489.81px;width:5px;height:4.51px;background:rgb(104,160,59)"></div>
<div style="left:255px;top:489.81px;width:5px;height:4.51px;background:rgb(97,153,55)"></div>
<div style="left:260px;top:489.81px;width:5px;height:4.51px;background:rgb(75,128,44)"></div>
<div style="left:265px;top:489.81px;width:5px;height:4.51px;background:rgb(144,206,79)"></div>
<div style="left:270px;top:489.81px;width:5px;height:4.51px;background:rgb(89,144,51)"></div>
<div style="left:275px;top:489.81px;width:5px;height:4.51px;background:rgb(85,140,49)"></div>
<div style="left:280px;top:489.81px;width:5px;height:4.51px;background:rgb(78,131,46)"></div>
<div style="left:285px;top:489.81px;width:5px;height:4.51px;background:rgb(143,205,78)"></div>
<div style="left:290px;top:489.81px;width:5px;height:4.51px;background:rgb(97,153,55)"></div>
<div style="left:295px;top:489.81px;width:5px;height:4.51px;background:rgb(98,154,56)"></div>
<div style="left:300px;top:489.81px;width:5px;height:4.51px;background:rgb(93,148,53)"></div>
<div style="left:305px;top:489.81px;width:5px;height:4.51px;background:rgb(91,146,52)"></div>
<div style="left:310px;top:489.81px;width:5px;height:4.51px;background:rgb(134,195,74)"></div>
<div style="left:315px;top:489.81px;width:5px;height:4.51px;background:rgb(78,132,46)"></div>
<div style="left:320px;top:489.81px;width:5px;height:4.51px;background:rgb(78,131,46)"></div>
<div style="left:325px;top:489.81px;width:5px;height:4.51px;background:rgb(105,162,59)"></div>
<div style="left:205px;top:494.01px;width:5px;height:4.51px;background:rgb(137,197,75)"></div>
<div style="left:210px;top:494.01px;width:5px;height:4.51px;background:rgb(118,176,66)"></div>
<div style="left:215px;top:494.01px;width:5px;height:4.51px;background:rgb(112,170,63)"></div>
<div style="left:220px;top:494.01px;width:5px;height:4.51px;background:rgb(124,184,69)"></div>
<div style="left:225px;top:494.01px;width:5px;height:4.51px;background:rgb(121,180,67)"></div>
<div style="left:230px;top:494.01px;width:5px;height:4.51px;background:rgb(145,207,79)"></div>
<div style="left:235px;top:494.01px;width:5px;height:4.51px;background:rgb(127,186,70)"></div>
<div style="left:240px;top:494.01px;width:5px;height:4.51px;background:rgb(112,169,63)"></div>
<div style="left:245px;top:494.01px;width:5px;height:4.51px;background:rgb(114,172,64)"></div>
<div style="left:250px;top:494.01px;width:5px;height:4.51px;background:rgb(114,172,64)"></div>
<div style="left:255px;top:494.01px;width:5px;height:4.51px;background:rgb(110,168,62)"></div>
<div style="left:260px;top:494.01px;width:5px;height:4.51px;background:rgb(131,191,72)"></div>
<div style="left:265px;top:494.01px;width:5px;height:4.51px;background:rgb(144,206,79)"></div>
<div style="left:270px;top:494.01px;width:5px;height:4.51px;background:rgb(133,194,73)"></div>
<div style="left:275px;top:494.01px;width:5px;height:4.51px;background:rgb(123,182,68)"></div>
<div style="left:280px;top:494.01px;width:5px;height:4.51px;background:rgb(118,177,66)"></div>
<div style="left:285px;top:494.01px;width:5px;height:4.51px;background:rgb(134,195,74)"></div>
<div style="left:290px;top:494.01px;width:5px;height:4.51px;background:rgb(117,176,65)"></div>
<div style="left:295px;top:494.01px;width:5px;height:4.51px;background:rgb(119,178,66)"></div>
<div style="left:300px;top:494.01px;width:5px;height:4.51px;background:rgb(116,174,65)"></div>
<div style="left:305px;top:494.01px;width:5px;height:4.51px;background:rgb(125,184,69)"></div>
<div style="left:310px;top:494.01px;width:5px;height:4.51px;background:rgb(139,200,76)"></div>
<div style="left:315px;top:494.01px;width:5px;height:4.51px;background:rgb(136,197,75)"></div>
<div style="left:320px;top:494.01px;width:5px;height:4.51px;background:rgb(116,174,65)"></div>
<div style="left:325px;top:494.01px;width:5px;height:4.51px;background:rgb(131,191,72)"></div>
<div style="left:203px;top:480.6px;width:2px;height:18.62px;background:rgba(0,0,0,0.12)"></div>
<div style="left:203px;top:498.22px;width:158px;height:5px;background:#6aaa60"></div>
<span id="t219" class="t " style="left:363px;top:483.46px;line-height:16.90px;font-size:13px;color:#1a1a1a;transform:scaleX(0.9150);transform-origin:0 50%;-webkit-text-stroke:0.15px currentColor;">NO</span>
<span id="t220" class="t " style="left:405.5px;top:483.46px;line-height:16.90px;font-size:13px;color:#1a1a1a;transform:scaleX(0.9150);transform-origin:0 50%;-webkit-text-stroke:0.15px currentColor;">######</span>
<span id="t221" class="t " style="left:452px;top:483.46px;line-height:16.90px;font-size:13px;color:#1a1a1a;transform:scaleX(0.9150);transform-origin:0 50%;-webkit-text-stroke:0.15px currentColor;">001</span>
<span id="t222" class="t " style="left:488px;top:483.46px;line-height:16.90px;font-size:13px;color:#1a1a1a;transform:scaleX(0.9150);transform-origin:0 50%;-webkit-text-stroke:0.15px currentColor;">002</span>
<span id="t223" class="t " style="left:519.8px;top:483.46px;line-height:16.90px;font-size:13px;color:#1a1a1a;transform:scaleX(0.9150);transform-origin:0 50%;-webkit-text-stroke:0.15px currentColor;">000003247</span>
<span id="t224" class="t " style="left:670.5px;top:483.46px;line-height:16.90px;font-size:13px;color:#1a1a1a;transform:translateX(-100%) scaleX(0.9681);transform-origin:100% 50%;-webkit-text-stroke:0.15px currentColor;">02/12/2024</span>
<div style="left:673px;top:496.22px;width:45px;height:4px;background:#c8ccd2"></div>
<span id="t225" class="t " style="left:774.5px;top:483.46px;line-height:16.90px;font-size:13px;color:#1a1a1a;transform:translateX(-100%) scaleX(0.9205);transform-origin:100% 50%;-webkit-text-stroke:0.15px currentColor;">0.00</span>
<span id="t226" class="t " style="left:779px;top:483.46px;line-height:16.90px;font-size:13px;color:#1a1a1a;transform:scaleX(0.9150);transform-origin:0 50%;-webkit-text-stroke:0.15px currentColor;">0</span>
<span id="t227" class="t " style="left:882px;top:483.46px;line-height:16.90px;font-size:13px;color:#1a1a1a;transform:scaleX(0.9150);transform-origin:0 50%;-webkit-text-stroke:0.15px currentColor;">100000</span>
<span id="t228" class="t " style="left:1018px;top:483.46px;line-height:16.90px;font-size:13px;color:#1a1a1a;transform:translateX(-100%) scaleX(0.9150);transform-origin:100% 50%;-webkit-text-stroke:0.15px currentColor;">0</span>
<span id="t229" class="t " style="left:1022px;top:483.46px;line-height:16.90px;font-size:13px;color:#1a1a1a;transform:scaleX(0.9150);transform-origin:0 50%;-webkit-text-stroke:0.15px currentColor;">0</span>
<span id="t230" class="t " style="left:1058px;top:483.46px;line-height:16.90px;font-size:13px;color:#1a1a1a;transform:scaleX(0.9150);transform-origin:0 50%;-webkit-text-stroke:0.15px currentColor;">15000</span>
<span id="t231" class="t " style="left:1251px;top:483.46px;line-height:16.90px;font-size:13px;color:#1a1a1a;transform:translateX(-100%) scaleX(0.9150);transform-origin:100% 50%;-webkit-text-stroke:0.15px currentColor;">0</span>
<span id="t232" class="t " style="left:1350px;top:483.46px;line-height:16.90px;font-size:13px;color:#1a1a1a;transform:translateX(-100%) scaleX(0.9150);transform-origin:100% 50%;-webkit-text-stroke:0.15px currentColor;">0</span>
<span id="t233" class="t " style="left:1354px;top:483.46px;line-height:16.90px;font-size:13px;color:#1a1a1a;transform:scaleX(0.9150);transform-origin:0 50%;-webkit-text-stroke:0.15px currentColor;">0</span>
<svg style="left:451px;top:481.6px" width="6" height="6" viewBox="0 0 6 6"><path d="M0 0 H6 L0 6 Z" fill="#1e8a1e"/></svg>
<svg style="left:487px;top:481.6px" width="6" height="6" viewBox="0 0 6 6"><path d="M0 0 H6 L0 6 Z" fill="#1e8a1e"/></svg>
<svg style="left:519px;top:481.6px" width="6" height="6" viewBox="0 0 6 6"><path d="M0 0 H6 L0 6 Z" fill="#1e8a1e"/></svg>
<div style="left:205px;top:504.22px;width:5px;height:4.51px;background:rgb(0,122,200)"></div>
<div style="left:210px;top:504.22px;width:5px;height:4.51px;background:rgb(0,133,208)"></div>
<div style="left:215px;top:504.22px;width:5px;height:4.51px;background:rgb(0,136,211)"></div>
<div style="left:220px;top:504.22px;width:5px;height:4.51px;background:rgb(0,171,236)"></div>
<div style="left:225px;top:504.22px;width:5px;height:4.51px;background:rgb(0,128,205)"></div>
<div style="left:230px;top:504.22px;width:5px;height:4.51px;background:rgb(0,150,221)"></div>
<div style="left:235px;top:504.22px;width:5px;height:4.51px;background:rgb(0,144,216)"></div>
<div style="left:240px;top:504.22px;width:5px;height:4.51px;background:rgb(0,122,201)"></div>
<div style="left:205px;top:508.43px;width:5px;height:4.51px;background:rgb(0,147,219)"></div>
<div style="left:210px;top:508.43px;width:5px;height:4.51px;background:rgb(0,145,217)"></div>
<div style="left:215px;top:508.43px;width:5px;height:4.51px;background:rgb(0,127,205)"></div>
<div style="left:220px;top:508.43px;width:5px;height:4.51px;background:rgb(0,175,239)"></div>
<div style="left:225px;top:508.43px;width:5px;height:4.51px;background:rgb(0,136,211)"></div>
<div style="left:230px;top:508.43px;width:5px;height:4.51px;background:rgb(0,121,200)"></div>
<div style="left:235px;top:508.43px;width:5px;height:4.51px;background:rgb(0,144,217)"></div>
<div style="left:240px;top:508.43px;width:5px;height:4.51px;background:rgb(0,143,216)"></div>
<div style="left:205px;top:512.63px;width:5px;height:4.51px;background:rgb(0,126,203)"></div>
<div style="left:210px;top:512.63px;width:5px;height:4.51px;background:rgb(0,146,218)"></div>
<div style="left:215px;top:512.63px;width:5px;height:4.51px;background:rgb(0,136,211)"></div>
<div style="left:220px;top:512.63px;width:5px;height:4.51px;background:rgb(0,169,235)"></div>
<div style="left:225px;top:512.63px;width:5px;height:4.51px;background:rgb(0,153,223)"></div>
<div style="left:230px;top:512.63px;width:5px;height:4.51px;background:rgb(0,140,214)"></div>
<div style="left:235px;top:512.63px;width:5px;height:4.51px;background:rgb(0,132,208)"></div>
<div style="left:240px;top:512.63px;width:5px;height:4.51px;background:rgb(0,152,222)"></div>
<div style="left:203px;top:499.22px;width:2px;height:18.62px;background:rgba(0,0,0,0.12)"></div>
<div style="left:203px;top:516.84px;width:158px;height:5px;background:#5aa870"></div>
<span id="t234" class="t " style="left:363px;top:502.08px;line-height:16.90px;font-size:13px;color:#1a1a1a;transform:scaleX(0.9150);transform-origin:0 50%;-webkit-text-stroke:0.15px currentColor;">NO</span>
<span id="t235" class="t " style="left:405.5px;top:502.08px;line-height:16.90px;font-size:13px;color:#1a1a1a;transform:scaleX(0.9150);transform-origin:0 50%;-webkit-text-stroke:0.15px currentColor;">######</span>
<span id="t236" class="t " style="left:452px;top:502.08px;line-height:16.90px;font-size:13px;color:#1a1a1a;transform:scaleX(0.9150);transform-origin:0 50%;-webkit-text-stroke:0.15px currentColor;">001</span>
<span id="t237" class="t " style="left:488px;top:502.08px;line-height:16.90px;font-size:13px;color:#1a1a1a;transform:scaleX(0.9150);transform-origin:0 50%;-webkit-text-stroke:0.15px currentColor;">002</span>
<span id="t238" class="t " style="left:519.8px;top:502.08px;line-height:16.90px;font-size:13px;color:#1a1a1a;transform:scaleX(0.9150);transform-origin:0 50%;-webkit-text-stroke:0.15px currentColor;">000003249</span>
<span id="t239" class="t " style="left:670.5px;top:502.08px;line-height:16.90px;font-size:13px;color:#1a1a1a;transform:translateX(-100%) scaleX(0.9681);transform-origin:100% 50%;-webkit-text-stroke:0.15px currentColor;">02/12/2024</span>
<div style="left:673px;top:514.84px;width:45px;height:4px;background:#c8ccd2"></div>
<span id="t240" class="t " style="left:774.5px;top:502.08px;line-height:16.90px;font-size:13px;color:#1a1a1a;transform:translateX(-100%) scaleX(0.9205);transform-origin:100% 50%;-webkit-text-stroke:0.15px currentColor;">0.00</span>
<span id="t241" class="t " style="left:779px;top:502.08px;line-height:16.90px;font-size:13px;color:#1a1a1a;transform:scaleX(0.9150);transform-origin:0 50%;-webkit-text-stroke:0.15px currentColor;">0</span>
<span id="t242" class="t " style="left:882px;top:502.08px;line-height:16.90px;font-size:13px;color:#1a1a1a;transform:scaleX(0.9150);transform-origin:0 50%;-webkit-text-stroke:0.15px currentColor;">100000</span>
<span id="t243" class="t " style="left:1018px;top:502.08px;line-height:16.90px;font-size:13px;color:#1a1a1a;transform:translateX(-100%) scaleX(0.9150);transform-origin:100% 50%;-webkit-text-stroke:0.15px currentColor;">0</span>
<span id="t244" class="t " style="left:1022px;top:502.08px;line-height:16.90px;font-size:13px;color:#1a1a1a;transform:scaleX(0.9150);transform-origin:0 50%;-webkit-text-stroke:0.15px currentColor;">0</span>
<span id="t245" class="t " style="left:1058px;top:502.08px;line-height:16.90px;font-size:13px;color:#1a1a1a;transform:scaleX(0.9150);transform-origin:0 50%;-webkit-text-stroke:0.15px currentColor;">5000</span>
<span id="t246" class="t " style="left:1251px;top:502.08px;line-height:16.90px;font-size:13px;color:#1a1a1a;transform:translateX(-100%) scaleX(0.9150);transform-origin:100% 50%;-webkit-text-stroke:0.15px currentColor;">0</span>
<span id="t247" class="t " style="left:1350px;top:502.08px;line-height:16.90px;font-size:13px;color:#1a1a1a;transform:translateX(-100%) scaleX(0.9150);transform-origin:100% 50%;-webkit-text-stroke:0.15px currentColor;">0</span>
<span id="t248" class="t " style="left:1354px;top:502.08px;line-height:16.90px;font-size:13px;color:#1a1a1a;transform:scaleX(0.9150);transform-origin:0 50%;-webkit-text-stroke:0.15px currentColor;">0</span>
<svg style="left:451px;top:500.22px" width="6" height="6" viewBox="0 0 6 6"><path d="M0 0 H6 L0 6 Z" fill="#1e8a1e"/></svg>
<svg style="left:487px;top:500.22px" width="6" height="6" viewBox="0 0 6 6"><path d="M0 0 H6 L0 6 Z" fill="#1e8a1e"/></svg>
<svg style="left:519px;top:500.22px" width="6" height="6" viewBox="0 0 6 6"><path d="M0 0 H6 L0 6 Z" fill="#1e8a1e"/></svg>
<div style="left:205px;top:522.84px;width:5px;height:4.51px;background:rgb(199,203,0)"></div>
<div style="left:210px;top:522.84px;width:5px;height:4.51px;background:rgb(207,211,0)"></div>
<div style="left:215px;top:522.84px;width:5px;height:4.51px;background:rgb(228,230,0)"></div>
<div style="left:220px;top:522.84px;width:5px;height:4.51px;background:rgb(222,225,0)"></div>
<div style="left:225px;top:522.84px;width:5px;height:4.51px;background:rgb(250,251,0)"></div>
<div style="left:230px;top:522.84px;width:5px;height:4.51px;background:rgb(217,220,0)"></div>
<div style="left:235px;top:522.84px;width:5px;height:4.51px;background:rgb(213,216,0)"></div>
<div style="left:240px;top:522.84px;width:5px;height:4.51px;background:rgb(205,210,0)"></div>
<div style="left:245px;top:522.84px;width:5px;height:4.51px;background:rgb(205,209,0)"></div>
<div style="left:205px;top:527.05px;width:5px;height:4.51px;background:rgb(217,221,0)"></div>
<div style="left:210px;top:527.05px;width:5px;height:4.51px;background:rgb(216,219,0)"></div>
<div style="left:215px;top:527.05px;width:5px;height:4.51px;background:rgb(230,232,0)"></div>
<div style="left:220px;top:527.05px;width:5px;height:4.51px;background:rgb(220,223,0)"></div>
<div style="left:225px;top:527.05px;width:5px;height:4.51px;background:rgb(246,247,0)"></div>
<div style="left:230px;top:527.05px;width:5px;height:4.51px;background:rgb(228,230,0)"></div>
<div style="left:235px;top:527.05px;width:5px;height:4.51px;background:rgb(213,216,0)"></div>
<div style="left:240px;top:527.05px;width:5px;height:4.51px;background:rgb(223,226,0)"></div>
<div style="left:245px;top:527.05px;width:5px;height:4.51px;background:rgb(203,207,0)"></div>
<div style="left:205px;top:531.25px;width:5px;height:4.51px;background:rgb(224,226,0)"></div>
<div style="left:210px;top:531.25px;width:5px;height:4.51px;background:rgb(214,217,0)"></div>
<div style="left:215px;top:531.25px;width:5px;height:4.51px;background:rgb(221,224,0)"></div>
<div style="left:220px;top:531.25px;width:5px;height:4.51px;background:rgb(198,203,0)"></div>
<div style="left:225px;top:531.25px;width:5px;height:4.51px;background:rgb(253,254,0)"></div>
<div style="left:230px;top:531.25px;width:5px;height:4.51px;background:rgb(208,212,0)"></div>
<div style="left:235px;top:531.25px;width:5px;height:4.51px;background:rgb(209,212,0)"></div>
<div style="left:240px;top:531.25px;width:5px;height:4.51px;background:rgb(198,203,0)"></div>
<div style="left:245px;top:531.25px;width:5px;height:4.51px;background:rgb(213,216,0)"></div>
<div style="left:203px;top:517.84px;width:2px;height:18.62px;background:rgba(0,0,0,0.12)"></div>
<div style="left:203px;top:535.46px;width:158px;height:5px;background:#c8c8a0"></div>
<span id="t249" class="t " style="left:363px;top:520.70px;line-height:16.90px;font-size:13px;color:#1a1a1a;transform:scaleX(0.9150);transform-origin:0 50%;-webkit-text-stroke:0.15px currentColor;">NO</span>
<span id="t250" class="t " style="left:405.5px;top:520.70px;line-height:16.90px;font-size:13px;color:#1a1a1a;transform:scaleX(0.9150);transform-origin:0 50%;-webkit-text-stroke:0.15px currentColor;">######</span>
<span id="t251" class="t " style="left:452px;top:520.70px;line-height:16.90px;font-size:13px;color:#1a1a1a;transform:scaleX(0.9150);transform-origin:0 50%;-webkit-text-stroke:0.15px currentColor;">001</span>
<span id="t252" class="t " style="left:488px;top:520.70px;line-height:16.90px;font-size:13px;color:#1a1a1a;transform:scaleX(0.9150);transform-origin:0 50%;-webkit-text-stroke:0.15px currentColor;">002</span>
<span id="t253" class="t " style="left:519.8px;top:520.70px;line-height:16.90px;font-size:13px;color:#1a1a1a;transform:scaleX(0.9150);transform-origin:0 50%;-webkit-text-stroke:0.15px currentColor;">000003250</span>
<span id="t254" class="t " style="left:670.5px;top:520.70px;line-height:16.90px;font-size:13px;color:#1a1a1a;transform:translateX(-100%) scaleX(0.9681);transform-origin:100% 50%;-webkit-text-stroke:0.15px currentColor;">02/12/2024</span>
<div style="left:673px;top:533.46px;width:45px;height:4px;background:#c8ccd2"></div>
<span id="t255" class="t " style="left:774.5px;top:520.70px;line-height:16.90px;font-size:13px;color:#1a1a1a;transform:translateX(-100%) scaleX(0.9205);transform-origin:100% 50%;-webkit-text-stroke:0.15px currentColor;">0.00</span>
<span id="t256" class="t " style="left:779px;top:520.70px;line-height:16.90px;font-size:13px;color:#1a1a1a;transform:scaleX(0.9150);transform-origin:0 50%;-webkit-text-stroke:0.15px currentColor;">57000</span>
<span id="t257" class="t " style="left:882px;top:520.70px;line-height:16.90px;font-size:13px;color:#1a1a1a;transform:scaleX(0.9150);transform-origin:0 50%;-webkit-text-stroke:0.15px currentColor;">40000</span>
<span id="t258" class="t " style="left:1018px;top:520.70px;line-height:16.90px;font-size:13px;color:#1a1a1a;transform:translateX(-100%) scaleX(0.9150);transform-origin:100% 50%;-webkit-text-stroke:0.15px currentColor;">0</span>
<span id="t259" class="t " style="left:1022px;top:520.70px;line-height:16.90px;font-size:13px;color:#1a1a1a;transform:scaleX(0.9150);transform-origin:0 50%;-webkit-text-stroke:0.15px currentColor;">0</span>
<span id="t260" class="t " style="left:1058px;top:520.70px;line-height:16.90px;font-size:13px;color:#1a1a1a;transform:scaleX(0.9150);transform-origin:0 50%;-webkit-text-stroke:0.15px currentColor;">8000</span>
<span id="t261" class="t " style="left:1251px;top:520.70px;line-height:16.90px;font-size:13px;color:#1a1a1a;transform:translateX(-100%) scaleX(0.9150);transform-origin:100% 50%;-webkit-text-stroke:0.15px currentColor;">0</span>
<span id="t262" class="t " style="left:1350px;top:520.70px;line-height:16.90px;font-size:13px;color:#1a1a1a;transform:translateX(-100%) scaleX(0.9150);transform-origin:100% 50%;-webkit-text-stroke:0.15px currentColor;">0</span>
<span id="t263" class="t " style="left:1354px;top:520.70px;line-height:16.90px;font-size:13px;color:#1a1a1a;transform:scaleX(0.9150);transform-origin:0 50%;-webkit-text-stroke:0.15px currentColor;">0</span>
<svg style="left:451px;top:518.84px" width="6" height="6" viewBox="0 0 6 6"><path d="M0 0 H6 L0 6 Z" fill="#1e8a1e"/></svg>
<svg style="left:487px;top:518.84px" width="6" height="6" viewBox="0 0 6 6"><path d="M0 0 H6 L0 6 Z" fill="#1e8a1e"/></svg>
<svg style="left:519px;top:518.84px" width="6" height="6" viewBox="0 0 6 6"><path d="M0 0 H6 L0 6 Z" fill="#1e8a1e"/></svg>
<div style="left:205px;top:541.46px;width:5px;height:4.51px;background:rgb(183,188,193)"></div>
<div style="left:210px;top:541.46px;width:5px;height:4.51px;background:rgb(210,213,216)"></div>
<div style="left:215px;top:541.46px;width:5px;height:4.51px;background:rgb(196,201,206)"></div>
<div style="left:220px;top:541.46px;width:5px;height:4.51px;background:rgb(237,242,247)"></div>
<div style="left:225px;top:541.46px;width:5px;height:4.51px;background:rgb(187,186,185)"></div>
<div style="left:230px;top:541.46px;width:5px;height:4.51px;background:rgb(203,203,203)"></div>
<div style="left:235px;top:541.46px;width:5px;height:4.51px;background:rgb(178,182,186)"></div>
<div style="left:240px;top:541.46px;width:5px;height:4.51px;background:rgb(185,185,185)"></div>
<div style="left:245px;top:541.46px;width:5px;height:4.51px;background:rgb(223,226,229)"></div>
<div style="left:250px;top:541.46px;width:5px;height:4.51px;background:rgb(210,208,206)"></div>
<div style="left:255px;top:541.46px;width:5px;height:4.51px;background:rgb(176,177,178)"></div>
<div style="left:260px;top:541.46px;width:5px;height:4.51px;background:rgb(199,199,199)"></div>
<div style="left:265px;top:541.46px;width:5px;height:4.51px;background:rgb(198,196,194)"></div>
<div style="left:270px;top:541.46px;width:5px;height:4.51px;background:rgb(181,185,189)"></div>
<div style="left:275px;top:541.46px;width:5px;height:4.51px;background:rgb(171,175,179)"></div>
<div style="left:280px;top:541.46px;width:5px;height:4.51px;background:rgb(224,228,232)"></div>
<div style="left:285px;top:541.46px;width:5px;height:4.51px;background:rgb(198,197,196)"></div>
<div style="left:290px;top:541.46px;width:5px;height:4.51px;background:rgb(185,182,179)"></div>
<div style="left:205px;top:545.67px;width:5px;height:4.51px;background:rgb(147,146,145)"></div>
<div style="left:210px;top:545.67px;width:5px;height:4.51px;background:rgb(164,165,166)"></div>
<div style="left:215px;top:545.67px;width:5px;height:4.51px;background:rgb(171,175,179)"></div>
<div style="left:220px;top:545.67px;width:5px;height:4.51px;background:rgb(228,226,224)"></div>
<div style="left:225px;top:545.67px;width:5px;height:4.51px;background:rgb(145,145,145)"></div>
<div style="left:230px;top:545.67px;width:5px;height:4.51px;background:rgb(175,177,179)"></div>
<div style="left:235px;top:545.67px;width:5px;height:4.51px;background:rgb(161,161,161)"></div>
<div style="left:240px;top:545.67px;width:5px;height:4.51px;background:rgb(175,180,185)"></div>
<div style="left:245px;top:545.67px;width:5px;height:4.51px;background:rgb(246,245,244)"></div>
<div style="left:250px;top:545.67px;width:5px;height:4.51px;background:rgb(156,151,146)"></div>
<div style="left:255px;top:545.67px;width:5px;height:4.51px;background:rgb(166,171,176)"></div>
<div style="left:260px;top:545.67px;width:5px;height:4.51px;background:rgb(163,168,173)"></div>
<div style="left:265px;top:545.67px;width:5px;height:4.51px;background:rgb(175,179,183)"></div>
<div style="left:270px;top:545.67px;width:5px;height:4.51px;background:rgb(126,127,128)"></div>
<div style="left:275px;top:545.67px;width:5px;height:4.51px;background:rgb(140,144,148)"></div>
<div style="left:280px;top:545.67px;width:5px;height:4.51px;background:rgb(244,244,244)"></div>
<div style="left:285px;top:545.67px;width:5px;height:4.51px;background:rgb(165,166,167)"></div>
<div style="left:290px;top:545.67px;width:5px;height:4.51px;background:rgb(166,162,158)"></div>
<div style="left:205px;top:549.87px;width:5px;height:4.51px;background:rgb(201,202,203)"></div>
<div style="left:210px;top:549.87px;width:5px;height:4.51px;background:rgb(219,220,221)"></div>
<div style="left:215px;top:549.87px;width:5px;height:4.51px;background:rgb(214,219,224)"></div>
<div style="left:220px;top:549.87px;width:5px;height:4.51px;background:rgb(254,249,244)"></div>
<div style="left:225px;top:549.87px;width:5px;height:4.51px;background:rgb(199,204,209)"></div>
<div style="left:230px;top:549.87px;width:5px;height:4.51px;background:rgb(210,214,218)"></div>
<div style="left:235px;top:549.87px;width:5px;height:4.51px;background:rgb(232,230,228)"></div>
<div style="left:240px;top:549.87px;width:5px;height:4.51px;background:rgb(223,224,225)"></div>
<div style="left:245px;top:549.87px;width:5px;height:4.51px;background:rgb(245,243,241)"></div>
<div style="left:250px;top:549.87px;width:5px;height:4.51px;background:rgb(210,208,206)"></div>
<div style="left:255px;top:549.87px;width:5px;height:4.51px;background:rgb(206,211,216)"></div>
<div style="left:260px;top:549.87px;width:5px;height:4.51px;background:rgb(216,219,222)"></div>
<div style="left:265px;top:549.87px;width:5px;height:4.51px;background:rgb(215,215,215)"></div>
<div style="left:270px;top:549.87px;width:5px;height:4.51px;background:rgb(222,220,218)"></div>
<div style="left:275px;top:549.87px;width:5px;height:4.51px;background:rgb(227,223,219)"></div>
<div style="left:280px;top:549.87px;width:5px;height:4.51px;background:rgb(235,232,229)"></div>
<div style="left:285px;top:549.87px;width:5px;height:4.51px;background:rgb(213,212,211)"></div>
<div style="left:290px;top:549.87px;width:5px;height:4.51px;background:rgb(208,210,212)"></div>
<div style="left:203px;top:536.46px;width:2px;height:18.62px;background:#dcdcdc"></div>
<div style="left:203px;top:554.08px;width:158px;height:5px;background:#e2e27a"></div>
<span id="t264" class="t " style="left:363px;top:539.32px;line-height:16.90px;font-size:13px;color:#1a1a1a;transform:scaleX(0.9150);transform-origin:0 50%;-webkit-text-stroke:0.15px currentColor;">NO</span>
<span id="t265" class="t " style="left:405.5px;top:539.32px;line-height:16.90px;font-size:13px;color:#1a1a1a;transform:scaleX(0.9150);transform-origin:0 50%;-webkit-text-stroke:0.15px currentColor;">######</span>
<span id="t266" class="t " style="left:452px;top:539.32px;line-height:16.90px;font-size:13px;color:#1a1a1a;transform:scaleX(0.9150);transform-origin:0 50%;-webkit-text-stroke:0.15px currentColor;">001</span>
<span id="t267" class="t " style="left:488px;top:539.32px;line-height:16.90px;font-size:13px;color:#1a1a1a;transform:scaleX(0.9150);transform-origin:0 50%;-webkit-text-stroke:0.15px currentColor;">001</span>
<span id="t268" class="t " style="left:519.8px;top:539.32px;line-height:16.90px;font-size:13px;color:#1a1a1a;transform:scaleX(0.9150);transform-origin:0 50%;-webkit-text-stroke:0.15px currentColor;">000000804</span>
<span id="t269" class="t " style="left:670.5px;top:539.32px;line-height:16.90px;font-size:13px;color:#1a1a1a;transform:translateX(-100%) scaleX(0.9681);transform-origin:100% 50%;-webkit-text-stroke:0.15px currentColor;">02/12/2024</span>
<div style="left:675px;top:539px;width:5px;height:5px;background:rgb(202,208,216)"></div>
<div style="left:680px;top:539px;width:5px;height:5px;background:rgb(180,186,194)"></div>
<div style="left:685px;top:539px;width:5px;height:5px;background:rgb(217,223,231)"></div>
<div style="left:690px;top:539px;width:5px;height:5px;background:rgb(178,184,192)"></div>
<div style="left:695px;top:539px;width:5px;height:5px;background:rgb(206,212,220)"></div>
<div style="left:700px;top:539px;width:5px;height:5px;background:rgb(211,217,225)"></div>
<div style="left:705px;top:539px;width:5px;height:5px;background:rgb(210,216,224)"></div>
<div style="left:710px;top:539px;width:5px;height:5px;background:rgb(196,202,210)"></div>
<div style="left:715px;top:539px;width:5px;height:5px;background:rgb(186,192,200)"></div>
<div style="left:675px;top:544px;width:5px;height:5px;background:rgb(203,209,217)"></div>
<div style="left:680px;top:544px;width:5px;height:5px;background:rgb(182,188,196)"></div>
<div style="left:685px;top:544px;width:5px;height:5px;background:rgb(180,186,194)"></div>
<div style="left:690px;top:544px;width:5px;height:5px;background:rgb(192,198,206)"></div>
<div style="left:695px;top:544px;width:5px;height:5px;background:rgb(215,221,229)"></div>
<div style="left:700px;top:544px;width:5px;height:5px;background:rgb(181,187,195)"></div>
<div style="left:705px;top:544px;width:5px;height:5px;background:rgb(189,195,203)"></div>
<div style="left:710px;top:544px;width:5px;height:5px;background:rgb(182,188,196)"></div>
<div style="left:715px;top:544px;width:5px;height:5px;background:rgb(202,208,216)"></div>
<div style="left:675px;top:549px;width:5px;height:5px;background:rgb(207,213,221)"></div>
<div style="left:680px;top:549px;width:5px;height:5px;background:rgb(204,210,218)"></div>
<div style="left:685px;top:549px;width:5px;height:5px;background:rgb(187,193,201)"></div>
<div style="left:690px;top:549px;width:5px;height:5px;background:rgb(190,196,204)"></div>
<div style="left:695px;top:549px;width:5px;height:5px;background:rgb(184,190,198)"></div>
<div style="left:700px;top:549px;width:5px;height:5px;background:rgb(202,208,216)"></div>
<div style="left:705px;top:549px;width:5px;height:5px;background:rgb(205,211,219)"></div>
<div style="left:710px;top:549px;width:5px;height:5px;background:rgb(215,221,229)"></div>
<div style="left:715px;top:549px;width:5px;height:5px;background:rgb(219,225,233)"></div>
<span id="t270" class="t " style="left:774.5px;top:539.32px;line-height:16.90px;font-size:13px;color:#1a1a1a;transform:translateX(-100%) scaleX(0.9205);transform-origin:100% 50%;-webkit-text-stroke:0.15px currentColor;">0.00</span>
<span id="t271" class="t " style="left:779px;top:539.32px;line-height:16.90px;font-size:13px;color:#1a1a1a;transform:scaleX(0.9150);transform-origin:0 50%;-webkit-text-stroke:0.15px currentColor;">0</span>
<span id="t272" class="t " style="left:882px;top:539.32px;line-height:16.90px;font-size:13px;color:#1a1a1a;transform:scaleX(0.9150);transform-origin:0 50%;-webkit-text-stroke:0.15px currentColor;">100000</span>
<span id="t273" class="t " style="left:1018px;top:539.32px;line-height:16.90px;font-size:13px;color:#1a1a1a;transform:translateX(-100%) scaleX(0.9150);transform-origin:100% 50%;-webkit-text-stroke:0.15px currentColor;">0</span>
<span id="t274" class="t " style="left:1022px;top:539.32px;line-height:16.90px;font-size:13px;color:#1a1a1a;transform:scaleX(0.9150);transform-origin:0 50%;-webkit-text-stroke:0.15px currentColor;">0</span>
<span id="t275" class="t " style="left:1058px;top:539.32px;line-height:16.90px;font-size:13px;color:#1a1a1a;transform:scaleX(0.9150);transform-origin:0 50%;-webkit-text-stroke:0.15px currentColor;">5000</span>
<span id="t276" class="t " style="left:1251px;top:539.32px;line-height:16.90px;font-size:13px;color:#1a1a1a;transform:translateX(-100%) scaleX(0.9150);transform-origin:100% 50%;-webkit-text-stroke:0.15px currentColor;">0</span>
<span id="t277" class="t " style="left:1350px;top:539.32px;line-height:16.90px;font-size:13px;color:#1a1a1a;transform:translateX(-100%) scaleX(0.9150);transform-origin:100% 50%;-webkit-text-stroke:0.15px currentColor;">0</span>
<span id="t278" class="t " style="left:1354px;top:539.32px;line-height:16.90px;font-size:13px;color:#1a1a1a;transform:scaleX(0.9150);transform-origin:0 50%;-webkit-text-stroke:0.15px currentColor;">0</span>
<svg style="left:451px;top:537.46px" width="6" height="6" viewBox="0 0 6 6"><path d="M0 0 H6 L0 6 Z" fill="#1e8a1e"/></svg>
<svg style="left:487px;top:537.46px" width="6" height="6" viewBox="0 0 6 6"><path d="M0 0 H6 L0 6 Z" fill="#1e8a1e"/></svg>
<svg style="left:519px;top:537.46px" width="6" height="6" viewBox="0 0 6 6"><path d="M0 0 H6 L0 6 Z" fill="#1e8a1e"/></svg>
<svg style="left:674px;top:537.46px" width="5" height="5" viewBox="0 0 6 6"><path d="M0 0 H6 L0 6 Z" fill="#1e8a1e"/></svg>
<div style="left:205px;top:560.08px;width:5px;height:4.51px;background:rgb(202,207,0)"></div>
<div style="left:210px;top:560.08px;width:5px;height:4.51px;background:rgb(220,223,0)"></div>
<div style="left:215px;top:560.08px;width:5px;height:4.51px;background:rgb(220,223,0)"></div>
<div style="left:220px;top:560.08px;width:5px;height:4.51px;background:rgb(221,224,0)"></div>
<div style="left:225px;top:560.08px;width:5px;height:4.51px;background:rgb(252,252,0)"></div>
<div style="left:230px;top:560.08px;width:5px;height:4.51px;background:rgb(221,224,0)"></div>
<div style="left:235px;top:560.08px;width:5px;height:4.51px;background:rgb(215,218,0)"></div>
<div style="left:240px;top:560.08px;width:5px;height:4.51px;background:rgb(224,226,0)"></div>
<div style="left:245px;top:560.08px;width:5px;height:4.51px;background:rgb(252,252,0)"></div>
<div style="left:205px;top:564.29px;width:5px;height:4.51px;background:rgb(220,223,0)"></div>
<div style="left:210px;top:564.29px;width:5px;height:4.51px;background:rgb(198,203,0)"></div>
<div style="left:215px;top:564.29px;width:5px;height:4.51px;background:rgb(224,226,0)"></div>
<div style="left:220px;top:564.29px;width:5px;height:4.51px;background:rgb(228,230,0)"></div>
<div style="left:225px;top:564.29px;width:5px;height:4.51px;background:rgb(252,252,0)"></div>
<div style="left:230px;top:564.29px;width:5px;height:4.51px;background:rgb(222,224,0)"></div>
<div style="left:235px;top:564.29px;width:5px;height:4.51px;background:rgb(212,215,0)"></div>
<div style="left:240px;top:564.29px;width:5px;height:4.51px;background:rgb(207,211,0)"></div>
<div style="left:245px;top:564.29px;width:5px;height:4.51px;background:rgb(254,254,0)"></div>
<div style="left:205px;top:568.49px;width:5px;height:4.51px;background:rgb(214,217,0)"></div>
<div style="left:210px;top:568.49px;width:5px;height:4.51px;background:rgb(229,231,0)"></div>
<div style="left:215px;top:568.49px;width:5px;height:4.51px;background:rgb(230,232,0)"></div>
<div style="left:220px;top:568.49px;width:5px;height:4.51px;background:rgb(199,203,0)"></div>
<div style="left:225px;top:568.49px;width:5px;height:4.51px;background:rgb(252,252,0)"></div>
<div style="left:230px;top:568.49px;width:5px;height:4.51px;background:rgb(214,218,0)"></div>
<div style="left:235px;top:568.49px;width:5px;height:4.51px;background:rgb(217,220,0)"></div>
<div style="left:240px;top:568.49px;width:5px;height:4.51px;background:rgb(199,204,0)"></div>
<div style="left:245px;top:568.49px;width:5px;height:4.51px;background:rgb(252,252,0)"></div>
<div style="left:203px;top:555.08px;width:2px;height:18.62px;background:rgba(0,0,0,0.12)"></div>
<div style="left:203px;top:572.7px;width:158px;height:5px;background:#d0d040"></div>
<span id="t279" class="t " style="left:363px;top:557.94px;line-height:16.90px;font-size:13px;color:#1a1a1a;transform:scaleX(0.9150);transform-origin:0 50%;-webkit-text-stroke:0.15px currentColor;">NO</span>
<span id="t280" class="t " style="left:405.5px;top:557.94px;line-height:16.90px;font-size:13px;color:#1a1a1a;transform:scaleX(0.9150);transform-origin:0 50%;-webkit-text-stroke:0.15px currentColor;">######</span>
<span id="t281" class="t " style="left:452px;top:557.94px;line-height:16.90px;font-size:13px;color:#1a1a1a;transform:scaleX(0.9150);transform-origin:0 50%;-webkit-text-stroke:0.15px currentColor;">001</span>
<span id="t282" class="t " style="left:488px;top:557.94px;line-height:16.90px;font-size:13px;color:#1a1a1a;transform:scaleX(0.9150);transform-origin:0 50%;-webkit-text-stroke:0.15px currentColor;">002</span>
<span id="t283" class="t " style="left:519.8px;top:557.94px;line-height:16.90px;font-size:13px;color:#1a1a1a;transform:scaleX(0.9150);transform-origin:0 50%;-webkit-text-stroke:0.15px currentColor;">000003251</span>
<span id="t284" class="t " style="left:670.5px;top:557.94px;line-height:16.90px;font-size:13px;color:#9c0006;transform:translateX(-100%) scaleX(0.9681);transform-origin:100% 50%;-webkit-text-stroke:0.15px currentColor;">03/12/2024</span>
<div style="left:673px;top:570.7px;width:45px;height:4px;background:#c8ccd2"></div>
<span id="t285" class="t " style="left:774.5px;top:557.94px;line-height:16.90px;font-size:13px;color:#1a1a1a;transform:translateX(-100%) scaleX(0.9205);transform-origin:100% 50%;-webkit-text-stroke:0.15px currentColor;">0.00</span>
<span id="t286" class="t " style="left:779px;top:557.94px;line-height:16.90px;font-size:13px;color:#1a1a1a;transform:scaleX(0.9150);transform-origin:0 50%;-webkit-text-stroke:0.15px currentColor;">0</span>
<span id="t287" class="t " style="left:882px;top:557.94px;line-height:16.90px;font-size:13px;color:#1a1a1a;transform:scaleX(0.9150);transform-origin:0 50%;-webkit-text-stroke:0.15px currentColor;">100000</span>
<span id="t288" class="t " style="left:1018px;top:557.94px;line-height:16.90px;font-size:13px;color:#1a1a1a;transform:translateX(-100%) scaleX(0.9150);transform-origin:100% 50%;-webkit-text-stroke:0.15px currentColor;">0</span>
<span id="t289" class="t " style="left:1022px;top:557.94px;line-height:16.90px;font-size:13px;color:#1a1a1a;transform:scaleX(0.9150);transform-origin:0 50%;-webkit-text-stroke:0.15px currentColor;">0</span>
<span id="t290" class="t " style="left:1058px;top:557.94px;line-height:16.90px;font-size:13px;color:#1a1a1a;transform:scaleX(0.9150);transform-origin:0 50%;-webkit-text-stroke:0.15px currentColor;">15000</span>
<span id="t291" class="t " style="left:1251px;top:557.94px;line-height:16.90px;font-size:13px;color:#1a1a1a;transform:translateX(-100%) scaleX(0.9150);transform-origin:100% 50%;-webkit-text-stroke:0.15px currentColor;">0</span>
<span id="t292" class="t " style="left:1350px;top:557.94px;line-height:16.90px;font-size:13px;color:#1a1a1a;transform:translateX(-100%) scaleX(0.9150);transform-origin:100% 50%;-webkit-text-stroke:0.15px currentColor;">0</span>
<span id="t293" class="t " style="left:1354px;top:557.94px;line-height:16.90px;font-size:13px;color:#1a1a1a;transform:scaleX(0.9150);transform-origin:0 50%;-webkit-text-stroke:0.15px currentColor;">0</span>
<svg style="left:451px;top:556.08px" width="6" height="6" viewBox="0 0 6 6"><path d="M0 0 H6 L0 6 Z" fill="#1e8a1e"/></svg>
<svg style="left:487px;top:556.08px" width="6" height="6" viewBox="0 0 6 6"><path d="M0 0 H6 L0 6 Z" fill="#1e8a1e"/></svg>
<svg style="left:519px;top:556.08px" width="6" height="6" viewBox="0 0 6 6"><path d="M0 0 H6 L0 6 Z" fill="#1e8a1e"/></svg>
<div style="left:205px;top:578.70px;width:5px;height:4.51px;background:rgb(201,198,195)"></div>
<div style="left:210px;top:578.70px;width:5px;height:4.51px;background:rgb(188,186,184)"></div>
<div style="left:215px;top:578.70px;width:5px;height:4.51px;background:rgb(212,213,214)"></div>
<div style="left:220px;top:578.70px;width:5px;height:4.51px;background:rgb(249,244,239)"></div>
<div style="left:225px;top:578.70px;width:5px;height:4.51px;background:rgb(171,175,179)"></div>
<div style="left:230px;top:578.70px;width:5px;height:4.51px;background:rgb(219,215,211)"></div>
<div style="left:235px;top:578.70px;width:5px;height:4.51px;background:rgb(214,214,214)"></div>
<div style="left:240px;top:578.70px;width:5px;height:4.51px;background:rgb(183,188,193)"></div>
<div style="left:245px;top:578.70px;width:5px;height:4.51px;background:rgb(231,231,231)"></div>
<div style="left:250px;top:578.70px;width:5px;height:4.51px;background:rgb(179,184,189)"></div>
<div style="left:255px;top:578.70px;width:5px;height:4.51px;background:rgb(187,188,189)"></div>
<div style="left:260px;top:578.70px;width:5px;height:4.51px;background:rgb(181,177,173)"></div>
<div style="left:265px;top:578.70px;width:5px;height:4.51px;background:rgb(183,188,193)"></div>
<div style="left:270px;top:578.70px;width:5px;height:4.51px;background:rgb(231,230,229)"></div>
<div style="left:275px;top:578.70px;width:5px;height:4.51px;background:rgb(195,198,201)"></div>
<div style="left:280px;top:578.70px;width:5px;height:4.51px;background:rgb(213,214,215)"></div>
<div style="left:285px;top:578.70px;width:5px;height:4.51px;background:rgb(177,179,181)"></div>
<div style="left:290px;top:578.70px;width:5px;height:4.51px;background:rgb(223,221,219)"></div>
<div style="left:205px;top:582.91px;width:5px;height:4.51px;background:rgb(177,181,185)"></div>
<div style="left:210px;top:582.91px;width:5px;height:4.51px;background:rgb(168,172,176)"></div>
<div style="left:215px;top:582.91px;width:5px;height:4.51px;background:rgb(175,170,165)"></div>
<div style="left:220px;top:582.91px;width:5px;height:4.51px;background:rgb(239,242,245)"></div>
<div style="left:225px;top:582.91px;width:5px;height:4.51px;background:rgb(136,131,126)"></div>
<div style="left:230px;top:582.91px;width:5px;height:4.51px;background:rgb(141,140,139)"></div>
<div style="left:235px;top:582.91px;width:5px;height:4.51px;background:rgb(155,154,153)"></div>
<div style="left:240px;top:582.91px;width:5px;height:4.51px;background:rgb(161,156,151)"></div>
<div style="left:245px;top:582.91px;width:5px;height:4.51px;background:rgb(235,234,233)"></div>
<div style="left:250px;top:582.91px;width:5px;height:4.51px;background:rgb(125,126,127)"></div>
<div style="left:255px;top:582.91px;width:5px;height:4.51px;background:rgb(166,165,164)"></div>
<div style="left:260px;top:582.91px;width:5px;height:4.51px;background:rgb(168,173,178)"></div>
<div style="left:265px;top:582.91px;width:5px;height:4.51px;background:rgb(171,166,161)"></div>
<div style="left:270px;top:582.91px;width:5px;height:4.51px;background:rgb(232,231,230)"></div>
<div style="left:275px;top:582.91px;width:5px;height:4.51px;background:rgb(169,171,173)"></div>
<div style="left:280px;top:582.91px;width:5px;height:4.51px;background:rgb(121,120,119)"></div>
<div style="left:285px;top:582.91px;width:5px;height:4.51px;background:rgb(141,140,139)"></div>
<div style="left:290px;top:582.91px;width:5px;height:4.51px;background:rgb(224,228,232)"></div>
<div style="left:205px;top:587.11px;width:5px;height:4.51px;background:rgb(229,225,221)"></div>
<div style="left:210px;top:587.11px;width:5px;height:4.51px;background:rgb(225,223,221)"></div>
<div style="left:215px;top:587.11px;width:5px;height:4.51px;background:rgb(207,210,213)"></div>
<div style="left:220px;top:587.11px;width:5px;height:4.51px;background:rgb(225,230,235)"></div>
<div style="left:225px;top:587.11px;width:5px;height:4.51px;background:rgb(214,209,204)"></div>
<div style="left:230px;top:587.11px;width:5px;height:4.51px;background:rgb(221,225,229)"></div>
<div style="left:235px;top:587.11px;width:5px;height:4.51px;background:rgb(226,223,220)"></div>
<div style="left:240px;top:587.11px;width:5px;height:4.51px;background:rgb(207,210,213)"></div>
<div style="left:245px;top:587.11px;width:5px;height:4.51px;background:rgb(240,241,242)"></div>
<div style="left:250px;top:587.11px;width:5px;height:4.51px;background:rgb(213,210,207)"></div>
<div style="left:255px;top:587.11px;width:5px;height:4.51px;background:rgb(206,210,214)"></div>
<div style="left:260px;top:587.11px;width:5px;height:4.51px;background:rgb(207,206,205)"></div>
<div style="left:265px;top:587.11px;width:5px;height:4.51px;background:rgb(229,231,233)"></div>
<div style="left:270px;top:587.11px;width:5px;height:4.51px;background:rgb(236,239,242)"></div>
<div style="left:275px;top:587.11px;width:5px;height:4.51px;background:rgb(204,202,200)"></div>
<div style="left:280px;top:587.11px;width:5px;height:4.51px;background:rgb(215,220,225)"></div>
<div style="left:285px;top:587.11px;width:5px;height:4.51px;background:rgb(220,224,228)"></div>
<div style="left:290px;top:587.11px;width:5px;height:4.51px;background:rgb(246,249,252)"></div>
<div style="left:203px;top:573.7px;width:2px;height:18.62px;background:#dcdcdc"></div>
<span id="t294" class="t " style="left:363px;top:576.56px;line-height:16.90px;font-size:13px;color:#1a1a1a;transform:scaleX(0.9150);transform-origin:0 50%;-webkit-text-stroke:0.15px currentColor;">NO</span>
<span id="t295" class="t " style="left:405.5px;top:576.56px;line-height:16.90px;font-size:13px;color:#1a1a1a;transform:scaleX(0.9150);transform-origin:0 50%;-webkit-text-stroke:0.15px currentColor;">######</span>
<span id="t296" class="t " style="left:452px;top:576.56px;line-height:16.90px;font-size:13px;color:#1a1a1a;transform:scaleX(0.9150);transform-origin:0 50%;-webkit-text-stroke:0.15px currentColor;">001</span>
<span id="t297" class="t " style="left:488px;top:576.56px;line-height:16.90px;font-size:13px;color:#1a1a1a;transform:scaleX(0.9150);transform-origin:0 50%;-webkit-text-stroke:0.15px currentColor;">001</span>
<span id="t298" class="t " style="left:519.8px;top:576.56px;line-height:16.90px;font-size:13px;color:#1a1a1a;transform:scaleX(0.9150);transform-origin:0 50%;-webkit-text-stroke:0.15px currentColor;">000000999</span>
<span id="t299" class="t " style="left:670.5px;top:576.56px;line-height:16.90px;font-size:13px;color:#9c0006;transform:translateX(-100%) scaleX(0.9681);transform-origin:100% 50%;-webkit-text-stroke:0.15px currentColor;">03/12/2024</span>
<div style="left:675px;top:576px;width:5px;height:5px;background:rgb(216,222,230)"></div>
<div style="left:680px;top:576px;width:5px;height:5px;background:rgb(190,196,204)"></div>
<div style="left:685px;top:576px;width:5px;height:5px;background:rgb(215,221,229)"></div>
<div style="left:690px;top:576px;width:5px;height:5px;background:rgb(201,207,215)"></div>
<div style="left:695px;top:576px;width:5px;height:5px;background:rgb(215,221,229)"></div>
<div style="left:700px;top:576px;width:5px;height:5px;background:rgb(188,194,202)"></div>
<div style="left:705px;top:576px;width:5px;height:5px;background:rgb(206,212,220)"></div>
<div style="left:710px;top:576px;width:5px;height:5px;background:rgb(187,193,201)"></div>
<div style="left:715px;top:576px;width:5px;height:5px;background:rgb(212,218,226)"></div>
<div style="left:675px;top:581px;width:5px;height:5px;background:rgb(189,195,203)"></div>
<div style="left:680px;top:581px;width:5px;height:5px;background:rgb(178,184,192)"></div>
<div style="left:685px;top:581px;width:5px;height:5px;background:rgb(201,207,215)"></div>
<div style="left:690px;top:581px;width:5px;height:5px;background:rgb(209,215,223)"></div>
<div style="left:695px;top:581px;width:5px;height:5px;background:rgb(186,192,200)"></div>
<div style="left:700px;top:581px;width:5px;height:5px;background:rgb(200,206,214)"></div>
<div style="left:705px;top:581px;width:5px;height:5px;background:rgb(198,204,212)"></div>
<div style="left:710px;top:581px;width:5px;height:5px;background:rgb(183,189,197)"></div>
<div style="left:715px;top:581px;width:5px;height:5px;background:rgb(185,191,199)"></div>
<div style="left:675px;top:586px;width:5px;height:5px;background:rgb(191,197,205)"></div>
<div style="left:680px;top:586px;width:5px;height:5px;background:rgb(188,194,202)"></div>
<div style="left:685px;top:586px;width:5px;height:5px;background:rgb(178,184,192)"></div>
<div style="left:690px;top:586px;width:5px;height:5px;background:rgb(211,217,225)"></div>
<div style="left:695px;top:586px;width:5px;height:5px;background:rgb(219,225,233)"></div>
<div style="left:700px;top:586px;width:5px;height:5px;background:rgb(178,184,192)"></div>
<div style="left:705px;top:586px;width:5px;height:5px;background:rgb(218,224,232)"></div>
<div style="left:710px;top:586px;width:5px;height:5px;background:rgb(196,202,210)"></div>
<div style="left:715px;top:586px;width:5px;height:5px;background:rgb(183,189,197)"></div>
<span id="t300" class="t " style="left:774.5px;top:576.56px;line-height:16.90px;font-size:13px;color:#1a1a1a;transform:translateX(-100%) scaleX(0.9205);transform-origin:100% 50%;-webkit-text-stroke:0.15px currentColor;">0.00</span>
<span id="t301" class="t " style="left:779px;top:576.56px;line-height:16.90px;font-size:13px;color:#1a1a1a;transform:scaleX(0.9150);transform-origin:0 50%;-webkit-text-stroke:0.15px currentColor;">0</span>
<span id="t302" class="t " style="left:882px;top:576.56px;line-height:16.90px;font-size:13px;color:#1a1a1a;transform:scaleX(0.9150);transform-origin:0 50%;-webkit-text-stroke:0.15px currentColor;">2000000</span>
<span id="t303" class="t " style="left:1018px;top:576.56px;line-height:16.90px;font-size:13px;color:#1a1a1a;transform:translateX(-100%) scaleX(0.9150);transform-origin:100% 50%;-webkit-text-stroke:0.15px currentColor;">0</span>
<span id="t304" class="t " style="left:1022px;top:576.56px;line-height:16.90px;font-size:13px;color:#1a1a1a;transform:scaleX(0.9150);transform-origin:0 50%;-webkit-text-stroke:0.15px currentColor;">0</span>
<span id="t305" class="t " style="left:1058px;top:576.56px;line-height:16.90px;font-size:13px;color:#1a1a1a;transform:scaleX(0.9150);transform-origin:0 50%;-webkit-text-stroke:0.15px currentColor;">100000</span>
<span id="t306" class="t " style="left:1251px;top:576.56px;line-height:16.90px;font-size:13px;color:#1a1a1a;transform:translateX(-100%) scaleX(0.9150);transform-origin:100% 50%;-webkit-text-stroke:0.15px currentColor;">0</span>
<span id="t307" class="t " style="left:1350px;top:576.56px;line-height:16.90px;font-size:13px;color:#1a1a1a;transform:translateX(-100%) scaleX(0.9150);transform-origin:100% 50%;-webkit-text-stroke:0.15px currentColor;">0</span>
<span id="t308" class="t " style="left:1354px;top:576.56px;line-height:16.90px;font-size:13px;color:#1a1a1a;transform:scaleX(0.9150);transform-origin:0 50%;-webkit-text-stroke:0.15px currentColor;">0</span>
<svg style="left:451px;top:574.7px" width="6" height="6" viewBox="0 0 6 6"><path d="M0 0 H6 L0 6 Z" fill="#1e8a1e"/></svg>
<svg style="left:487px;top:574.7px" width="6" height="6" viewBox="0 0 6 6"><path d="M0 0 H6 L0 6 Z" fill="#1e8a1e"/></svg>
<svg style="left:519px;top:574.7px" width="6" height="6" viewBox="0 0 6 6"><path d="M0 0 H6 L0 6 Z" fill="#1e8a1e"/></svg>
<svg style="left:674px;top:574.7px" width="5" height="5" viewBox="0 0 6 6"><path d="M0 0 H6 L0 6 Z" fill="#1e8a1e"/></svg>
<div style="left:361px;top:405.2px;width:1077px;height:1.8px;background:#707070"></div>
<div style="left:361px;top:423.8px;width:1077px;height:1.8px;background:#707070"></div>
<div style="left:361px;top:442.5px;width:1077px;height:1.8px;background:#707070"></div>
<div style="left:361px;top:461.1px;width:1077px;height:1.8px;background:#707070"></div>
<div style="left:361px;top:479.7px;width:1077px;height:1.8px;background:#707070"></div>
<div style="left:361px;top:498.3px;width:1077px;height:1.8px;background:#707070"></div>
<div style="left:361px;top:516.9px;width:1077px;height:1.8px;background:#707070"></div>
<div style="left:361px;top:535.6px;width:1077px;height:1.8px;background:#707070"></div>
<div style="left:361px;top:554.2px;width:1077px;height:1.8px;background:#707070"></div>
<div style="left:361px;top:572.8px;width:1077px;height:1.8px;background:#707070"></div>
<div style="left:203px;top:591.4px;width:1235px;height:1.8px;background:#707070"></div>
<div style="left:203px;top:610.0px;width:1235px;height:1.8px;background:#707070"></div>
<div style="left:203px;top:628.7px;width:1235px;height:1.8px;background:#707070"></div>
<div style="left:203px;top:386.5px;width:1235px;height:1.5px;background:#2a2a3a"></div>
<div style="left:360.25px;top:387px;width:1.5px;height:253px;background:#33383c"></div>
<div style="left:400.25px;top:387px;width:1.5px;height:253px;background:#33383c"></div>
<div style="left:449.25px;top:387px;width:1.5px;height:253px;background:#33383c"></div>
<div style="left:485.25px;top:387px;width:1.5px;height:253px;background:#33383c"></div>
<div style="left:517.25px;top:387px;width:1.5px;height:253px;background:#33383c"></div>
<div style="left:595.25px;top:387px;width:1.5px;height:253px;background:#33383c"></div>
<div style="left:672.25px;top:387px;width:1.5px;height:253px;background:#33383c"></div>
<div style="left:717.25px;top:387px;width:1.5px;height:253px;background:#33383c"></div>
<div style="left:776.25px;top:387px;width:1.5px;height:253px;background:#33383c"></div>
<div style="left:879.25px;top:387px;width:1.5px;height:253px;background:#33383c"></div>
<div style="left:983.25px;top:387px;width:1.5px;height:253px;background:#33383c"></div>
<div style="left:1019.25px;top:387px;width:1.5px;height:253px;background:#33383c"></div>
<div style="left:1055.25px;top:387px;width:1.5px;height:253px;background:#33383c"></div>
<div style="left:1153.25px;top:387px;width:1.5px;height:253px;background:#33383c"></div>
<div style="left:1252.25px;top:387px;width:1.5px;height:253px;background:#33383c"></div>
<div style="left:1351.25px;top:387px;width:1.5px;height:253px;background:#33383c"></div>
<div style="left:1252px;top:479.6px;width:101px;height:20.62px;border:2px solid #107c41"></div>
<div style="left:1349px;top:496.22px;width:5px;height:5px;background:#107c41;border:1px solid #fff"></div>
<div style="left:1438px;top:305px;width:20px;height:335px;background:#efefef"></div>
<svg style="left:1444px;top:308px" width="10" height="7" viewBox="0 0 10 7"><path d="M0.5 6.5 H9.5 L5 0.5 Z" fill="#555"/></svg>
<div style="left:1444.5px;top:318px;width:7px;height:17px;background:#888;border-radius:3.5px"></div>
<svg style="left:1444px;top:629px" width="10" height="7" viewBox="0 0 10 7"><path d="M0.5 0.5 H9.5 L5 6.5 Z" fill="#555"/></svg>
<div style="left:179px;top:640px;width:1279px;height:11px;background:#efefef;border-top:1px solid #dcdcdc"></div>
<div style="left:287px;top:643.8px;width:81px;height:10px;background:#0f62f0;border-radius:4px 4px 0 0"></div>
<div style="left:373px;top:643px;width:1px;height:8px;background:#bdbdbd"></div>
<div style="left:376px;top:642.5px;width:131px;height:10px;background:#e6e6e6;border:1px solid #cfcfcf;border-radius:4px 4px 0 0"></div>
<span id="t309" class="t " style="left:441px;top:646.05px;line-height:16.90px;font-size:13px;color:#222;transform:translateX(-50%) scaleX(1.0019);transform-origin:50% 50%;">Compras Detalladas</span>
<div style="left:517.6px;top:643.8px;width:146.39999999999998px;height:10px;background:#002060;border-radius:4px 4px 0 0"></div>
<div style="left:673.6px;top:643.8px;width:140.79999999999995px;height:10px;background:#002060;border-radius:4px 4px 0 0"></div>
<div style="left:823.5px;top:643.8px;width:141.5px;height:10px;background:#002060;border-radius:4px 4px 0 0"></div>
<div style="left:974px;top:643.8px;width:83px;height:10px;background:#f4b183;border-radius:4px 4px 0 0"></div>
<div style="left:1057px;top:643px;width:1px;height:8px;background:#bdbdbd"></div>
<span id="t310" class="t " style="left:327px;top:647.05px;line-height:16.90px;font-size:13px;color:#fff;transform:translateX(-50%) scaleX(0.9423);transform-origin:50% 50%;">Información</span>
<span id="t311" class="t " style="left:590.8px;top:647.05px;line-height:16.90px;font-size:13px;color:#fff;transform:translateX(-50%) scaleX(0.8552);transform-origin:50% 50%;">Compras Retenciones</span>
<span id="t312" class="t " style="left:744px;top:647.05px;line-height:16.90px;font-size:13px;color:#fff;transform:translateX(-50%) scaleX(1.0496);transform-origin:50% 50%;">Ventas Detalladas</span>
<span id="t313" class="t " style="left:894px;top:647.05px;line-height:16.90px;font-size:13px;color:#fff;transform:translateX(-50%) scaleX(0.9063);transform-origin:50% 50%;">Compras Resumidas</span>
<span id="t314" class="t " style="left:1015px;top:647.05px;line-height:16.90px;font-size:13px;color:#333;transform:translateX(-50%) scaleX(0.8739);transform-origin:50% 50%;">Ventas Elec</span>
<span id="t315" class="t " style="left:220px;top:647.05px;line-height:16.90px;font-size:13px;color:#666;transform:translateX(-50%) scaleX(0.7882);transform-origin:50% 50%;">◀ ▶ ...</span>
<span id="t316" class="t " style="left:1236px;top:633.62px;line-height:22.75px;font-size:17.5px;color:#a8a8a8;transform:translateX(-50%) scaleX(1.0437);transform-origin:50% 50%;">Activar Windows</span>
<div style="left:1188px;top:649.5px;width:68px;height:3px;background:#8a8a8a;border-radius:2px"></div>
<div style="left:199.8px;top:99.8px;width:90.3px;height:94.2px;border:3px solid #0e8a0e"></div>
<div style="left:894px;top:109.8px;width:127.5px;height:81.5px;border:3px solid #0e8a0e"></div>
<div style="left:507.5px;top:385.5px;width:89px;height:76px;border:3px solid #0e8a0e"></div>
<div style="left:1050.8px;top:379.8px;width:59px;height:83px;border:3px solid #0e8a0e"></div>
<svg style="left:0;top:0" width="1458" height="651" viewBox="0 0 1458 651">
<line x1="985.5" y1="191" x2="1053" y2="376" stroke="#0e8a0e" stroke-width="2.6"/>
<path d="M1055.5 383 L1047.5 368 L1057 365.5 Z" fill="#0e8a0e"/>
</svg>
</body></html>
